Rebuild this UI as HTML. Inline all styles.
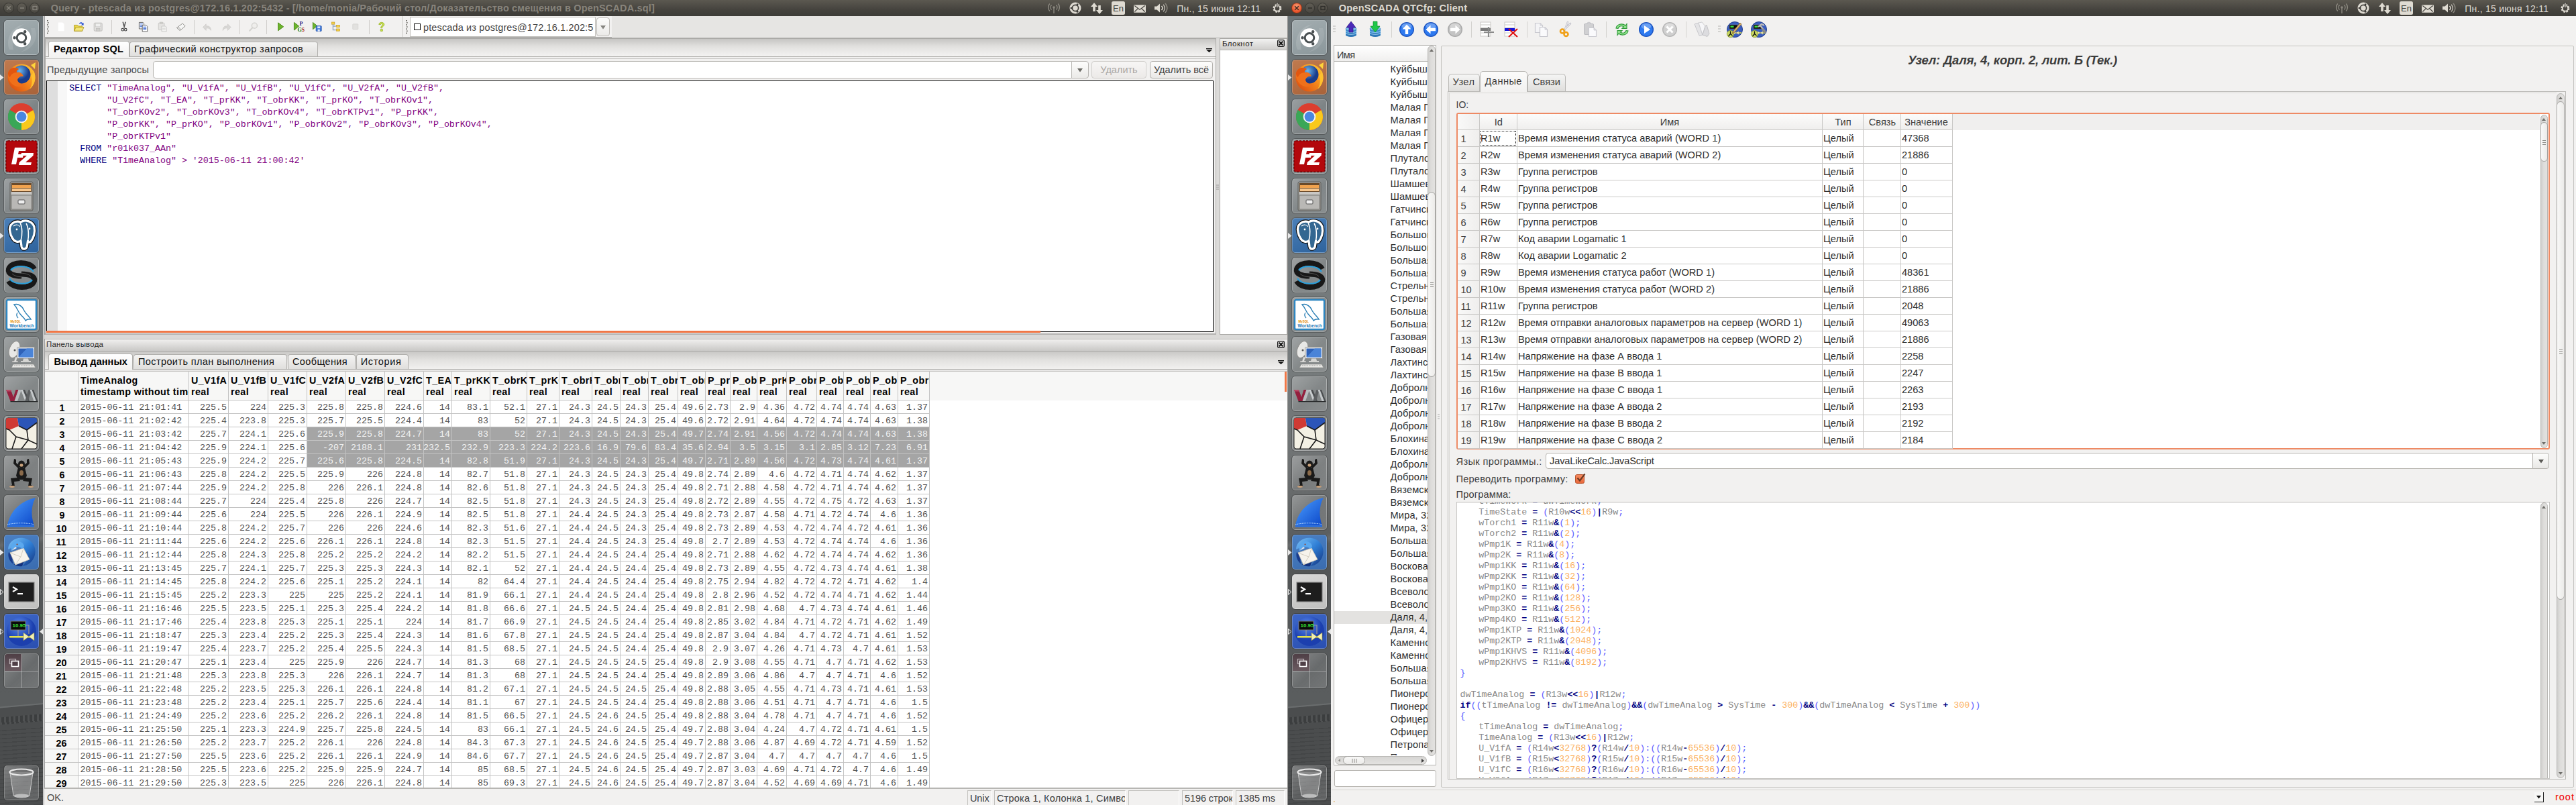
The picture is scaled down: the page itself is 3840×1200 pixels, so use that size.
<!DOCTYPE html><html><head><meta charset="utf-8"><title>desktop</title><style>
html,body{margin:0;padding:0;background:#3c3b37;}
body{width:3840px;height:1200px;position:relative;overflow:hidden;font-family:"Liberation Sans",sans-serif;}
div{position:absolute;box-sizing:border-box;}
.t{white-space:pre;}
svg{position:absolute;overflow:visible;}
.scr{left:0;top:0;width:1920px;height:1200px;overflow:hidden;}
</style></head><body><div class="scr">
<div style="left:0px;top:24px;width:64px;height:1176px;background:linear-gradient(#6b7376 0%,#73797b 23%,#767b7c 45%,#6f7273 57%,#5d6061 65%,#525556 70%,#55585a 79%,#5a5d5e 86%,#5a5d5e 100%);"></div>
<div style="left:0px;top:790px;width:64px;height:40px;background:linear-gradient(170deg,rgba(130,133,134,0) 30%,rgba(130,133,134,.35) 45%,rgba(130,133,134,0) 60%);"></div>
<div style="left:0px;top:1040px;width:64px;height:160px;overflow:hidden;">
<div style="left:-40px;top:19px;width:160px;height:190px;background:#4b4d4e;transform:rotate(-5deg);transform-origin:0 0;"></div>
<div style="left:-40px;top:17px;width:160px;height:2px;background:#6a6d6e;transform:rotate(-5deg);transform-origin:0 0;"></div>
<div style="left:-40px;top:33px;width:160px;height:11px;background:repeating-linear-gradient(90deg,#393b3c 0 4px,#505253 4px 7px);transform:rotate(-5deg);transform-origin:0 0;opacity:.85;"></div>
<div style="left:-40px;top:49px;width:160px;height:160px;background:repeating-linear-gradient(0deg,rgba(58,60,61,.45) 0 1.500px,rgba(80,83,84,.0) 1.500px 6px);transform:rotate(-4deg);transform-origin:0 0;"></div>
</div>
<div style="left:64px;top:24px;width:1px;height:1176px;background:#dadada;"></div>
<div style="left:65px;top:24px;width:2px;height:1176px;background:#a8a8a8;"></div>
<div style="left:6px;top:30px;width:52px;height:52px;border-radius:5px;background:linear-gradient(160deg,#a3adb0,#8b979b);border:1px solid rgba(255,255,255,.25);box-shadow:0 0 0 1px rgba(40,40,40,.35);"></div>
<svg style="left:6px;top:30px" width="52" height="52" viewBox="0 0 52 52"><path d="M8 44C2 30 10 10 30 6C18 12 10 26 14 44z" fill="rgba(255,255,255,.13)"/><path d="M46 12C52 26 44 44 24 48C36 42 44 30 40 12z" fill="rgba(255,255,255,.10)"/><g transform="translate(0,0.3)"><circle cx="26" cy="26" r="14" fill="#fff"/><circle cx="26" cy="26" r="6.8" fill="none" stroke="#4a5052" stroke-width="3"/><circle cx="15.6" cy="26" r="2.2" fill="#4a5052"/><circle cx="31.2" cy="17" r="2.2" fill="#4a5052"/><circle cx="31.2" cy="35" r="2.2" fill="#4a5052"/></g></svg>
<div style="left:6px;top:89px;width:52px;height:52px;border-radius:5px;background:linear-gradient(160deg,#c07a4e,#a8633a);border:1px solid rgba(255,255,255,.25);box-shadow:0 0 0 1px rgba(40,40,40,.35);"></div>
<svg style="left:6px;top:89px" width="52" height="52" viewBox="0 0 52 52"><defs><radialGradient id="ffg" cx="40%" cy="30%"><stop offset="0" stop-color="#6ab8f0"/><stop offset="1" stop-color="#1a3c8c"/></radialGradient><linearGradient id="ffo" x1="1" y1="0" x2="0" y2="1"><stop offset="0" stop-color="#ffd43a"/><stop offset=".45" stop-color="#f58a1c"/><stop offset="1" stop-color="#d8430e"/></linearGradient></defs><circle cx="26" cy="27" r="20.500" fill="url(#ffo)"/><path d="M40 8L47 4L46 14z" fill="#ffd43a"/><circle cx="26" cy="22" r="13.500" fill="url(#ffg)"/><path d="M6 20C8 12 16 10 22 14C19 15 18 17 19 19C24 18 28 21 29 25C25 24 21 26 20 30C21 35 27 38 33 36C28 42 16 42 10 34C7 30 5 25 6 20z" fill="#f0701a"/><path d="M6 20C8 12 16 10 22 14C19 15 18 17 19 19C14 19 10 22 9 26C7 25 6 23 6 20z" fill="#e2560f"/><path d="M44 16C49 26 46 38 38 44C42 38 43 30 40 24C42 22 44 19 44 16z" fill="#ffc02e"/></svg>
<svg style="left:0px;top:111px" width="6" height="9" viewBox="0 0 6 9"><path d="M0 0L5.500 4.500L0 9z" fill="#e8e8e8"/></svg>
<div style="left:6px;top:148px;width:52px;height:52px;border-radius:5px;background:linear-gradient(135deg,rgba(255,255,255,.30),rgba(255,255,255,.10) 55%,rgba(255,255,255,.16));border:1px solid rgba(255,255,255,.22);box-shadow:0 0 0 1px rgba(40,40,40,.35);"></div>
<svg style="left:6px;top:148px" width="52" height="52" viewBox="0 0 52 52"><circle cx="26" cy="26" r="20" fill="#dc3e2f"/><path d="M26 26L8.7 16A20 20 0 0 0 26 46z" fill="#3aa757"/><path d="M26 26L26 46A20 20 0 0 0 43.3 16z" fill="#f9c91c"/><path d="M26 26L8.7 16A20 20 0 0 1 43.3 16z" fill="#dc3e2f"/><path d="M26 26L16 43.3A20 20 0 0 1 8.7 16z" fill="#3aa757"/><circle cx="26" cy="26" r="9.3" fill="#f4f4f4"/><circle cx="26" cy="26" r="7.4" fill="#4a87e0"/></svg>
<div style="left:6px;top:207px;width:52px;height:52px;border-radius:5px;background:linear-gradient(135deg,rgba(255,255,255,.30),rgba(255,255,255,.10) 55%,rgba(255,255,255,.16));border:1px solid rgba(255,255,255,.22);box-shadow:0 0 0 1px rgba(40,40,40,.35);"></div>
<svg style="left:6px;top:207px" width="52" height="52" viewBox="0 0 52 52"><rect x="3" y="3" width="46" height="46" rx="3" fill="#b3080c" stroke="#7d0003" stroke-width="1.5" stroke-dasharray="3 2"/><path d="M11 38L16 13H33L32 18H22L21 23H29L28 28H20L18 38z" fill="#fff"/><path d="M26 21H44L43.5 25L32 35H41L40 39H22L22.7 35L34 25H25z" fill="#fff"/></svg>
<div style="left:6px;top:266px;width:52px;height:52px;border-radius:5px;background:linear-gradient(135deg,rgba(255,255,255,.30),rgba(255,255,255,.10) 55%,rgba(255,255,255,.16));border:1px solid rgba(255,255,255,.22);box-shadow:0 0 0 1px rgba(40,40,40,.35);"></div>
<svg style="left:6px;top:266px" width="52" height="52" viewBox="0 0 52 52"><rect x="9" y="5" width="34" height="43" rx="2" fill="#9b9a97" stroke="#5d5c59"/><rect x="11" y="7" width="30" height="16" fill="#6a4a2a"/><rect x="12" y="10" width="28" height="4" fill="#f0a24e"/><rect x="12" y="15" width="28" height="4" fill="#f7c78e"/><rect x="11" y="20" width="30" height="4" fill="#c9c8c5"/><rect x="11" y="25" width="30" height="21" fill="#b9b8b5" stroke="#7d7c79"/><rect x="21" y="32" width="10" height="6" rx="1" fill="#eee" stroke="#555"/></svg>
<div style="left:6px;top:325px;width:52px;height:52px;border-radius:5px;background:linear-gradient(160deg,#4a7fb8,#2e639d);border:1px solid rgba(255,255,255,.25);box-shadow:0 0 0 1px rgba(40,40,40,.35);"></div>
<svg style="left:6px;top:325px" width="52" height="52" viewBox="0 0 52 52"><path d="M9 21C6 9 16 3 25 6C31 2 42 4 45 13C47 21 44 30 40 35C38.500 37 36 36 35.500 34L34.500 41C34 47 27 48 26 42.500L25 34C21 37 15 35 12.500 30C10.500 27 9.500 24 9 21z" fill="none" stroke="#111" stroke-width="5.500" stroke-linejoin="round"/><path d="M9 21C6 9 16 3 25 6C31 2 42 4 45 13C47 21 44 30 40 35C38.500 37 36 36 35.500 34L34.500 41C34 47 27 48 26 42.500L25 34C21 37 15 35 12.500 30C10.500 27 9.500 24 9 21z" fill="#336791" stroke="#fff" stroke-width="3.200" stroke-linejoin="round"/><path d="M24 7C27.500 14 27.500 25 25 34M33 8C37 15 37 27 35.500 34" stroke="#fff" stroke-width="1.600" fill="none"/><path d="M14 12C18 9 22 10 24 13" stroke="#fff" stroke-width="1.200" fill="none"/><circle cx="19" cy="17" r="1.400" fill="#fff"/><circle cx="38" cy="16" r="1.400" fill="#fff"/></svg>
<svg style="left:0px;top:347px" width="6" height="9" viewBox="0 0 6 9"><path d="M0 0L5.500 4.500L0 9z" fill="#e8e8e8"/></svg>
<div style="left:6px;top:384px;width:52px;height:52px;border-radius:5px;background:linear-gradient(135deg,rgba(255,255,255,.30),rgba(255,255,255,.10) 55%,rgba(255,255,255,.16));border:1px solid rgba(255,255,255,.22);box-shadow:0 0 0 1px rgba(40,40,40,.35);"></div>
<svg style="left:6px;top:384px" width="52" height="52" viewBox="0 0 52 52"><path d="M45 17C39 5 11 5 7 17C5 25 16 27.500 26 27.500" fill="none" stroke="#181818" stroke-width="8"/><path d="M7 35C13 47 41 47 45 35C47 27 36 24.500 26 24.500" fill="none" stroke="#181818" stroke-width="8"/><path d="M44 21C38 11 14 11 10 19" fill="none" stroke="#2aa0dc" stroke-width="2.200"/><path d="M8 31C14 41 38 41 42 33" fill="none" stroke="#2aa0dc" stroke-width="2.200"/><path d="M12 24C16 28 22 28.500 27 29M40 28C36 24 30 23.500 25 23" fill="none" stroke="#555" stroke-width="1"/></svg>
<div style="left:6px;top:443px;width:52px;height:52px;border-radius:5px;background:linear-gradient(135deg,rgba(255,255,255,.30),rgba(255,255,255,.10) 55%,rgba(255,255,255,.16));border:1px solid rgba(255,255,255,.22);box-shadow:0 0 0 1px rgba(40,40,40,.35);"></div>
<svg style="left:6px;top:443px" width="52" height="52" viewBox="0 0 52 52"><rect x="4" y="4" width="44" height="44" rx="2" fill="#fff" stroke="#2e86c1" stroke-width="2.400"/><path d="M15 11C21 9 27 13 30 20C33 26 38 29 40 33C37 32.500 34 33 32 35C31 31 27 29 24 25C21 22 20 16 15 11z" fill="#fff" stroke="#2a7fb5" stroke-width="1.400"/><path d="M20 23C18 26 19 29 21 31" fill="none" stroke="#2a7fb5" stroke-width="1.300"/></svg>
<div class="t" style="top:476.5px;line-height:6px;font-size:4.5px;color:#e48e00;font-weight:bold;left:15.5px;">MySQL</div>
<div class="t" style="top:480.5px;line-height:9px;font-size:6.7px;color:#1f78b4;font-weight:bold;left:14.5px;">Workbench</div>
<div style="left:6px;top:502px;width:52px;height:52px;border-radius:5px;background:linear-gradient(135deg,rgba(255,255,255,.30),rgba(255,255,255,.10) 55%,rgba(255,255,255,.16));border:1px solid rgba(255,255,255,.22);box-shadow:0 0 0 1px rgba(40,40,40,.35);"></div>
<svg style="left:6px;top:502px" width="52" height="52" viewBox="0 0 52 52"><ellipse cx="15.500" cy="19" rx="7.500" ry="13" fill="#e8e8e6" stroke="#8f8f8c" transform="rotate(20 15.500 19)"/><circle cx="16" cy="20" r="1.500" fill="#555"/><path d="M17 30L15 36H12V38H21V36H18.500L20 30z" fill="#e0e0de" stroke="#8f8f8c" stroke-width=".6"/><rect x="19.500" y="15.500" width="26" height="17" rx="1" fill="#f4f4f2" stroke="#8b8b88"/><rect x="21.500" y="17.500" width="22" height="13" fill="#2e62b8"/><path d="M21.500 30.500L34 17.500H43.500V30.500z" fill="#4a84d8"/><path d="M29 32.500H36L37 36H28z" fill="#d5d5d2"/><rect x="25" y="36" width="15" height="1.500" fill="#e5e5e2"/><path d="M14 41H44L47 46H11z" fill="#e8e8e5" stroke="#8f8f8c" stroke-width=".6"/><path d="M15 43H43" stroke="#9a9a97" stroke-width="1" stroke-dasharray="1.500 1"/></svg>
<div style="left:6px;top:561px;width:52px;height:52px;border-radius:5px;background:linear-gradient(135deg,rgba(255,255,255,.30),rgba(255,255,255,.10) 55%,rgba(255,255,255,.16));border:1px solid rgba(255,255,255,.22);box-shadow:0 0 0 1px rgba(40,40,40,.35);"></div>
<svg style="left:6px;top:561px" width="52" height="52" viewBox="0 0 52 52"><path d="M3 20H10L14 31L17.500 20H21.500L15.500 37H9.500z" fill="#94203e"/><path d="M3 20H10L11 22.500H4z" fill="#b84a66"/><path d="M21.500 20H26L20 37H15.500z" fill="#b9bdbf"/><path d="M25 20H30L37 37H31.500z" fill="#c9cdcf"/><path d="M28 20H31L38 37H35z" fill="#4c4f51"/><path d="M31 37L36.500 20H40.500L36 37z" fill="#5c5f61"/><path d="M38.500 20H43.500L50 37H44.500z" fill="#c4c8ca"/><path d="M41.500 20H44L50.500 37H48z" fill="#4c4f51"/><path d="M9.500 37H50.500V38.200H9.500z" fill="#2a2c2d"/></svg>
<div style="left:6px;top:620px;width:52px;height:52px;border-radius:5px;background:linear-gradient(135deg,rgba(255,255,255,.30),rgba(255,255,255,.10) 55%,rgba(255,255,255,.16));border:1px solid rgba(255,255,255,.22);box-shadow:0 0 0 1px rgba(40,40,40,.35);"></div>
<svg style="left:6px;top:620px" width="52" height="52" viewBox="0 0 52 52"><rect x="3" y="3" width="46" height="46" rx="3" fill="#f3f0e4" stroke="#222" stroke-width="1"/><path d="M3 6Q3 3 6 3H20L22 15L8 21L3 19z" fill="#cf3a34"/><path d="M20 3H46Q49 3 49 6V10L34 21L22 15z" fill="#2b55b8"/><path d="M22 15L34 21L49 10M34 21L36 36L49 42M36 36L26 49M36 36L18 31L8 21M18 31L12 49M8 21L3 19" stroke="#1a1a1a" stroke-width="1.6" fill="none"/></svg>
<div style="left:6px;top:679px;width:52px;height:52px;border-radius:5px;background:linear-gradient(135deg,rgba(255,255,255,.30),rgba(255,255,255,.10) 55%,rgba(255,255,255,.16));border:1px solid rgba(255,255,255,.22);box-shadow:0 0 0 1px rgba(40,40,40,.35);"></div>
<svg style="left:6px;top:679px" width="52" height="52" viewBox="0 0 52 52"><g fill="#1a1a1a"><ellipse cx="26" cy="13" rx="5" ry="5.5"/><path d="M21 18H31L34 30L31 36H21L18 30z"/><path d="M21 19L14 12L15 5L18 6L18 11L24 16zM31 19L38 12L37 5L34 6L34 11L28 16z"/><path d="M21 33L10 34L12 44L8 46L16 47L15 39L24 38zM31 33L42 34L40 44L44 46L36 47L37 39L28 38z"/></g><ellipse cx="26" cy="14.500" rx="2.6" ry="2.2" fill="#c9a27c"/><ellipse cx="26" cy="26" rx="3" ry="4" fill="#8a6a4a"/><ellipse cx="12" cy="46.500" rx="4" ry="1.4" fill="#c9a27c"/><ellipse cx="40" cy="46.500" rx="4" ry="1.4" fill="#c9a27c"/></svg>
<div style="left:6px;top:738px;width:52px;height:52px;border-radius:5px;background:linear-gradient(135deg,rgba(255,255,255,.30),rgba(255,255,255,.10) 55%,rgba(255,255,255,.16));border:1px solid rgba(255,255,255,.22);box-shadow:0 0 0 1px rgba(40,40,40,.35);"></div>
<svg style="left:6px;top:738px" width="52" height="52" viewBox="0 0 52 52"><defs><linearGradient id="shg" x1="0" y1="0" x2="1" y2="1"><stop offset="0" stop-color="#4da0ff"/><stop offset="1" stop-color="#0b46c8"/></linearGradient></defs><path d="M5 45C8 28 20 10 47 4C40 16 40 32 45 45z" fill="url(#shg)"/><path d="M5 45H45V48H5z" fill="#2f6fd8"/><path d="M5 44C15 41 35 41 45 44" stroke="#bfe0ff" stroke-width="1" fill="none" stroke-dasharray="1.5 1"/></svg>
<div style="left:6px;top:797px;width:52px;height:52px;border-radius:5px;background:linear-gradient(160deg,#4a80c4,#3a6cb0);border:1px solid rgba(255,255,255,.25);box-shadow:0 0 0 1px rgba(40,40,40,.35);"></div>
<svg style="left:6px;top:797px" width="52" height="52" viewBox="0 0 52 52"><defs><linearGradient id="tbg" x1="0" y1="0" x2="1" y2="1"><stop offset="0" stop-color="#7cc0f4"/><stop offset=".5" stop-color="#2f7fd6"/><stop offset="1" stop-color="#14337e"/></linearGradient></defs><path d="M6 22C6 10 18 3 29 5C41 7 49 18 46 30C44 39 37 46 27 47C33 42 35 36 33 30C31 22 24 18 16 19C12 19.500 8 21 6 22z" fill="url(#tbg)"/><path d="M7 26C5 32 8 40 14 44C12 40 12 36 14 33z" fill="#1a3c8c"/><path d="M27 47C22 48 17 46 14 44C20 44 26 42 30 38z" fill="#14337e"/><path d="M9 27L29 20L38 37L17 45z" fill="#f6f3ec" stroke="#c4bfb2" stroke-width=".8"/><path d="M9 27L25 33L29 20M25 33L17 45" stroke="#cdc8bb" stroke-width=".9" fill="none"/><path d="M13 13C17 9 24 9 28 13C31 16 30 20 27 21C25 18 21 17 17 18L11 24C10 20 11 16 13 13z" fill="#5aa8ee"/><path d="M11 24L17 18L19 20z" fill="#dfe6ee"/><circle cx="19.500" cy="14.500" r="1" fill="#a03818"/></svg>
<svg style="left:0px;top:819px" width="6" height="9" viewBox="0 0 6 9"><path d="M0 0L5.500 4.500L0 9z" fill="#e8e8e8"/></svg>
<div style="left:6px;top:856px;width:52px;height:52px;border-radius:5px;background:linear-gradient(160deg,#d9d9d8,#bfbfbe);border:1px solid rgba(255,255,255,.25);box-shadow:0 0 0 1px rgba(40,40,40,.35);"></div>
<svg style="left:6px;top:856px" width="52" height="52" viewBox="0 0 52 52"><rect x="7" y="12" width="38" height="29" fill="#1d1d1d" stroke="#888" stroke-width="1.2"/><path d="M13 19L19 22.500L13 26" stroke="#fff" stroke-width="2.2" fill="none"/><rect x="20" y="28" width="8" height="2.2" fill="#fff"/></svg>
<svg style="left:0px;top:878px" width="6" height="9" viewBox="0 0 6 9"><path d="M0.500 0.500L5 4.500L0.500 8.500z" fill="none" stroke="#e8e8e8"/></svg>
<div style="left:6px;top:915px;width:52px;height:52px;border-radius:5px;background:linear-gradient(160deg,#3c66c8,#2a4fb0);border:1px solid rgba(255,255,255,.25);box-shadow:0 0 0 1px rgba(40,40,40,.35);"></div>
<svg style="left:6px;top:915px" width="52" height="52" viewBox="0 0 52 52"><defs><radialGradient id="osg" cx="40%" cy="30%"><stop offset="0" stop-color="#5a8cf0"/><stop offset="1" stop-color="#1c3fae"/></radialGradient></defs><circle cx="26" cy="26" r="22" fill="url(#osg)"/><rect x="10" y="11" width="22" height="13" fill="#0a0a0a" stroke="#777" stroke-width="1"/><path d="M32 17H37V30M21 24V34" stroke="#999" stroke-width="1.2" fill="none"/><rect x="8" y="33" width="36" height="2.6" fill="#e6e34a"/><path d="M29 28L29 40L37 34zM45 28L45 40L37 34z" fill="#f3efb0" stroke="#8a8740" stroke-width=".6"/></svg>
<div class="t" style="top:927.0px;line-height:11px;font-size:8px;color:#35e635;font-weight:bold;left:18.5px;">10.95</div>
<svg style="left:0px;top:937px" width="6" height="9" viewBox="0 0 6 9"><path d="M0.500 0.500L5 4.500L0.500 8.500z" fill="none" stroke="#e8e8e8"/></svg>
<svg style="left:59px;top:937px" width="6" height="9" viewBox="0 0 6 9"><path d="M5.500 0L0 4.500L5.500 9z" fill="#e8e8e8"/></svg>
<div style="left:6px;top:974px;width:52px;height:52px;border-radius:5px;background:linear-gradient(135deg,rgba(255,255,255,.30),rgba(255,255,255,.10) 55%,rgba(255,255,255,.16));border:1px solid rgba(255,255,255,.22);box-shadow:0 0 0 1px rgba(40,40,40,.35);"></div>
<div style="left:7px;top:975px;width:25px;height:25px;background:linear-gradient(#4f3f46,#6a5a60);border-radius:4px 0 0 0;"></div>
<div style="left:32px;top:975px;width:1px;height:50px;background:rgba(255,255,255,.35);"></div>
<div style="left:7px;top:1000px;width:50px;height:1px;background:rgba(255,255,255,.35);"></div>
<svg style="left:6px;top:974px" width="52" height="52" viewBox="0 0 52 52"><rect x="8.500" y="8.500" width="9" height="7" fill="none" stroke="#b9b0b4" stroke-width="1.2"/><rect x="11.500" y="11.500" width="10" height="8" fill="#4f3f46" stroke="#fff" stroke-width="1.6"/></svg>
<div style="left:6px;top:1141px;width:52px;height:52px;border-radius:5px;background:linear-gradient(135deg,rgba(255,255,255,.30),rgba(255,255,255,.10) 55%,rgba(255,255,255,.16));border:1px solid rgba(255,255,255,.22);box-shadow:0 0 0 1px rgba(40,40,40,.35);"></div>
<svg style="left:6px;top:1141px" width="52" height="52" viewBox="0 0 52 52"><path d="M9 11L14 45C18 49 34 49 38 45L43 11z" fill="rgba(200,200,200,.35)" stroke="rgba(235,235,235,.7)" stroke-width="1"/><ellipse cx="26" cy="10" rx="17.500" ry="4.500" fill="rgba(120,120,120,.5)" stroke="#e9e9e9" stroke-width="2.2"/><ellipse cx="26" cy="45" rx="11" ry="2.500" fill="rgba(235,235,235,.55)"/></svg>
<div style="left:67px;top:24px;width:1852px;height:1176px;background:#e6e5e3;"></div>
<div style="left:67px;top:24px;width:533px;height:31px;background:#f2f1f0;"></div>
<div style="left:601px;top:24px;width:311px;height:31px;background:#f2f1f0;"></div>
<div style="left:67px;top:55px;width:845px;height:1px;background:#a9a8a6;"></div>
<div style="left:67px;top:56px;width:845px;height:1px;background:#b4b3b1;"></div>
<div style="left:67px;top:57px;width:845px;height:1px;background:#c6c5c3;"></div>
<div style="left:912px;top:56px;width:1007px;height:1px;background:#bab9b7;"></div>
<div style="left:600px;top:24px;width:1px;height:31px;background:#c9c8c6;"></div>
<svg style="left:70px;top:29px" width="4" height="22" viewBox="0 0 4 22"><rect x="0" y="1.0" width="1.6" height="1.6" fill="#55534e"/><rect x="1" y="4.1" width="1.6" height="1.6" fill="#55534e"/><rect x="0" y="7.2" width="1.6" height="1.6" fill="#55534e"/><rect x="1" y="10.3" width="1.6" height="1.6" fill="#55534e"/><rect x="0" y="13.4" width="1.6" height="1.6" fill="#55534e"/><rect x="1" y="16.5" width="1.6" height="1.6" fill="#55534e"/><rect x="0" y="19.6" width="1.6" height="1.6" fill="#55534e"/></svg>
<svg style="left:605px;top:29px" width="4" height="22" viewBox="0 0 4 22"><rect x="0" y="1.0" width="1.6" height="1.6" fill="#55534e"/><rect x="1" y="4.1" width="1.6" height="1.6" fill="#55534e"/><rect x="0" y="7.2" width="1.6" height="1.6" fill="#55534e"/><rect x="1" y="10.3" width="1.6" height="1.6" fill="#55534e"/><rect x="0" y="13.4" width="1.6" height="1.6" fill="#55534e"/><rect x="1" y="16.5" width="1.6" height="1.6" fill="#55534e"/><rect x="0" y="19.6" width="1.6" height="1.6" fill="#55534e"/></svg>
<div style="left:166px;top:30px;width:1px;height:21px;background:#cfcdca;"></div>
<div style="left:289px;top:30px;width:1px;height:21px;background:#cfcdca;"></div>
<div style="left:357px;top:30px;width:1px;height:21px;background:#cfcdca;"></div>
<div style="left:397px;top:30px;width:1px;height:21px;background:#cfcdca;"></div>
<div style="left:550px;top:30px;width:1px;height:21px;background:#cfcdca;"></div>
<svg style="left:81.8px;top:31.2px" width="17.6" height="17.6" viewBox="0 0 22 22"><path d="M6 3H14L17 6V19H6z" fill="#fff"/></svg>
<svg style="left:109.0px;top:31.2px" width="17.6" height="17.6" viewBox="0 0 22 22"><path d="M2 8H8L10 10H17V19H2z" fill="#e8d44a" stroke="#a89318"/><path d="M2 19L5 12H20L17 19z" fill="#f3e57a" stroke="#a89318"/><path d="M11 5C13 2 17 2 18 5L19.500 3.500V8H15L16.600 6.400C15.500 4.500 13 4.500 12.500 6z" fill="#2b55d4"/></svg>
<svg style="left:136.9px;top:31.2px" width="17.6" height="17.6" viewBox="0 0 22 22"><rect x="4" y="4" width="15" height="15" rx="1.500" fill="#e1e0de" stroke="#b9b8b5"/><rect x="7" y="5" width="9" height="6" fill="#efefee" stroke="#c5c4c1" stroke-width=".7"/><rect x="8" y="14" width="7" height="5" fill="#d0cfcc" stroke="#b9b8b5" stroke-width=".7"/></svg>
<svg style="left:176.2px;top:31.2px" width="17.6" height="17.6" viewBox="0 0 22 22"><path d="M9 2L12 13M14 2L11 13" stroke="#555" stroke-width="2" fill="none"/><circle cx="8.500" cy="16.500" r="2.300" fill="#eee" stroke="#444" stroke-width="1.300"/><circle cx="14" cy="16.500" r="2.300" fill="#eee" stroke="#444" stroke-width="1.300"/></svg>
<svg style="left:204.8px;top:31.2px" width="17.6" height="17.6" viewBox="0 0 22 22"><path d="M3 3H10L12 5V15H3z" fill="#fff" stroke="#444"/><path d="M4.500 6H10M4.500 8.500H10M4.500 11H10" stroke="#2a5cd0" stroke-width="1.200"/><path d="M9 8H16L18.500 10.500V20H9z" fill="#fff" stroke="#444"/><path d="M10.500 11.500H16.500M10.500 14H16.500M10.500 16.500H16.500" stroke="#2a5cd0" stroke-width="1.300"/></svg>
<svg style="left:233.2px;top:31.2px" width="17.6" height="17.6" viewBox="0 0 22 22"><rect x="4" y="4" width="11" height="13" rx="1" fill="#e4e3e1" stroke="#c3c2bf"/><rect x="7" y="2.500" width="5" height="3" fill="#d2d1ce" stroke="#bcbbb8" stroke-width=".7"/><path d="M10 10H17L19 12V20H10z" fill="#f3f3f2" stroke="#c3c2bf"/><path d="M11.500 14H17M11.500 16.500H17" stroke="#d0cfcc"/></svg>
<svg style="left:260.7px;top:31.2px" width="17.6" height="17.6" viewBox="0 0 22 22"><path d="M3 13L14 5L19 10L9 18z" fill="#f6f6f5" stroke="#8f8e8b" stroke-width="1.200"/><path d="M3 13L6 11L11 16.500L9 18z" fill="#e2e1df" stroke="#8f8e8b" stroke-width=".8"/></svg>
<svg style="left:300.2px;top:31.2px" width="17.6" height="17.6" viewBox="0 0 22 22"><path d="M3 12L9 6V10C15 9 18 12 18 18C16 14 13 13 9 14V18z" fill="#d9d8d6" stroke="#c9c8c5" stroke-width=".8"/></svg>
<svg style="left:328.9px;top:31.2px" width="17.6" height="17.6" viewBox="0 0 22 22"><path d="M19 12L13 6V10C7 9 4 12 4 18C6 14 9 13 13 14V18z" fill="#d9d8d6" stroke="#c9c8c5" stroke-width=".8"/></svg>
<svg style="left:368.8px;top:31.2px" width="17.6" height="17.6" viewBox="0 0 22 22"><circle cx="13" cy="9" r="5" fill="#efeeec" stroke="#cfcecb" stroke-width="1.600"/><path d="M9.500 12.500L4 18.500" stroke="#d5d4d1" stroke-width="2.600" stroke-linecap="round"/></svg>
<svg style="left:408.7px;top:31.2px" width="17.6" height="17.6" viewBox="0 0 22 22"><path d="M7 3.500L17 11L7 18.500z" fill="#6cb52d" stroke="#4c8a17" stroke-width="1.200" stroke-linejoin="round"/></svg>
<svg style="left:436.2px;top:31.2px" width="17.6" height="17.6" viewBox="0 0 22 22"><path d="M3 3L12 10L3 17.500z" fill="#6cb52d" stroke="#4c8a17" stroke-width="1.200" stroke-linejoin="round"/></svg>
<div class="t" style="top:30.0px;line-height:11px;font-size:8px;color:#1a1a8a;font-family:'Liberation Serif',serif;font-weight:bold;left:446.5px;">P</div>
<div class="t" style="top:38.5px;line-height:11px;font-size:8px;color:#117a11;font-family:'Liberation Serif',serif;font-weight:bold;left:443.5px;">G</div>
<div class="t" style="top:38.5px;line-height:11px;font-size:8px;color:#a01414;font-family:'Liberation Serif',serif;font-weight:bold;left:449.5px;">S</div>
<svg style="left:464.2px;top:31.2px" width="17.6" height="17.6" viewBox="0 0 22 22"><path d="M3 3L11 9.500L3 16z" fill="#6cb52d" stroke="#4c8a17" stroke-width="1.200" stroke-linejoin="round"/><rect x="9" y="9.500" width="10" height="10" rx="1" fill="#3f78d8" stroke="#2a55a8"/><rect x="11.500" y="10.500" width="5" height="3.500" fill="#dfe9fb"/><rect x="12" y="16" width="4" height="3.500" fill="#dfe9fb"/></svg>
<svg style="left:492.2px;top:31.2px" width="17.6" height="17.6" viewBox="0 0 22 22"><rect x="3" y="2.500" width="5.500" height="4" fill="#f3cf4a" stroke="#c49a18" stroke-width=".8"/><rect x="12" y="8" width="6" height="4" fill="#f3cf4a" stroke="#c49a18" stroke-width=".8"/><rect x="12" y="15" width="6" height="4" fill="#f3cf4a" stroke="#c49a18" stroke-width=".8"/><path d="M5.500 6.500V10C5.500 10 6 10 11 10M5.500 10V17H11" stroke="#8fa3bd" stroke-width="1.600" fill="none"/></svg>
<svg style="left:520.8px;top:31.2px" width="17.6" height="17.6" viewBox="0 0 22 22"><rect x="6" y="6" width="10" height="10" rx="1" fill="#e2e1df" stroke="#d3d2cf"/></svg>
<svg style="left:560.2px;top:31.2px" width="17.6" height="17.6" viewBox="0 0 22 22"><path d="M6 7C6 1.500 16 1.500 16 7C16 10 12 10.500 12 13.500H9.500C9.500 9.500 12.500 9.500 12.500 7C12.500 5 9.500 5 9.500 7z" fill="#c4dc4e" stroke="#9ab52a" stroke-width="1"/><rect x="9" y="15.500" width="4" height="4" rx=".8" fill="#c4dc4e" stroke="#9ab52a"/></svg>
<div style="left:611px;top:25px;width:277px;height:30px;background:#fff;border:1px solid #c2c0bc;"></div>
<div style="left:889px;top:26px;width:20px;height:28px;background:linear-gradient(#fcfcfb,#ebeae8);border:1px solid #bdbbb7;border-radius:4px;"></div>
<svg style="left:895px;top:38px" width="8" height="6" viewBox="0 0 8 6"><path d="M0 0H8L4 5.5z" fill="#85847f"/></svg>
<div style="left:617px;top:35px;width:10px;height:10px;border:1.4px solid #111;background:#fff;"></div>
<div class="t" style="top:31.0px;line-height:20px;font-size:14.5px;color:#464646;letter-spacing:0.134px;left:631px;">ptescada из postgres@172.16.1.202:5</div>
<div style="left:67px;top:57px;width:1746px;height:442px;background:#f2f1f0;border:1px solid #a9a8a5;border-bottom:2px solid #b4b3b1;"></div>
<div style="left:68px;top:58px;width:1744px;height:26px;background:linear-gradient(#c6c5c3,#e2e1df 45%,#f2f1f0 95%);"></div>
<div style="left:68px;top:84px;width:1744px;height:1px;background:#aeadaa;"></div>
<div style="left:68px;top:87px;width:1744px;height:1px;background:#c4c3c1;"></div>
<div style="left:72px;top:61px;width:121px;height:24px;background:linear-gradient(#ffffff,#f2f1f0);border:1px solid #b0afac;border-bottom:none;border-radius:4px 4px 0 0;"></div>
<div style="left:193px;top:62px;width:281px;height:22px;background:linear-gradient(#f4f4f3,#e0dfdd);border:1px solid #b0afac;border-bottom:none;border-radius:4px 4px 0 0;"></div>
<div class="t" style="top:63.0px;line-height:20px;font-size:14.5px;color:#000;letter-spacing:0.324px;font-weight:bold;left:80px;">Редактор SQL</div>
<div class="t" style="top:63.0px;line-height:20px;font-size:14.5px;color:#111;letter-spacing:0.405px;left:200px;">Графический конструктор запросов</div>
<svg style="left:1798px;top:72px" width="9" height="6" viewBox="0 0 9 6"><path d="M0 0H9V1.3H0zM0 2.2H9L4.5 6z" fill="#111"/></svg>
<div class="t" style="top:94.0px;line-height:20px;font-size:14.5px;color:#4a4a4a;letter-spacing:0.153px;left:70px;">Предыдущие запросы</div>
<div style="left:228px;top:91px;width:1370px;height:26px;background:#fff;border:1px solid #b9b7b3;border-radius:4px 0 0 4px;"></div>
<div style="left:1597px;top:91px;width:26px;height:26px;background:linear-gradient(#fdfdfc,#ebeae8);border:1px solid #b9b7b3;border-radius:0 4px 4px 0;"></div>
<svg style="left:1606px;top:102px" width="8" height="6" viewBox="0 0 8 6"><path d="M0 0H8L4 5.5z" fill="#6a6964"/></svg>
<div style="left:1627px;top:91px;width:82px;height:26px;background:linear-gradient(#f7f6f5,#eceae8);border:1px solid #d0cecb;border-radius:4px;"></div>
<div class="t" style="top:94.0px;line-height:20px;font-size:14.5px;color:#a9a7a3;left:1168px;width:1000px;text-align:center;">Удалить</div>
<div style="left:1714px;top:91px;width:94px;height:26px;background:linear-gradient(#fdfdfc,#ebe9e7);border:1px solid #b2b0ac;border-radius:4px;"></div>
<div class="t" style="top:94.0px;line-height:20px;font-size:14.5px;color:#3c3c3c;left:1261px;width:1000px;text-align:center;">Удалить всё</div>
<div style="left:69px;top:120px;width:1740px;height:375px;background:#fff;border:1px solid #000;"></div>
<div style="left:70px;top:121px;width:16px;height:373px;background:#dedede;"></div>
<div style="left:86px;top:121px;width:14px;height:373px;background:#f7f7f7;"></div>
<div class="t" style="top:121.5px;line-height:19px;font-size:13.3px;color:#000;font-family:'Liberation Mono',monospace;left:103.3px;"><span style="color:#00007f">SELECT</span><span style="color:#7f007f"> "TimeAnalog", "U_V1fA", "U_V1fB", "U_V1fC", "U_V2fA", "U_V2fB",</span></div>
<div class="t" style="top:139.5px;line-height:19px;font-size:13.3px;color:#000;font-family:'Liberation Mono',monospace;left:159.2px;"><span style="color:#7f007f">"U_V2fC", "T_EA", "T_prKK", "T_obrKK", "T_prKO", "T_obrKOv1",</span></div>
<div class="t" style="top:157.5px;line-height:19px;font-size:13.3px;color:#000;font-family:'Liberation Mono',monospace;left:159.2px;"><span style="color:#7f007f">"T_obrKOv2", "T_obrKOv3", "T_obrKOv4", "T_obrKTPv1", "P_prKK",</span></div>
<div class="t" style="top:175.5px;line-height:19px;font-size:13.3px;color:#000;font-family:'Liberation Mono',monospace;left:159.2px;"><span style="color:#7f007f">"P_obrKK", "P_prKO", "P_obrKOv1", "P_obrKOv2", "P_obrKOv3", "P_obrKOv4",</span></div>
<div class="t" style="top:193.5px;line-height:19px;font-size:13.3px;color:#000;font-family:'Liberation Mono',monospace;left:159.2px;"><span style="color:#7f007f">"P_obrKTPv1"</span></div>
<div class="t" style="top:211.5px;line-height:19px;font-size:13.3px;color:#000;font-family:'Liberation Mono',monospace;left:119.3px;"><span style="color:#00007f">FROM</span><span style="color:#7f007f"> "r01k037_AAn"</span></div>
<div class="t" style="top:229.5px;line-height:19px;font-size:13.3px;color:#000;font-family:'Liberation Mono',monospace;left:119.3px;"><span style="color:#00007f">WHERE</span><span style="color:#7f007f"> "TimeAnalog" &gt; '2015-06-11 21:00:42'</span></div>
<div style="left:69px;top:493px;width:1482px;height:3px;background:#f07746;"></div>
<svg style="left:989px;top:499px" width="10" height="4" viewBox="0 0 10 4"><path d="M1 0V4M4 0V4M7 0V4" stroke="#aaa" stroke-width="1"/></svg>
<div style="left:1813px;top:57px;width:5px;height:442px;background:#dcdbd9;"></div>
<div style="left:1818px;top:57px;width:101px;height:442px;background:#fff;border:1px solid #a9a8a5;"></div>
<div style="left:1819px;top:58px;width:99px;height:17px;background:linear-gradient(#f2f2f1,#cfcecc);border-bottom:1px solid #bcbbb8;"></div>
<div class="t" style="top:57.0px;line-height:16px;font-size:11.5px;color:#222;letter-spacing:0.419px;left:1822px;">Блокнот</div>
<svg style="left:1904px;top:59px" width="11" height="11" viewBox="0 0 11 11"><rect x=".7" y=".7" width="9.600" height="9.600" rx="1.500" fill="none" stroke="#111" stroke-width="1.300"/><path d="M2.800 2.800L8.200 8.200M8.200 2.800L2.800 8.200" stroke="#111" stroke-width="2"/></svg>
<svg style="left:1813px;top:275px" width="4" height="12" viewBox="0 0 4 12"><path d="M0 1H4M0 4H4M0 7H4" stroke="#999" stroke-width="1"/></svg>
<div style="left:66px;top:499px;width:1854px;height:6px;background:#dad9d7;"></div>
<div style="left:67px;top:505px;width:1852px;height:19px;background:linear-gradient(#f0efee,#c9c8c6);border-top:1px solid #bcbbb8;border-bottom:1px solid #aaa9a6;"></div>
<div class="t" style="top:504.5px;line-height:16px;font-size:11.5px;color:#2a2a2a;letter-spacing:0.201px;left:69px;">Панель вывода</div>
<svg style="left:1904px;top:508px" width="11" height="11" viewBox="0 0 11 11"><rect x=".7" y=".7" width="9.600" height="9.600" rx="1.500" fill="none" stroke="#111" stroke-width="1.300"/><path d="M2.800 2.800L8.200 8.200M8.200 2.800L2.800 8.200" stroke="#111" stroke-width="2"/></svg>
<div style="left:67px;top:524px;width:1852px;height:28px;background:linear-gradient(#c9c8c6,#e2e1df 45%,#f2f1f0 95%);"></div>
<div style="left:67px;top:550px;width:1852px;height:1px;background:#aeadaa;"></div>
<div style="left:67px;top:553px;width:1852px;height:1px;background:#c4c3c1;"></div>
<div style="left:72px;top:527px;width:126px;height:24px;background:linear-gradient(#ffffff,#f2f1f0);border:1px solid #b0afac;border-bottom:none;border-radius:4px 4px 0 0;"></div>
<div style="left:199px;top:528px;width:229px;height:22px;background:linear-gradient(#f4f4f3,#e0dfdd);border:1px solid #b0afac;border-bottom:none;border-radius:4px 4px 0 0;"></div>
<div style="left:429px;top:528px;width:101px;height:22px;background:linear-gradient(#f4f4f3,#e0dfdd);border:1px solid #b0afac;border-bottom:none;border-radius:4px 4px 0 0;"></div>
<div style="left:531px;top:528px;width:78px;height:22px;background:linear-gradient(#f4f4f3,#e0dfdd);border:1px solid #b0afac;border-bottom:none;border-radius:4px 4px 0 0;"></div>
<div class="t" style="top:529.0px;line-height:20px;font-size:14.5px;color:#000;letter-spacing:0.064px;font-weight:bold;left:80.5px;">Вывод данных</div>
<div class="t" style="top:529.0px;line-height:20px;font-size:14.5px;color:#111;letter-spacing:0.392px;left:206px;">Построить план выполнения</div>
<div class="t" style="top:529.0px;line-height:20px;font-size:14.5px;color:#111;letter-spacing:0.368px;left:436px;">Сообщения</div>
<div class="t" style="top:529.0px;line-height:20px;font-size:14.5px;color:#111;letter-spacing:0.624px;left:537.8px;">История</div>
<svg style="left:1905px;top:537px" width="9" height="6" viewBox="0 0 9 6"><path d="M0 0H9V1.3H0zM0 2.2H9L4.5 6z" fill="#111"/></svg>
<div style="left:67px;top:554px;width:1852px;height:620px;background:#fff;overflow:hidden;">
<div style="left:0px;top:0px;width:1852px;height:43px;background:#f7f7f6;"></div>
<div style="left:0px;top:0px;width:50px;height:620px;background:#f7f7f6;"></div>
<div style="left:391px;top:83px;width:928px;height:60px;background:#a5a5a5;"></div>
<div style="left:49px;top:0px;width:1px;height:620px;background:#c3c3c3;"></div>
<div style="left:214px;top:0px;width:1px;height:620px;background:#c3c3c3;"></div>
<div style="left:273px;top:0px;width:1px;height:620px;background:#c3c3c3;"></div>
<div style="left:332px;top:0px;width:1px;height:620px;background:#c3c3c3;"></div>
<div style="left:390px;top:0px;width:1px;height:620px;background:#c3c3c3;"></div>
<div style="left:448px;top:0px;width:1px;height:620px;background:#c3c3c3;"></div>
<div style="left:506px;top:0px;width:1px;height:620px;background:#c3c3c3;"></div>
<div style="left:564px;top:0px;width:1px;height:620px;background:#c3c3c3;"></div>
<div style="left:606px;top:0px;width:1px;height:620px;background:#c3c3c3;"></div>
<div style="left:663px;top:0px;width:1px;height:620px;background:#c3c3c3;"></div>
<div style="left:718px;top:0px;width:1px;height:620px;background:#c3c3c3;"></div>
<div style="left:766px;top:0px;width:1px;height:620px;background:#c3c3c3;"></div>
<div style="left:815px;top:0px;width:1px;height:620px;background:#c3c3c3;"></div>
<div style="left:857px;top:0px;width:1px;height:620px;background:#c3c3c3;"></div>
<div style="left:899px;top:0px;width:1px;height:620px;background:#c3c3c3;"></div>
<div style="left:943px;top:0px;width:1px;height:620px;background:#c3c3c3;"></div>
<div style="left:984px;top:0px;width:1px;height:620px;background:#c3c3c3;"></div>
<div style="left:1021px;top:0px;width:1px;height:620px;background:#c3c3c3;"></div>
<div style="left:1061px;top:0px;width:1px;height:620px;background:#c3c3c3;"></div>
<div style="left:1105px;top:0px;width:1px;height:620px;background:#c3c3c3;"></div>
<div style="left:1150px;top:0px;width:1px;height:620px;background:#c3c3c3;"></div>
<div style="left:1190px;top:0px;width:1px;height:620px;background:#c3c3c3;"></div>
<div style="left:1230px;top:0px;width:1px;height:620px;background:#c3c3c3;"></div>
<div style="left:1271px;top:0px;width:1px;height:620px;background:#c3c3c3;"></div>
<div style="left:1318px;top:0px;width:1px;height:620px;background:#c3c3c3;"></div>
<div style="left:0px;top:42px;width:1319px;height:1px;background:#c3c3c3;"></div>
<div style="left:0px;top:62px;width:1319px;height:1px;background:#c3c3c3;"></div>
<div style="left:0px;top:82px;width:1319px;height:1px;background:#c3c3c3;"></div>
<div style="left:0px;top:102px;width:1319px;height:1px;background:#c3c3c3;"></div>
<div style="left:0px;top:122px;width:1319px;height:1px;background:#c3c3c3;"></div>
<div style="left:0px;top:142px;width:1319px;height:1px;background:#c3c3c3;"></div>
<div style="left:0px;top:162px;width:1319px;height:1px;background:#c3c3c3;"></div>
<div style="left:0px;top:182px;width:1319px;height:1px;background:#c3c3c3;"></div>
<div style="left:0px;top:202px;width:1319px;height:1px;background:#c3c3c3;"></div>
<div style="left:0px;top:222px;width:1319px;height:1px;background:#c3c3c3;"></div>
<div style="left:0px;top:242px;width:1319px;height:1px;background:#c3c3c3;"></div>
<div style="left:0px;top:262px;width:1319px;height:1px;background:#c3c3c3;"></div>
<div style="left:0px;top:282px;width:1319px;height:1px;background:#c3c3c3;"></div>
<div style="left:0px;top:302px;width:1319px;height:1px;background:#c3c3c3;"></div>
<div style="left:0px;top:322px;width:1319px;height:1px;background:#c3c3c3;"></div>
<div style="left:0px;top:342px;width:1319px;height:1px;background:#c3c3c3;"></div>
<div style="left:0px;top:362px;width:1319px;height:1px;background:#c3c3c3;"></div>
<div style="left:0px;top:382px;width:1319px;height:1px;background:#c3c3c3;"></div>
<div style="left:0px;top:402px;width:1319px;height:1px;background:#c3c3c3;"></div>
<div style="left:0px;top:422px;width:1319px;height:1px;background:#c3c3c3;"></div>
<div style="left:0px;top:442px;width:1319px;height:1px;background:#c3c3c3;"></div>
<div style="left:0px;top:462px;width:1319px;height:1px;background:#c3c3c3;"></div>
<div style="left:0px;top:482px;width:1319px;height:1px;background:#c3c3c3;"></div>
<div style="left:0px;top:502px;width:1319px;height:1px;background:#c3c3c3;"></div>
<div style="left:0px;top:522px;width:1319px;height:1px;background:#c3c3c3;"></div>
<div style="left:0px;top:542px;width:1319px;height:1px;background:#c3c3c3;"></div>
<div style="left:0px;top:562px;width:1319px;height:1px;background:#c3c3c3;"></div>
<div style="left:0px;top:582px;width:1319px;height:1px;background:#c3c3c3;"></div>
<div style="left:0px;top:602px;width:1319px;height:1px;background:#c3c3c3;"></div>
<div style="left:0px;top:622px;width:1319px;height:1px;background:#c3c3c3;"></div>
<div style="left:1319px;top:0px;width:540px;height:43px;background:#f7f7f6;"></div>
<div style="left:1848px;top:-1px;width:3px;height:31px;background:#f07746;"></div>
</div>
<div style="left:117px;top:556px;width:164px;height:40px;overflow:hidden;"><div class="t" style="left:3px;top:3px;font-size:14.3px;line-height:17px;font-weight:bold;color:#000;letter-spacing:0.42px">TimeAnalog<br>timestamp without time zone</div></div>
<div style="left:282px;top:556px;width:58px;height:40px;overflow:hidden;"><div class="t" style="left:3px;top:3px;font-size:14.3px;line-height:17px;font-weight:bold;color:#000;letter-spacing:0.42px">U_V1fA<br>real</div></div>
<div style="left:341px;top:556px;width:58px;height:40px;overflow:hidden;"><div class="t" style="left:3px;top:3px;font-size:14.3px;line-height:17px;font-weight:bold;color:#000;letter-spacing:0.42px">U_V1fB<br>real</div></div>
<div style="left:400px;top:556px;width:57px;height:40px;overflow:hidden;"><div class="t" style="left:3px;top:3px;font-size:14.3px;line-height:17px;font-weight:bold;color:#000;letter-spacing:0.42px">U_V1fC<br>real</div></div>
<div style="left:458px;top:556px;width:57px;height:40px;overflow:hidden;"><div class="t" style="left:3px;top:3px;font-size:14.3px;line-height:17px;font-weight:bold;color:#000;letter-spacing:0.42px">U_V2fA<br>real</div></div>
<div style="left:516px;top:556px;width:57px;height:40px;overflow:hidden;"><div class="t" style="left:3px;top:3px;font-size:14.3px;line-height:17px;font-weight:bold;color:#000;letter-spacing:0.42px">U_V2fB<br>real</div></div>
<div style="left:574px;top:556px;width:57px;height:40px;overflow:hidden;"><div class="t" style="left:3px;top:3px;font-size:14.3px;line-height:17px;font-weight:bold;color:#000;letter-spacing:0.42px">U_V2fC<br>real</div></div>
<div style="left:632px;top:556px;width:41px;height:40px;overflow:hidden;"><div class="t" style="left:3px;top:3px;font-size:14.3px;line-height:17px;font-weight:bold;color:#000;letter-spacing:0.42px">T_EA<br>real</div></div>
<div style="left:674px;top:556px;width:56px;height:40px;overflow:hidden;"><div class="t" style="left:3px;top:3px;font-size:14.3px;line-height:17px;font-weight:bold;color:#000;letter-spacing:0.42px">T_prKK<br>real</div></div>
<div style="left:731px;top:556px;width:54px;height:40px;overflow:hidden;"><div class="t" style="left:3px;top:3px;font-size:14.3px;line-height:17px;font-weight:bold;color:#000;letter-spacing:0.42px">T_obrKK<br>real</div></div>
<div style="left:786px;top:556px;width:47px;height:40px;overflow:hidden;"><div class="t" style="left:3px;top:3px;font-size:14.3px;line-height:17px;font-weight:bold;color:#000;letter-spacing:0.42px">T_prKO<br>real</div></div>
<div style="left:834px;top:556px;width:48px;height:40px;overflow:hidden;"><div class="t" style="left:3px;top:3px;font-size:14.3px;line-height:17px;font-weight:bold;color:#000;letter-spacing:0.42px">T_obrKOv1<br>real</div></div>
<div style="left:883px;top:556px;width:41px;height:40px;overflow:hidden;"><div class="t" style="left:3px;top:3px;font-size:14.3px;line-height:17px;font-weight:bold;color:#000;letter-spacing:0.42px">T_obrKOv2<br>real</div></div>
<div style="left:925px;top:556px;width:41px;height:40px;overflow:hidden;"><div class="t" style="left:3px;top:3px;font-size:14.3px;line-height:17px;font-weight:bold;color:#000;letter-spacing:0.42px">T_obrKOv3<br>real</div></div>
<div style="left:967px;top:556px;width:43px;height:40px;overflow:hidden;"><div class="t" style="left:3px;top:3px;font-size:14.3px;line-height:17px;font-weight:bold;color:#000;letter-spacing:0.42px">T_obrKOv4<br>real</div></div>
<div style="left:1011px;top:556px;width:40px;height:40px;overflow:hidden;"><div class="t" style="left:3px;top:3px;font-size:14.3px;line-height:17px;font-weight:bold;color:#000;letter-spacing:0.42px">T_obrKTPv1<br>real</div></div>
<div style="left:1052px;top:556px;width:36px;height:40px;overflow:hidden;"><div class="t" style="left:3px;top:3px;font-size:14.3px;line-height:17px;font-weight:bold;color:#000;letter-spacing:0.42px">P_prKK<br>real</div></div>
<div style="left:1089px;top:556px;width:39px;height:40px;overflow:hidden;"><div class="t" style="left:3px;top:3px;font-size:14.3px;line-height:17px;font-weight:bold;color:#000;letter-spacing:0.42px">P_obrKK<br>real</div></div>
<div style="left:1129px;top:556px;width:43px;height:40px;overflow:hidden;"><div class="t" style="left:3px;top:3px;font-size:14.3px;line-height:17px;font-weight:bold;color:#000;letter-spacing:0.42px">P_prKO<br>real</div></div>
<div style="left:1173px;top:556px;width:44px;height:40px;overflow:hidden;"><div class="t" style="left:3px;top:3px;font-size:14.3px;line-height:17px;font-weight:bold;color:#000;letter-spacing:0.42px">P_obrKOv1<br>real</div></div>
<div style="left:1218px;top:556px;width:39px;height:40px;overflow:hidden;"><div class="t" style="left:3px;top:3px;font-size:14.3px;line-height:17px;font-weight:bold;color:#000;letter-spacing:0.42px">P_obrKOv2<br>real</div></div>
<div style="left:1258px;top:556px;width:39px;height:40px;overflow:hidden;"><div class="t" style="left:3px;top:3px;font-size:14.3px;line-height:17px;font-weight:bold;color:#000;letter-spacing:0.42px">P_obrKOv3<br>real</div></div>
<div style="left:1298px;top:556px;width:40px;height:40px;overflow:hidden;"><div class="t" style="left:3px;top:3px;font-size:14.3px;line-height:17px;font-weight:bold;color:#000;letter-spacing:0.42px">P_obrKOv4<br>real</div></div>
<div style="left:1339px;top:556px;width:46px;height:40px;overflow:hidden;"><div class="t" style="left:3px;top:3px;font-size:14.3px;line-height:17px;font-weight:bold;color:#000;letter-spacing:0.42px">P_obrKTPv1<br>real</div></div>
<div class="t" style="top:598.0px;line-height:20px;font-size:14.3px;color:#000;font-weight:bold;left:88.5px;">1</div>
<div class="t" style="top:598.0px;line-height:19px;font-size:13.3px;color:#505050;font-family:'Liberation Mono',monospace;left:119.5px;">2015-06-11 21:01:41</div>
<div class="t" style="top:598.0px;line-height:19px;font-size:13.3px;color:#505050;font-family:'Liberation Mono',monospace;left:-262px;width:600px;text-align:right;">225.5</div>
<div class="t" style="top:598.0px;line-height:19px;font-size:13.3px;color:#505050;font-family:'Liberation Mono',monospace;left:-203px;width:600px;text-align:right;">224</div>
<div class="t" style="top:598.0px;line-height:19px;font-size:13.3px;color:#505050;font-family:'Liberation Mono',monospace;left:-145px;width:600px;text-align:right;">225.3</div>
<div class="t" style="top:598.0px;line-height:19px;font-size:13.3px;color:#505050;font-family:'Liberation Mono',monospace;left:-87px;width:600px;text-align:right;">225.8</div>
<div class="t" style="top:598.0px;line-height:19px;font-size:13.3px;color:#505050;font-family:'Liberation Mono',monospace;left:-29px;width:600px;text-align:right;">225.8</div>
<div class="t" style="top:598.0px;line-height:19px;font-size:13.3px;color:#505050;font-family:'Liberation Mono',monospace;left:29px;width:600px;text-align:right;">224.6</div>
<div class="t" style="top:598.0px;line-height:19px;font-size:13.3px;color:#505050;font-family:'Liberation Mono',monospace;left:71px;width:600px;text-align:right;">14</div>
<div class="t" style="top:598.0px;line-height:19px;font-size:13.3px;color:#505050;font-family:'Liberation Mono',monospace;left:128px;width:600px;text-align:right;">83.1</div>
<div class="t" style="top:598.0px;line-height:19px;font-size:13.3px;color:#505050;font-family:'Liberation Mono',monospace;left:183px;width:600px;text-align:right;">52.1</div>
<div class="t" style="top:598.0px;line-height:19px;font-size:13.3px;color:#505050;font-family:'Liberation Mono',monospace;left:231px;width:600px;text-align:right;">27.1</div>
<div class="t" style="top:598.0px;line-height:19px;font-size:13.3px;color:#505050;font-family:'Liberation Mono',monospace;left:280px;width:600px;text-align:right;">24.3</div>
<div class="t" style="top:598.0px;line-height:19px;font-size:13.3px;color:#505050;font-family:'Liberation Mono',monospace;left:322px;width:600px;text-align:right;">24.5</div>
<div class="t" style="top:598.0px;line-height:19px;font-size:13.3px;color:#505050;font-family:'Liberation Mono',monospace;left:364px;width:600px;text-align:right;">24.3</div>
<div class="t" style="top:598.0px;line-height:19px;font-size:13.3px;color:#505050;font-family:'Liberation Mono',monospace;left:408px;width:600px;text-align:right;">25.4</div>
<div class="t" style="top:598.0px;line-height:19px;font-size:13.3px;color:#505050;font-family:'Liberation Mono',monospace;left:449px;width:600px;text-align:right;">49.6</div>
<div class="t" style="top:598.0px;line-height:19px;font-size:13.3px;color:#505050;font-family:'Liberation Mono',monospace;left:486px;width:600px;text-align:right;">2.73</div>
<div class="t" style="top:598.0px;line-height:19px;font-size:13.3px;color:#505050;font-family:'Liberation Mono',monospace;left:526px;width:600px;text-align:right;">2.9</div>
<div class="t" style="top:598.0px;line-height:19px;font-size:13.3px;color:#505050;font-family:'Liberation Mono',monospace;left:570px;width:600px;text-align:right;">4.36</div>
<div class="t" style="top:598.0px;line-height:19px;font-size:13.3px;color:#505050;font-family:'Liberation Mono',monospace;left:615px;width:600px;text-align:right;">4.72</div>
<div class="t" style="top:598.0px;line-height:19px;font-size:13.3px;color:#505050;font-family:'Liberation Mono',monospace;left:655px;width:600px;text-align:right;">4.74</div>
<div class="t" style="top:598.0px;line-height:19px;font-size:13.3px;color:#505050;font-family:'Liberation Mono',monospace;left:695px;width:600px;text-align:right;">4.74</div>
<div class="t" style="top:598.0px;line-height:19px;font-size:13.3px;color:#505050;font-family:'Liberation Mono',monospace;left:736px;width:600px;text-align:right;">4.63</div>
<div class="t" style="top:598.0px;line-height:19px;font-size:13.3px;color:#505050;font-family:'Liberation Mono',monospace;left:783px;width:600px;text-align:right;">1.37</div>
<div class="t" style="top:618.0px;line-height:20px;font-size:14.3px;color:#000;font-weight:bold;left:88.5px;">2</div>
<div class="t" style="top:618.0px;line-height:19px;font-size:13.3px;color:#505050;font-family:'Liberation Mono',monospace;left:119.5px;">2015-06-11 21:02:42</div>
<div class="t" style="top:618.0px;line-height:19px;font-size:13.3px;color:#505050;font-family:'Liberation Mono',monospace;left:-262px;width:600px;text-align:right;">225.4</div>
<div class="t" style="top:618.0px;line-height:19px;font-size:13.3px;color:#505050;font-family:'Liberation Mono',monospace;left:-203px;width:600px;text-align:right;">223.8</div>
<div class="t" style="top:618.0px;line-height:19px;font-size:13.3px;color:#505050;font-family:'Liberation Mono',monospace;left:-145px;width:600px;text-align:right;">225.3</div>
<div class="t" style="top:618.0px;line-height:19px;font-size:13.3px;color:#505050;font-family:'Liberation Mono',monospace;left:-87px;width:600px;text-align:right;">225.7</div>
<div class="t" style="top:618.0px;line-height:19px;font-size:13.3px;color:#505050;font-family:'Liberation Mono',monospace;left:-29px;width:600px;text-align:right;">225.5</div>
<div class="t" style="top:618.0px;line-height:19px;font-size:13.3px;color:#505050;font-family:'Liberation Mono',monospace;left:29px;width:600px;text-align:right;">224.4</div>
<div class="t" style="top:618.0px;line-height:19px;font-size:13.3px;color:#505050;font-family:'Liberation Mono',monospace;left:71px;width:600px;text-align:right;">14</div>
<div class="t" style="top:618.0px;line-height:19px;font-size:13.3px;color:#505050;font-family:'Liberation Mono',monospace;left:128px;width:600px;text-align:right;">83</div>
<div class="t" style="top:618.0px;line-height:19px;font-size:13.3px;color:#505050;font-family:'Liberation Mono',monospace;left:183px;width:600px;text-align:right;">52</div>
<div class="t" style="top:618.0px;line-height:19px;font-size:13.3px;color:#505050;font-family:'Liberation Mono',monospace;left:231px;width:600px;text-align:right;">27.1</div>
<div class="t" style="top:618.0px;line-height:19px;font-size:13.3px;color:#505050;font-family:'Liberation Mono',monospace;left:280px;width:600px;text-align:right;">24.3</div>
<div class="t" style="top:618.0px;line-height:19px;font-size:13.3px;color:#505050;font-family:'Liberation Mono',monospace;left:322px;width:600px;text-align:right;">24.5</div>
<div class="t" style="top:618.0px;line-height:19px;font-size:13.3px;color:#505050;font-family:'Liberation Mono',monospace;left:364px;width:600px;text-align:right;">24.3</div>
<div class="t" style="top:618.0px;line-height:19px;font-size:13.3px;color:#505050;font-family:'Liberation Mono',monospace;left:408px;width:600px;text-align:right;">25.4</div>
<div class="t" style="top:618.0px;line-height:19px;font-size:13.3px;color:#505050;font-family:'Liberation Mono',monospace;left:449px;width:600px;text-align:right;">49.6</div>
<div class="t" style="top:618.0px;line-height:19px;font-size:13.3px;color:#505050;font-family:'Liberation Mono',monospace;left:486px;width:600px;text-align:right;">2.72</div>
<div class="t" style="top:618.0px;line-height:19px;font-size:13.3px;color:#505050;font-family:'Liberation Mono',monospace;left:526px;width:600px;text-align:right;">2.91</div>
<div class="t" style="top:618.0px;line-height:19px;font-size:13.3px;color:#505050;font-family:'Liberation Mono',monospace;left:570px;width:600px;text-align:right;">4.64</div>
<div class="t" style="top:618.0px;line-height:19px;font-size:13.3px;color:#505050;font-family:'Liberation Mono',monospace;left:615px;width:600px;text-align:right;">4.72</div>
<div class="t" style="top:618.0px;line-height:19px;font-size:13.3px;color:#505050;font-family:'Liberation Mono',monospace;left:655px;width:600px;text-align:right;">4.74</div>
<div class="t" style="top:618.0px;line-height:19px;font-size:13.3px;color:#505050;font-family:'Liberation Mono',monospace;left:695px;width:600px;text-align:right;">4.74</div>
<div class="t" style="top:618.0px;line-height:19px;font-size:13.3px;color:#505050;font-family:'Liberation Mono',monospace;left:736px;width:600px;text-align:right;">4.63</div>
<div class="t" style="top:618.0px;line-height:19px;font-size:13.3px;color:#505050;font-family:'Liberation Mono',monospace;left:783px;width:600px;text-align:right;">1.38</div>
<div class="t" style="top:638.0px;line-height:20px;font-size:14.3px;color:#000;font-weight:bold;left:88.5px;">3</div>
<div class="t" style="top:638.0px;line-height:19px;font-size:13.3px;color:#505050;font-family:'Liberation Mono',monospace;left:119.5px;">2015-06-11 21:03:42</div>
<div class="t" style="top:638.0px;line-height:19px;font-size:13.3px;color:#505050;font-family:'Liberation Mono',monospace;left:-262px;width:600px;text-align:right;">225.7</div>
<div class="t" style="top:638.0px;line-height:19px;font-size:13.3px;color:#505050;font-family:'Liberation Mono',monospace;left:-203px;width:600px;text-align:right;">224.1</div>
<div class="t" style="top:638.0px;line-height:19px;font-size:13.3px;color:#505050;font-family:'Liberation Mono',monospace;left:-145px;width:600px;text-align:right;">225.6</div>
<div class="t" style="top:638.0px;line-height:19px;font-size:13.3px;color:#f4f4f4;font-family:'Liberation Mono',monospace;left:-87px;width:600px;text-align:right;">225.9</div>
<div class="t" style="top:638.0px;line-height:19px;font-size:13.3px;color:#f4f4f4;font-family:'Liberation Mono',monospace;left:-29px;width:600px;text-align:right;">225.8</div>
<div class="t" style="top:638.0px;line-height:19px;font-size:13.3px;color:#f4f4f4;font-family:'Liberation Mono',monospace;left:29px;width:600px;text-align:right;">224.7</div>
<div class="t" style="top:638.0px;line-height:19px;font-size:13.3px;color:#f4f4f4;font-family:'Liberation Mono',monospace;left:71px;width:600px;text-align:right;">14</div>
<div class="t" style="top:638.0px;line-height:19px;font-size:13.3px;color:#f4f4f4;font-family:'Liberation Mono',monospace;left:128px;width:600px;text-align:right;">83</div>
<div class="t" style="top:638.0px;line-height:19px;font-size:13.3px;color:#f4f4f4;font-family:'Liberation Mono',monospace;left:183px;width:600px;text-align:right;">52</div>
<div class="t" style="top:638.0px;line-height:19px;font-size:13.3px;color:#f4f4f4;font-family:'Liberation Mono',monospace;left:231px;width:600px;text-align:right;">27.1</div>
<div class="t" style="top:638.0px;line-height:19px;font-size:13.3px;color:#f4f4f4;font-family:'Liberation Mono',monospace;left:280px;width:600px;text-align:right;">24.3</div>
<div class="t" style="top:638.0px;line-height:19px;font-size:13.3px;color:#f4f4f4;font-family:'Liberation Mono',monospace;left:322px;width:600px;text-align:right;">24.5</div>
<div class="t" style="top:638.0px;line-height:19px;font-size:13.3px;color:#f4f4f4;font-family:'Liberation Mono',monospace;left:364px;width:600px;text-align:right;">24.3</div>
<div class="t" style="top:638.0px;line-height:19px;font-size:13.3px;color:#f4f4f4;font-family:'Liberation Mono',monospace;left:408px;width:600px;text-align:right;">25.4</div>
<div class="t" style="top:638.0px;line-height:19px;font-size:13.3px;color:#f4f4f4;font-family:'Liberation Mono',monospace;left:449px;width:600px;text-align:right;">49.7</div>
<div class="t" style="top:638.0px;line-height:19px;font-size:13.3px;color:#f4f4f4;font-family:'Liberation Mono',monospace;left:486px;width:600px;text-align:right;">2.74</div>
<div class="t" style="top:638.0px;line-height:19px;font-size:13.3px;color:#f4f4f4;font-family:'Liberation Mono',monospace;left:526px;width:600px;text-align:right;">2.91</div>
<div class="t" style="top:638.0px;line-height:19px;font-size:13.3px;color:#f4f4f4;font-family:'Liberation Mono',monospace;left:570px;width:600px;text-align:right;">4.56</div>
<div class="t" style="top:638.0px;line-height:19px;font-size:13.3px;color:#f4f4f4;font-family:'Liberation Mono',monospace;left:615px;width:600px;text-align:right;">4.72</div>
<div class="t" style="top:638.0px;line-height:19px;font-size:13.3px;color:#f4f4f4;font-family:'Liberation Mono',monospace;left:655px;width:600px;text-align:right;">4.74</div>
<div class="t" style="top:638.0px;line-height:19px;font-size:13.3px;color:#f4f4f4;font-family:'Liberation Mono',monospace;left:695px;width:600px;text-align:right;">4.74</div>
<div class="t" style="top:638.0px;line-height:19px;font-size:13.3px;color:#f4f4f4;font-family:'Liberation Mono',monospace;left:736px;width:600px;text-align:right;">4.63</div>
<div class="t" style="top:638.0px;line-height:19px;font-size:13.3px;color:#f4f4f4;font-family:'Liberation Mono',monospace;left:783px;width:600px;text-align:right;">1.38</div>
<div class="t" style="top:658.0px;line-height:20px;font-size:14.3px;color:#000;font-weight:bold;left:88.5px;">4</div>
<div class="t" style="top:658.0px;line-height:19px;font-size:13.3px;color:#505050;font-family:'Liberation Mono',monospace;left:119.5px;">2015-06-11 21:04:42</div>
<div class="t" style="top:658.0px;line-height:19px;font-size:13.3px;color:#505050;font-family:'Liberation Mono',monospace;left:-262px;width:600px;text-align:right;">225.9</div>
<div class="t" style="top:658.0px;line-height:19px;font-size:13.3px;color:#505050;font-family:'Liberation Mono',monospace;left:-203px;width:600px;text-align:right;">224.1</div>
<div class="t" style="top:658.0px;line-height:19px;font-size:13.3px;color:#505050;font-family:'Liberation Mono',monospace;left:-145px;width:600px;text-align:right;">225.6</div>
<div class="t" style="top:658.0px;line-height:19px;font-size:13.3px;color:#f4f4f4;font-family:'Liberation Mono',monospace;left:-87px;width:600px;text-align:right;">-207</div>
<div class="t" style="top:658.0px;line-height:19px;font-size:13.3px;color:#f4f4f4;font-family:'Liberation Mono',monospace;left:-29px;width:600px;text-align:right;">2188.1</div>
<div class="t" style="top:658.0px;line-height:19px;font-size:13.3px;color:#f4f4f4;font-family:'Liberation Mono',monospace;left:29px;width:600px;text-align:right;">231</div>
<div class="t" style="top:658.0px;line-height:19px;font-size:13.3px;color:#f4f4f4;font-family:'Liberation Mono',monospace;left:71px;width:600px;text-align:right;">232.5</div>
<div class="t" style="top:658.0px;line-height:19px;font-size:13.3px;color:#f4f4f4;font-family:'Liberation Mono',monospace;left:128px;width:600px;text-align:right;">232.9</div>
<div class="t" style="top:658.0px;line-height:19px;font-size:13.3px;color:#f4f4f4;font-family:'Liberation Mono',monospace;left:183px;width:600px;text-align:right;">223.3</div>
<div class="t" style="top:658.0px;line-height:19px;font-size:13.3px;color:#f4f4f4;font-family:'Liberation Mono',monospace;left:231px;width:600px;text-align:right;">224.2</div>
<div class="t" style="top:658.0px;line-height:19px;font-size:13.3px;color:#f4f4f4;font-family:'Liberation Mono',monospace;left:280px;width:600px;text-align:right;">223.6</div>
<div class="t" style="top:658.0px;line-height:19px;font-size:13.3px;color:#f4f4f4;font-family:'Liberation Mono',monospace;left:322px;width:600px;text-align:right;">16.9</div>
<div class="t" style="top:658.0px;line-height:19px;font-size:13.3px;color:#f4f4f4;font-family:'Liberation Mono',monospace;left:364px;width:600px;text-align:right;">79.6</div>
<div class="t" style="top:658.0px;line-height:19px;font-size:13.3px;color:#f4f4f4;font-family:'Liberation Mono',monospace;left:408px;width:600px;text-align:right;">83.4</div>
<div class="t" style="top:658.0px;line-height:19px;font-size:13.3px;color:#f4f4f4;font-family:'Liberation Mono',monospace;left:449px;width:600px;text-align:right;">35.6</div>
<div class="t" style="top:658.0px;line-height:19px;font-size:13.3px;color:#f4f4f4;font-family:'Liberation Mono',monospace;left:486px;width:600px;text-align:right;">2.94</div>
<div class="t" style="top:658.0px;line-height:19px;font-size:13.3px;color:#f4f4f4;font-family:'Liberation Mono',monospace;left:526px;width:600px;text-align:right;">3.5</div>
<div class="t" style="top:658.0px;line-height:19px;font-size:13.3px;color:#f4f4f4;font-family:'Liberation Mono',monospace;left:570px;width:600px;text-align:right;">3.15</div>
<div class="t" style="top:658.0px;line-height:19px;font-size:13.3px;color:#f4f4f4;font-family:'Liberation Mono',monospace;left:615px;width:600px;text-align:right;">3.1</div>
<div class="t" style="top:658.0px;line-height:19px;font-size:13.3px;color:#f4f4f4;font-family:'Liberation Mono',monospace;left:655px;width:600px;text-align:right;">2.85</div>
<div class="t" style="top:658.0px;line-height:19px;font-size:13.3px;color:#f4f4f4;font-family:'Liberation Mono',monospace;left:695px;width:600px;text-align:right;">3.12</div>
<div class="t" style="top:658.0px;line-height:19px;font-size:13.3px;color:#f4f4f4;font-family:'Liberation Mono',monospace;left:736px;width:600px;text-align:right;">7.23</div>
<div class="t" style="top:658.0px;line-height:19px;font-size:13.3px;color:#f4f4f4;font-family:'Liberation Mono',monospace;left:783px;width:600px;text-align:right;">6.91</div>
<div class="t" style="top:678.0px;line-height:20px;font-size:14.3px;color:#000;font-weight:bold;left:88.5px;">5</div>
<div class="t" style="top:678.0px;line-height:19px;font-size:13.3px;color:#505050;font-family:'Liberation Mono',monospace;left:119.5px;">2015-06-11 21:05:43</div>
<div class="t" style="top:678.0px;line-height:19px;font-size:13.3px;color:#505050;font-family:'Liberation Mono',monospace;left:-262px;width:600px;text-align:right;">225.9</div>
<div class="t" style="top:678.0px;line-height:19px;font-size:13.3px;color:#505050;font-family:'Liberation Mono',monospace;left:-203px;width:600px;text-align:right;">224.2</div>
<div class="t" style="top:678.0px;line-height:19px;font-size:13.3px;color:#505050;font-family:'Liberation Mono',monospace;left:-145px;width:600px;text-align:right;">225.7</div>
<div class="t" style="top:678.0px;line-height:19px;font-size:13.3px;color:#f4f4f4;font-family:'Liberation Mono',monospace;left:-87px;width:600px;text-align:right;">225.6</div>
<div class="t" style="top:678.0px;line-height:19px;font-size:13.3px;color:#f4f4f4;font-family:'Liberation Mono',monospace;left:-29px;width:600px;text-align:right;">225.8</div>
<div class="t" style="top:678.0px;line-height:19px;font-size:13.3px;color:#f4f4f4;font-family:'Liberation Mono',monospace;left:29px;width:600px;text-align:right;">224.5</div>
<div class="t" style="top:678.0px;line-height:19px;font-size:13.3px;color:#f4f4f4;font-family:'Liberation Mono',monospace;left:71px;width:600px;text-align:right;">14</div>
<div class="t" style="top:678.0px;line-height:19px;font-size:13.3px;color:#f4f4f4;font-family:'Liberation Mono',monospace;left:128px;width:600px;text-align:right;">82.8</div>
<div class="t" style="top:678.0px;line-height:19px;font-size:13.3px;color:#f4f4f4;font-family:'Liberation Mono',monospace;left:183px;width:600px;text-align:right;">51.9</div>
<div class="t" style="top:678.0px;line-height:19px;font-size:13.3px;color:#f4f4f4;font-family:'Liberation Mono',monospace;left:231px;width:600px;text-align:right;">27.1</div>
<div class="t" style="top:678.0px;line-height:19px;font-size:13.3px;color:#f4f4f4;font-family:'Liberation Mono',monospace;left:280px;width:600px;text-align:right;">24.3</div>
<div class="t" style="top:678.0px;line-height:19px;font-size:13.3px;color:#f4f4f4;font-family:'Liberation Mono',monospace;left:322px;width:600px;text-align:right;">24.5</div>
<div class="t" style="top:678.0px;line-height:19px;font-size:13.3px;color:#f4f4f4;font-family:'Liberation Mono',monospace;left:364px;width:600px;text-align:right;">24.3</div>
<div class="t" style="top:678.0px;line-height:19px;font-size:13.3px;color:#f4f4f4;font-family:'Liberation Mono',monospace;left:408px;width:600px;text-align:right;">25.4</div>
<div class="t" style="top:678.0px;line-height:19px;font-size:13.3px;color:#f4f4f4;font-family:'Liberation Mono',monospace;left:449px;width:600px;text-align:right;">49.7</div>
<div class="t" style="top:678.0px;line-height:19px;font-size:13.3px;color:#f4f4f4;font-family:'Liberation Mono',monospace;left:486px;width:600px;text-align:right;">2.71</div>
<div class="t" style="top:678.0px;line-height:19px;font-size:13.3px;color:#f4f4f4;font-family:'Liberation Mono',monospace;left:526px;width:600px;text-align:right;">2.89</div>
<div class="t" style="top:678.0px;line-height:19px;font-size:13.3px;color:#f4f4f4;font-family:'Liberation Mono',monospace;left:570px;width:600px;text-align:right;">4.56</div>
<div class="t" style="top:678.0px;line-height:19px;font-size:13.3px;color:#f4f4f4;font-family:'Liberation Mono',monospace;left:615px;width:600px;text-align:right;">4.72</div>
<div class="t" style="top:678.0px;line-height:19px;font-size:13.3px;color:#f4f4f4;font-family:'Liberation Mono',monospace;left:655px;width:600px;text-align:right;">4.73</div>
<div class="t" style="top:678.0px;line-height:19px;font-size:13.3px;color:#f4f4f4;font-family:'Liberation Mono',monospace;left:695px;width:600px;text-align:right;">4.74</div>
<div class="t" style="top:678.0px;line-height:19px;font-size:13.3px;color:#f4f4f4;font-family:'Liberation Mono',monospace;left:736px;width:600px;text-align:right;">4.61</div>
<div class="t" style="top:678.0px;line-height:19px;font-size:13.3px;color:#f4f4f4;font-family:'Liberation Mono',monospace;left:783px;width:600px;text-align:right;">1.37</div>
<div class="t" style="top:698.0px;line-height:20px;font-size:14.3px;color:#000;font-weight:bold;left:88.5px;">6</div>
<div class="t" style="top:698.0px;line-height:19px;font-size:13.3px;color:#505050;font-family:'Liberation Mono',monospace;left:119.5px;">2015-06-11 21:06:43</div>
<div class="t" style="top:698.0px;line-height:19px;font-size:13.3px;color:#505050;font-family:'Liberation Mono',monospace;left:-262px;width:600px;text-align:right;">225.8</div>
<div class="t" style="top:698.0px;line-height:19px;font-size:13.3px;color:#505050;font-family:'Liberation Mono',monospace;left:-203px;width:600px;text-align:right;">224.2</div>
<div class="t" style="top:698.0px;line-height:19px;font-size:13.3px;color:#505050;font-family:'Liberation Mono',monospace;left:-145px;width:600px;text-align:right;">225.5</div>
<div class="t" style="top:698.0px;line-height:19px;font-size:13.3px;color:#505050;font-family:'Liberation Mono',monospace;left:-87px;width:600px;text-align:right;">225.9</div>
<div class="t" style="top:698.0px;line-height:19px;font-size:13.3px;color:#505050;font-family:'Liberation Mono',monospace;left:-29px;width:600px;text-align:right;">226</div>
<div class="t" style="top:698.0px;line-height:19px;font-size:13.3px;color:#505050;font-family:'Liberation Mono',monospace;left:29px;width:600px;text-align:right;">224.8</div>
<div class="t" style="top:698.0px;line-height:19px;font-size:13.3px;color:#505050;font-family:'Liberation Mono',monospace;left:71px;width:600px;text-align:right;">14</div>
<div class="t" style="top:698.0px;line-height:19px;font-size:13.3px;color:#505050;font-family:'Liberation Mono',monospace;left:128px;width:600px;text-align:right;">82.7</div>
<div class="t" style="top:698.0px;line-height:19px;font-size:13.3px;color:#505050;font-family:'Liberation Mono',monospace;left:183px;width:600px;text-align:right;">51.8</div>
<div class="t" style="top:698.0px;line-height:19px;font-size:13.3px;color:#505050;font-family:'Liberation Mono',monospace;left:231px;width:600px;text-align:right;">27.1</div>
<div class="t" style="top:698.0px;line-height:19px;font-size:13.3px;color:#505050;font-family:'Liberation Mono',monospace;left:280px;width:600px;text-align:right;">24.3</div>
<div class="t" style="top:698.0px;line-height:19px;font-size:13.3px;color:#505050;font-family:'Liberation Mono',monospace;left:322px;width:600px;text-align:right;">24.5</div>
<div class="t" style="top:698.0px;line-height:19px;font-size:13.3px;color:#505050;font-family:'Liberation Mono',monospace;left:364px;width:600px;text-align:right;">24.3</div>
<div class="t" style="top:698.0px;line-height:19px;font-size:13.3px;color:#505050;font-family:'Liberation Mono',monospace;left:408px;width:600px;text-align:right;">25.4</div>
<div class="t" style="top:698.0px;line-height:19px;font-size:13.3px;color:#505050;font-family:'Liberation Mono',monospace;left:449px;width:600px;text-align:right;">49.8</div>
<div class="t" style="top:698.0px;line-height:19px;font-size:13.3px;color:#505050;font-family:'Liberation Mono',monospace;left:486px;width:600px;text-align:right;">2.74</div>
<div class="t" style="top:698.0px;line-height:19px;font-size:13.3px;color:#505050;font-family:'Liberation Mono',monospace;left:526px;width:600px;text-align:right;">2.89</div>
<div class="t" style="top:698.0px;line-height:19px;font-size:13.3px;color:#505050;font-family:'Liberation Mono',monospace;left:570px;width:600px;text-align:right;">4.6</div>
<div class="t" style="top:698.0px;line-height:19px;font-size:13.3px;color:#505050;font-family:'Liberation Mono',monospace;left:615px;width:600px;text-align:right;">4.72</div>
<div class="t" style="top:698.0px;line-height:19px;font-size:13.3px;color:#505050;font-family:'Liberation Mono',monospace;left:655px;width:600px;text-align:right;">4.71</div>
<div class="t" style="top:698.0px;line-height:19px;font-size:13.3px;color:#505050;font-family:'Liberation Mono',monospace;left:695px;width:600px;text-align:right;">4.74</div>
<div class="t" style="top:698.0px;line-height:19px;font-size:13.3px;color:#505050;font-family:'Liberation Mono',monospace;left:736px;width:600px;text-align:right;">4.62</div>
<div class="t" style="top:698.0px;line-height:19px;font-size:13.3px;color:#505050;font-family:'Liberation Mono',monospace;left:783px;width:600px;text-align:right;">1.37</div>
<div class="t" style="top:718.0px;line-height:20px;font-size:14.3px;color:#000;font-weight:bold;left:88.5px;">7</div>
<div class="t" style="top:718.0px;line-height:19px;font-size:13.3px;color:#505050;font-family:'Liberation Mono',monospace;left:119.5px;">2015-06-11 21:07:44</div>
<div class="t" style="top:718.0px;line-height:19px;font-size:13.3px;color:#505050;font-family:'Liberation Mono',monospace;left:-262px;width:600px;text-align:right;">225.9</div>
<div class="t" style="top:718.0px;line-height:19px;font-size:13.3px;color:#505050;font-family:'Liberation Mono',monospace;left:-203px;width:600px;text-align:right;">224.2</div>
<div class="t" style="top:718.0px;line-height:19px;font-size:13.3px;color:#505050;font-family:'Liberation Mono',monospace;left:-145px;width:600px;text-align:right;">225.8</div>
<div class="t" style="top:718.0px;line-height:19px;font-size:13.3px;color:#505050;font-family:'Liberation Mono',monospace;left:-87px;width:600px;text-align:right;">226</div>
<div class="t" style="top:718.0px;line-height:19px;font-size:13.3px;color:#505050;font-family:'Liberation Mono',monospace;left:-29px;width:600px;text-align:right;">226.1</div>
<div class="t" style="top:718.0px;line-height:19px;font-size:13.3px;color:#505050;font-family:'Liberation Mono',monospace;left:29px;width:600px;text-align:right;">224.8</div>
<div class="t" style="top:718.0px;line-height:19px;font-size:13.3px;color:#505050;font-family:'Liberation Mono',monospace;left:71px;width:600px;text-align:right;">14</div>
<div class="t" style="top:718.0px;line-height:19px;font-size:13.3px;color:#505050;font-family:'Liberation Mono',monospace;left:128px;width:600px;text-align:right;">82.6</div>
<div class="t" style="top:718.0px;line-height:19px;font-size:13.3px;color:#505050;font-family:'Liberation Mono',monospace;left:183px;width:600px;text-align:right;">51.8</div>
<div class="t" style="top:718.0px;line-height:19px;font-size:13.3px;color:#505050;font-family:'Liberation Mono',monospace;left:231px;width:600px;text-align:right;">27.1</div>
<div class="t" style="top:718.0px;line-height:19px;font-size:13.3px;color:#505050;font-family:'Liberation Mono',monospace;left:280px;width:600px;text-align:right;">24.3</div>
<div class="t" style="top:718.0px;line-height:19px;font-size:13.3px;color:#505050;font-family:'Liberation Mono',monospace;left:322px;width:600px;text-align:right;">24.5</div>
<div class="t" style="top:718.0px;line-height:19px;font-size:13.3px;color:#505050;font-family:'Liberation Mono',monospace;left:364px;width:600px;text-align:right;">24.3</div>
<div class="t" style="top:718.0px;line-height:19px;font-size:13.3px;color:#505050;font-family:'Liberation Mono',monospace;left:408px;width:600px;text-align:right;">25.4</div>
<div class="t" style="top:718.0px;line-height:19px;font-size:13.3px;color:#505050;font-family:'Liberation Mono',monospace;left:449px;width:600px;text-align:right;">49.8</div>
<div class="t" style="top:718.0px;line-height:19px;font-size:13.3px;color:#505050;font-family:'Liberation Mono',monospace;left:486px;width:600px;text-align:right;">2.71</div>
<div class="t" style="top:718.0px;line-height:19px;font-size:13.3px;color:#505050;font-family:'Liberation Mono',monospace;left:526px;width:600px;text-align:right;">2.88</div>
<div class="t" style="top:718.0px;line-height:19px;font-size:13.3px;color:#505050;font-family:'Liberation Mono',monospace;left:570px;width:600px;text-align:right;">4.58</div>
<div class="t" style="top:718.0px;line-height:19px;font-size:13.3px;color:#505050;font-family:'Liberation Mono',monospace;left:615px;width:600px;text-align:right;">4.72</div>
<div class="t" style="top:718.0px;line-height:19px;font-size:13.3px;color:#505050;font-family:'Liberation Mono',monospace;left:655px;width:600px;text-align:right;">4.71</div>
<div class="t" style="top:718.0px;line-height:19px;font-size:13.3px;color:#505050;font-family:'Liberation Mono',monospace;left:695px;width:600px;text-align:right;">4.74</div>
<div class="t" style="top:718.0px;line-height:19px;font-size:13.3px;color:#505050;font-family:'Liberation Mono',monospace;left:736px;width:600px;text-align:right;">4.62</div>
<div class="t" style="top:718.0px;line-height:19px;font-size:13.3px;color:#505050;font-family:'Liberation Mono',monospace;left:783px;width:600px;text-align:right;">1.37</div>
<div class="t" style="top:738.0px;line-height:20px;font-size:14.3px;color:#000;font-weight:bold;left:88.5px;">8</div>
<div class="t" style="top:738.0px;line-height:19px;font-size:13.3px;color:#505050;font-family:'Liberation Mono',monospace;left:119.5px;">2015-06-11 21:08:44</div>
<div class="t" style="top:738.0px;line-height:19px;font-size:13.3px;color:#505050;font-family:'Liberation Mono',monospace;left:-262px;width:600px;text-align:right;">225.7</div>
<div class="t" style="top:738.0px;line-height:19px;font-size:13.3px;color:#505050;font-family:'Liberation Mono',monospace;left:-203px;width:600px;text-align:right;">224</div>
<div class="t" style="top:738.0px;line-height:19px;font-size:13.3px;color:#505050;font-family:'Liberation Mono',monospace;left:-145px;width:600px;text-align:right;">225.4</div>
<div class="t" style="top:738.0px;line-height:19px;font-size:13.3px;color:#505050;font-family:'Liberation Mono',monospace;left:-87px;width:600px;text-align:right;">225.8</div>
<div class="t" style="top:738.0px;line-height:19px;font-size:13.3px;color:#505050;font-family:'Liberation Mono',monospace;left:-29px;width:600px;text-align:right;">226</div>
<div class="t" style="top:738.0px;line-height:19px;font-size:13.3px;color:#505050;font-family:'Liberation Mono',monospace;left:29px;width:600px;text-align:right;">224.7</div>
<div class="t" style="top:738.0px;line-height:19px;font-size:13.3px;color:#505050;font-family:'Liberation Mono',monospace;left:71px;width:600px;text-align:right;">14</div>
<div class="t" style="top:738.0px;line-height:19px;font-size:13.3px;color:#505050;font-family:'Liberation Mono',monospace;left:128px;width:600px;text-align:right;">82.5</div>
<div class="t" style="top:738.0px;line-height:19px;font-size:13.3px;color:#505050;font-family:'Liberation Mono',monospace;left:183px;width:600px;text-align:right;">51.8</div>
<div class="t" style="top:738.0px;line-height:19px;font-size:13.3px;color:#505050;font-family:'Liberation Mono',monospace;left:231px;width:600px;text-align:right;">27.1</div>
<div class="t" style="top:738.0px;line-height:19px;font-size:13.3px;color:#505050;font-family:'Liberation Mono',monospace;left:280px;width:600px;text-align:right;">24.3</div>
<div class="t" style="top:738.0px;line-height:19px;font-size:13.3px;color:#505050;font-family:'Liberation Mono',monospace;left:322px;width:600px;text-align:right;">24.5</div>
<div class="t" style="top:738.0px;line-height:19px;font-size:13.3px;color:#505050;font-family:'Liberation Mono',monospace;left:364px;width:600px;text-align:right;">24.3</div>
<div class="t" style="top:738.0px;line-height:19px;font-size:13.3px;color:#505050;font-family:'Liberation Mono',monospace;left:408px;width:600px;text-align:right;">25.4</div>
<div class="t" style="top:738.0px;line-height:19px;font-size:13.3px;color:#505050;font-family:'Liberation Mono',monospace;left:449px;width:600px;text-align:right;">49.8</div>
<div class="t" style="top:738.0px;line-height:19px;font-size:13.3px;color:#505050;font-family:'Liberation Mono',monospace;left:486px;width:600px;text-align:right;">2.72</div>
<div class="t" style="top:738.0px;line-height:19px;font-size:13.3px;color:#505050;font-family:'Liberation Mono',monospace;left:526px;width:600px;text-align:right;">2.89</div>
<div class="t" style="top:738.0px;line-height:19px;font-size:13.3px;color:#505050;font-family:'Liberation Mono',monospace;left:570px;width:600px;text-align:right;">4.55</div>
<div class="t" style="top:738.0px;line-height:19px;font-size:13.3px;color:#505050;font-family:'Liberation Mono',monospace;left:615px;width:600px;text-align:right;">4.72</div>
<div class="t" style="top:738.0px;line-height:19px;font-size:13.3px;color:#505050;font-family:'Liberation Mono',monospace;left:655px;width:600px;text-align:right;">4.75</div>
<div class="t" style="top:738.0px;line-height:19px;font-size:13.3px;color:#505050;font-family:'Liberation Mono',monospace;left:695px;width:600px;text-align:right;">4.72</div>
<div class="t" style="top:738.0px;line-height:19px;font-size:13.3px;color:#505050;font-family:'Liberation Mono',monospace;left:736px;width:600px;text-align:right;">4.63</div>
<div class="t" style="top:738.0px;line-height:19px;font-size:13.3px;color:#505050;font-family:'Liberation Mono',monospace;left:783px;width:600px;text-align:right;">1.37</div>
<div class="t" style="top:758.0px;line-height:20px;font-size:14.3px;color:#000;font-weight:bold;left:88.5px;">9</div>
<div class="t" style="top:758.0px;line-height:19px;font-size:13.3px;color:#505050;font-family:'Liberation Mono',monospace;left:119.5px;">2015-06-11 21:09:44</div>
<div class="t" style="top:758.0px;line-height:19px;font-size:13.3px;color:#505050;font-family:'Liberation Mono',monospace;left:-262px;width:600px;text-align:right;">225.6</div>
<div class="t" style="top:758.0px;line-height:19px;font-size:13.3px;color:#505050;font-family:'Liberation Mono',monospace;left:-203px;width:600px;text-align:right;">224</div>
<div class="t" style="top:758.0px;line-height:19px;font-size:13.3px;color:#505050;font-family:'Liberation Mono',monospace;left:-145px;width:600px;text-align:right;">225.5</div>
<div class="t" style="top:758.0px;line-height:19px;font-size:13.3px;color:#505050;font-family:'Liberation Mono',monospace;left:-87px;width:600px;text-align:right;">226</div>
<div class="t" style="top:758.0px;line-height:19px;font-size:13.3px;color:#505050;font-family:'Liberation Mono',monospace;left:-29px;width:600px;text-align:right;">226.1</div>
<div class="t" style="top:758.0px;line-height:19px;font-size:13.3px;color:#505050;font-family:'Liberation Mono',monospace;left:29px;width:600px;text-align:right;">224.9</div>
<div class="t" style="top:758.0px;line-height:19px;font-size:13.3px;color:#505050;font-family:'Liberation Mono',monospace;left:71px;width:600px;text-align:right;">14</div>
<div class="t" style="top:758.0px;line-height:19px;font-size:13.3px;color:#505050;font-family:'Liberation Mono',monospace;left:128px;width:600px;text-align:right;">82.5</div>
<div class="t" style="top:758.0px;line-height:19px;font-size:13.3px;color:#505050;font-family:'Liberation Mono',monospace;left:183px;width:600px;text-align:right;">51.8</div>
<div class="t" style="top:758.0px;line-height:19px;font-size:13.3px;color:#505050;font-family:'Liberation Mono',monospace;left:231px;width:600px;text-align:right;">27.1</div>
<div class="t" style="top:758.0px;line-height:19px;font-size:13.3px;color:#505050;font-family:'Liberation Mono',monospace;left:280px;width:600px;text-align:right;">24.4</div>
<div class="t" style="top:758.0px;line-height:19px;font-size:13.3px;color:#505050;font-family:'Liberation Mono',monospace;left:322px;width:600px;text-align:right;">24.5</div>
<div class="t" style="top:758.0px;line-height:19px;font-size:13.3px;color:#505050;font-family:'Liberation Mono',monospace;left:364px;width:600px;text-align:right;">24.3</div>
<div class="t" style="top:758.0px;line-height:19px;font-size:13.3px;color:#505050;font-family:'Liberation Mono',monospace;left:408px;width:600px;text-align:right;">25.4</div>
<div class="t" style="top:758.0px;line-height:19px;font-size:13.3px;color:#505050;font-family:'Liberation Mono',monospace;left:449px;width:600px;text-align:right;">49.8</div>
<div class="t" style="top:758.0px;line-height:19px;font-size:13.3px;color:#505050;font-family:'Liberation Mono',monospace;left:486px;width:600px;text-align:right;">2.73</div>
<div class="t" style="top:758.0px;line-height:19px;font-size:13.3px;color:#505050;font-family:'Liberation Mono',monospace;left:526px;width:600px;text-align:right;">2.87</div>
<div class="t" style="top:758.0px;line-height:19px;font-size:13.3px;color:#505050;font-family:'Liberation Mono',monospace;left:570px;width:600px;text-align:right;">4.58</div>
<div class="t" style="top:758.0px;line-height:19px;font-size:13.3px;color:#505050;font-family:'Liberation Mono',monospace;left:615px;width:600px;text-align:right;">4.71</div>
<div class="t" style="top:758.0px;line-height:19px;font-size:13.3px;color:#505050;font-family:'Liberation Mono',monospace;left:655px;width:600px;text-align:right;">4.72</div>
<div class="t" style="top:758.0px;line-height:19px;font-size:13.3px;color:#505050;font-family:'Liberation Mono',monospace;left:695px;width:600px;text-align:right;">4.74</div>
<div class="t" style="top:758.0px;line-height:19px;font-size:13.3px;color:#505050;font-family:'Liberation Mono',monospace;left:736px;width:600px;text-align:right;">4.6</div>
<div class="t" style="top:758.0px;line-height:19px;font-size:13.3px;color:#505050;font-family:'Liberation Mono',monospace;left:783px;width:600px;text-align:right;">1.36</div>
<div class="t" style="top:778.0px;line-height:20px;font-size:14.3px;color:#000;font-weight:bold;left:83.5px;">10</div>
<div class="t" style="top:778.0px;line-height:19px;font-size:13.3px;color:#505050;font-family:'Liberation Mono',monospace;left:119.5px;">2015-06-11 21:10:44</div>
<div class="t" style="top:778.0px;line-height:19px;font-size:13.3px;color:#505050;font-family:'Liberation Mono',monospace;left:-262px;width:600px;text-align:right;">225.8</div>
<div class="t" style="top:778.0px;line-height:19px;font-size:13.3px;color:#505050;font-family:'Liberation Mono',monospace;left:-203px;width:600px;text-align:right;">224.2</div>
<div class="t" style="top:778.0px;line-height:19px;font-size:13.3px;color:#505050;font-family:'Liberation Mono',monospace;left:-145px;width:600px;text-align:right;">225.7</div>
<div class="t" style="top:778.0px;line-height:19px;font-size:13.3px;color:#505050;font-family:'Liberation Mono',monospace;left:-87px;width:600px;text-align:right;">226</div>
<div class="t" style="top:778.0px;line-height:19px;font-size:13.3px;color:#505050;font-family:'Liberation Mono',monospace;left:-29px;width:600px;text-align:right;">226</div>
<div class="t" style="top:778.0px;line-height:19px;font-size:13.3px;color:#505050;font-family:'Liberation Mono',monospace;left:29px;width:600px;text-align:right;">224.6</div>
<div class="t" style="top:778.0px;line-height:19px;font-size:13.3px;color:#505050;font-family:'Liberation Mono',monospace;left:71px;width:600px;text-align:right;">14</div>
<div class="t" style="top:778.0px;line-height:19px;font-size:13.3px;color:#505050;font-family:'Liberation Mono',monospace;left:128px;width:600px;text-align:right;">82.3</div>
<div class="t" style="top:778.0px;line-height:19px;font-size:13.3px;color:#505050;font-family:'Liberation Mono',monospace;left:183px;width:600px;text-align:right;">51.6</div>
<div class="t" style="top:778.0px;line-height:19px;font-size:13.3px;color:#505050;font-family:'Liberation Mono',monospace;left:231px;width:600px;text-align:right;">27.1</div>
<div class="t" style="top:778.0px;line-height:19px;font-size:13.3px;color:#505050;font-family:'Liberation Mono',monospace;left:280px;width:600px;text-align:right;">24.4</div>
<div class="t" style="top:778.0px;line-height:19px;font-size:13.3px;color:#505050;font-family:'Liberation Mono',monospace;left:322px;width:600px;text-align:right;">24.5</div>
<div class="t" style="top:778.0px;line-height:19px;font-size:13.3px;color:#505050;font-family:'Liberation Mono',monospace;left:364px;width:600px;text-align:right;">24.3</div>
<div class="t" style="top:778.0px;line-height:19px;font-size:13.3px;color:#505050;font-family:'Liberation Mono',monospace;left:408px;width:600px;text-align:right;">25.4</div>
<div class="t" style="top:778.0px;line-height:19px;font-size:13.3px;color:#505050;font-family:'Liberation Mono',monospace;left:449px;width:600px;text-align:right;">49.8</div>
<div class="t" style="top:778.0px;line-height:19px;font-size:13.3px;color:#505050;font-family:'Liberation Mono',monospace;left:486px;width:600px;text-align:right;">2.73</div>
<div class="t" style="top:778.0px;line-height:19px;font-size:13.3px;color:#505050;font-family:'Liberation Mono',monospace;left:526px;width:600px;text-align:right;">2.89</div>
<div class="t" style="top:778.0px;line-height:19px;font-size:13.3px;color:#505050;font-family:'Liberation Mono',monospace;left:570px;width:600px;text-align:right;">4.53</div>
<div class="t" style="top:778.0px;line-height:19px;font-size:13.3px;color:#505050;font-family:'Liberation Mono',monospace;left:615px;width:600px;text-align:right;">4.72</div>
<div class="t" style="top:778.0px;line-height:19px;font-size:13.3px;color:#505050;font-family:'Liberation Mono',monospace;left:655px;width:600px;text-align:right;">4.74</div>
<div class="t" style="top:778.0px;line-height:19px;font-size:13.3px;color:#505050;font-family:'Liberation Mono',monospace;left:695px;width:600px;text-align:right;">4.72</div>
<div class="t" style="top:778.0px;line-height:19px;font-size:13.3px;color:#505050;font-family:'Liberation Mono',monospace;left:736px;width:600px;text-align:right;">4.61</div>
<div class="t" style="top:778.0px;line-height:19px;font-size:13.3px;color:#505050;font-family:'Liberation Mono',monospace;left:783px;width:600px;text-align:right;">1.36</div>
<div class="t" style="top:798.0px;line-height:20px;font-size:14.3px;color:#000;font-weight:bold;left:83.5px;">11</div>
<div class="t" style="top:798.0px;line-height:19px;font-size:13.3px;color:#505050;font-family:'Liberation Mono',monospace;left:119.5px;">2015-06-11 21:11:44</div>
<div class="t" style="top:798.0px;line-height:19px;font-size:13.3px;color:#505050;font-family:'Liberation Mono',monospace;left:-262px;width:600px;text-align:right;">225.6</div>
<div class="t" style="top:798.0px;line-height:19px;font-size:13.3px;color:#505050;font-family:'Liberation Mono',monospace;left:-203px;width:600px;text-align:right;">224.2</div>
<div class="t" style="top:798.0px;line-height:19px;font-size:13.3px;color:#505050;font-family:'Liberation Mono',monospace;left:-145px;width:600px;text-align:right;">225.6</div>
<div class="t" style="top:798.0px;line-height:19px;font-size:13.3px;color:#505050;font-family:'Liberation Mono',monospace;left:-87px;width:600px;text-align:right;">226.1</div>
<div class="t" style="top:798.0px;line-height:19px;font-size:13.3px;color:#505050;font-family:'Liberation Mono',monospace;left:-29px;width:600px;text-align:right;">226.1</div>
<div class="t" style="top:798.0px;line-height:19px;font-size:13.3px;color:#505050;font-family:'Liberation Mono',monospace;left:29px;width:600px;text-align:right;">224.8</div>
<div class="t" style="top:798.0px;line-height:19px;font-size:13.3px;color:#505050;font-family:'Liberation Mono',monospace;left:71px;width:600px;text-align:right;">14</div>
<div class="t" style="top:798.0px;line-height:19px;font-size:13.3px;color:#505050;font-family:'Liberation Mono',monospace;left:128px;width:600px;text-align:right;">82.3</div>
<div class="t" style="top:798.0px;line-height:19px;font-size:13.3px;color:#505050;font-family:'Liberation Mono',monospace;left:183px;width:600px;text-align:right;">51.5</div>
<div class="t" style="top:798.0px;line-height:19px;font-size:13.3px;color:#505050;font-family:'Liberation Mono',monospace;left:231px;width:600px;text-align:right;">27.1</div>
<div class="t" style="top:798.0px;line-height:19px;font-size:13.3px;color:#505050;font-family:'Liberation Mono',monospace;left:280px;width:600px;text-align:right;">24.4</div>
<div class="t" style="top:798.0px;line-height:19px;font-size:13.3px;color:#505050;font-family:'Liberation Mono',monospace;left:322px;width:600px;text-align:right;">24.5</div>
<div class="t" style="top:798.0px;line-height:19px;font-size:13.3px;color:#505050;font-family:'Liberation Mono',monospace;left:364px;width:600px;text-align:right;">24.3</div>
<div class="t" style="top:798.0px;line-height:19px;font-size:13.3px;color:#505050;font-family:'Liberation Mono',monospace;left:408px;width:600px;text-align:right;">25.4</div>
<div class="t" style="top:798.0px;line-height:19px;font-size:13.3px;color:#505050;font-family:'Liberation Mono',monospace;left:449px;width:600px;text-align:right;">49.8</div>
<div class="t" style="top:798.0px;line-height:19px;font-size:13.3px;color:#505050;font-family:'Liberation Mono',monospace;left:486px;width:600px;text-align:right;">2.7</div>
<div class="t" style="top:798.0px;line-height:19px;font-size:13.3px;color:#505050;font-family:'Liberation Mono',monospace;left:526px;width:600px;text-align:right;">2.89</div>
<div class="t" style="top:798.0px;line-height:19px;font-size:13.3px;color:#505050;font-family:'Liberation Mono',monospace;left:570px;width:600px;text-align:right;">4.53</div>
<div class="t" style="top:798.0px;line-height:19px;font-size:13.3px;color:#505050;font-family:'Liberation Mono',monospace;left:615px;width:600px;text-align:right;">4.72</div>
<div class="t" style="top:798.0px;line-height:19px;font-size:13.3px;color:#505050;font-family:'Liberation Mono',monospace;left:655px;width:600px;text-align:right;">4.74</div>
<div class="t" style="top:798.0px;line-height:19px;font-size:13.3px;color:#505050;font-family:'Liberation Mono',monospace;left:695px;width:600px;text-align:right;">4.74</div>
<div class="t" style="top:798.0px;line-height:19px;font-size:13.3px;color:#505050;font-family:'Liberation Mono',monospace;left:736px;width:600px;text-align:right;">4.6</div>
<div class="t" style="top:798.0px;line-height:19px;font-size:13.3px;color:#505050;font-family:'Liberation Mono',monospace;left:783px;width:600px;text-align:right;">1.36</div>
<div class="t" style="top:818.0px;line-height:20px;font-size:14.3px;color:#000;font-weight:bold;left:83.5px;">12</div>
<div class="t" style="top:818.0px;line-height:19px;font-size:13.3px;color:#505050;font-family:'Liberation Mono',monospace;left:119.5px;">2015-06-11 21:12:44</div>
<div class="t" style="top:818.0px;line-height:19px;font-size:13.3px;color:#505050;font-family:'Liberation Mono',monospace;left:-262px;width:600px;text-align:right;">225.8</div>
<div class="t" style="top:818.0px;line-height:19px;font-size:13.3px;color:#505050;font-family:'Liberation Mono',monospace;left:-203px;width:600px;text-align:right;">224.3</div>
<div class="t" style="top:818.0px;line-height:19px;font-size:13.3px;color:#505050;font-family:'Liberation Mono',monospace;left:-145px;width:600px;text-align:right;">225.8</div>
<div class="t" style="top:818.0px;line-height:19px;font-size:13.3px;color:#505050;font-family:'Liberation Mono',monospace;left:-87px;width:600px;text-align:right;">225.2</div>
<div class="t" style="top:818.0px;line-height:19px;font-size:13.3px;color:#505050;font-family:'Liberation Mono',monospace;left:-29px;width:600px;text-align:right;">225.2</div>
<div class="t" style="top:818.0px;line-height:19px;font-size:13.3px;color:#505050;font-family:'Liberation Mono',monospace;left:29px;width:600px;text-align:right;">224.2</div>
<div class="t" style="top:818.0px;line-height:19px;font-size:13.3px;color:#505050;font-family:'Liberation Mono',monospace;left:71px;width:600px;text-align:right;">14</div>
<div class="t" style="top:818.0px;line-height:19px;font-size:13.3px;color:#505050;font-family:'Liberation Mono',monospace;left:128px;width:600px;text-align:right;">82.2</div>
<div class="t" style="top:818.0px;line-height:19px;font-size:13.3px;color:#505050;font-family:'Liberation Mono',monospace;left:183px;width:600px;text-align:right;">51.5</div>
<div class="t" style="top:818.0px;line-height:19px;font-size:13.3px;color:#505050;font-family:'Liberation Mono',monospace;left:231px;width:600px;text-align:right;">27.1</div>
<div class="t" style="top:818.0px;line-height:19px;font-size:13.3px;color:#505050;font-family:'Liberation Mono',monospace;left:280px;width:600px;text-align:right;">24.4</div>
<div class="t" style="top:818.0px;line-height:19px;font-size:13.3px;color:#505050;font-family:'Liberation Mono',monospace;left:322px;width:600px;text-align:right;">24.5</div>
<div class="t" style="top:818.0px;line-height:19px;font-size:13.3px;color:#505050;font-family:'Liberation Mono',monospace;left:364px;width:600px;text-align:right;">24.4</div>
<div class="t" style="top:818.0px;line-height:19px;font-size:13.3px;color:#505050;font-family:'Liberation Mono',monospace;left:408px;width:600px;text-align:right;">25.4</div>
<div class="t" style="top:818.0px;line-height:19px;font-size:13.3px;color:#505050;font-family:'Liberation Mono',monospace;left:449px;width:600px;text-align:right;">49.8</div>
<div class="t" style="top:818.0px;line-height:19px;font-size:13.3px;color:#505050;font-family:'Liberation Mono',monospace;left:486px;width:600px;text-align:right;">2.71</div>
<div class="t" style="top:818.0px;line-height:19px;font-size:13.3px;color:#505050;font-family:'Liberation Mono',monospace;left:526px;width:600px;text-align:right;">2.88</div>
<div class="t" style="top:818.0px;line-height:19px;font-size:13.3px;color:#505050;font-family:'Liberation Mono',monospace;left:570px;width:600px;text-align:right;">4.62</div>
<div class="t" style="top:818.0px;line-height:19px;font-size:13.3px;color:#505050;font-family:'Liberation Mono',monospace;left:615px;width:600px;text-align:right;">4.72</div>
<div class="t" style="top:818.0px;line-height:19px;font-size:13.3px;color:#505050;font-family:'Liberation Mono',monospace;left:655px;width:600px;text-align:right;">4.74</div>
<div class="t" style="top:818.0px;line-height:19px;font-size:13.3px;color:#505050;font-family:'Liberation Mono',monospace;left:695px;width:600px;text-align:right;">4.74</div>
<div class="t" style="top:818.0px;line-height:19px;font-size:13.3px;color:#505050;font-family:'Liberation Mono',monospace;left:736px;width:600px;text-align:right;">4.62</div>
<div class="t" style="top:818.0px;line-height:19px;font-size:13.3px;color:#505050;font-family:'Liberation Mono',monospace;left:783px;width:600px;text-align:right;">1.36</div>
<div class="t" style="top:838.0px;line-height:20px;font-size:14.3px;color:#000;font-weight:bold;left:83.5px;">13</div>
<div class="t" style="top:838.0px;line-height:19px;font-size:13.3px;color:#505050;font-family:'Liberation Mono',monospace;left:119.5px;">2015-06-11 21:13:45</div>
<div class="t" style="top:838.0px;line-height:19px;font-size:13.3px;color:#505050;font-family:'Liberation Mono',monospace;left:-262px;width:600px;text-align:right;">225.7</div>
<div class="t" style="top:838.0px;line-height:19px;font-size:13.3px;color:#505050;font-family:'Liberation Mono',monospace;left:-203px;width:600px;text-align:right;">224.1</div>
<div class="t" style="top:838.0px;line-height:19px;font-size:13.3px;color:#505050;font-family:'Liberation Mono',monospace;left:-145px;width:600px;text-align:right;">225.7</div>
<div class="t" style="top:838.0px;line-height:19px;font-size:13.3px;color:#505050;font-family:'Liberation Mono',monospace;left:-87px;width:600px;text-align:right;">225.3</div>
<div class="t" style="top:838.0px;line-height:19px;font-size:13.3px;color:#505050;font-family:'Liberation Mono',monospace;left:-29px;width:600px;text-align:right;">225.3</div>
<div class="t" style="top:838.0px;line-height:19px;font-size:13.3px;color:#505050;font-family:'Liberation Mono',monospace;left:29px;width:600px;text-align:right;">224.3</div>
<div class="t" style="top:838.0px;line-height:19px;font-size:13.3px;color:#505050;font-family:'Liberation Mono',monospace;left:71px;width:600px;text-align:right;">14</div>
<div class="t" style="top:838.0px;line-height:19px;font-size:13.3px;color:#505050;font-family:'Liberation Mono',monospace;left:128px;width:600px;text-align:right;">82.1</div>
<div class="t" style="top:838.0px;line-height:19px;font-size:13.3px;color:#505050;font-family:'Liberation Mono',monospace;left:183px;width:600px;text-align:right;">52</div>
<div class="t" style="top:838.0px;line-height:19px;font-size:13.3px;color:#505050;font-family:'Liberation Mono',monospace;left:231px;width:600px;text-align:right;">27.1</div>
<div class="t" style="top:838.0px;line-height:19px;font-size:13.3px;color:#505050;font-family:'Liberation Mono',monospace;left:280px;width:600px;text-align:right;">24.4</div>
<div class="t" style="top:838.0px;line-height:19px;font-size:13.3px;color:#505050;font-family:'Liberation Mono',monospace;left:322px;width:600px;text-align:right;">24.5</div>
<div class="t" style="top:838.0px;line-height:19px;font-size:13.3px;color:#505050;font-family:'Liberation Mono',monospace;left:364px;width:600px;text-align:right;">24.4</div>
<div class="t" style="top:838.0px;line-height:19px;font-size:13.3px;color:#505050;font-family:'Liberation Mono',monospace;left:408px;width:600px;text-align:right;">25.4</div>
<div class="t" style="top:838.0px;line-height:19px;font-size:13.3px;color:#505050;font-family:'Liberation Mono',monospace;left:449px;width:600px;text-align:right;">49.8</div>
<div class="t" style="top:838.0px;line-height:19px;font-size:13.3px;color:#505050;font-family:'Liberation Mono',monospace;left:486px;width:600px;text-align:right;">2.73</div>
<div class="t" style="top:838.0px;line-height:19px;font-size:13.3px;color:#505050;font-family:'Liberation Mono',monospace;left:526px;width:600px;text-align:right;">2.89</div>
<div class="t" style="top:838.0px;line-height:19px;font-size:13.3px;color:#505050;font-family:'Liberation Mono',monospace;left:570px;width:600px;text-align:right;">4.55</div>
<div class="t" style="top:838.0px;line-height:19px;font-size:13.3px;color:#505050;font-family:'Liberation Mono',monospace;left:615px;width:600px;text-align:right;">4.72</div>
<div class="t" style="top:838.0px;line-height:19px;font-size:13.3px;color:#505050;font-family:'Liberation Mono',monospace;left:655px;width:600px;text-align:right;">4.73</div>
<div class="t" style="top:838.0px;line-height:19px;font-size:13.3px;color:#505050;font-family:'Liberation Mono',monospace;left:695px;width:600px;text-align:right;">4.74</div>
<div class="t" style="top:838.0px;line-height:19px;font-size:13.3px;color:#505050;font-family:'Liberation Mono',monospace;left:736px;width:600px;text-align:right;">4.61</div>
<div class="t" style="top:838.0px;line-height:19px;font-size:13.3px;color:#505050;font-family:'Liberation Mono',monospace;left:783px;width:600px;text-align:right;">1.38</div>
<div class="t" style="top:858.0px;line-height:20px;font-size:14.3px;color:#000;font-weight:bold;left:83.5px;">14</div>
<div class="t" style="top:858.0px;line-height:19px;font-size:13.3px;color:#505050;font-family:'Liberation Mono',monospace;left:119.5px;">2015-06-11 21:14:45</div>
<div class="t" style="top:858.0px;line-height:19px;font-size:13.3px;color:#505050;font-family:'Liberation Mono',monospace;left:-262px;width:600px;text-align:right;">225.8</div>
<div class="t" style="top:858.0px;line-height:19px;font-size:13.3px;color:#505050;font-family:'Liberation Mono',monospace;left:-203px;width:600px;text-align:right;">224.2</div>
<div class="t" style="top:858.0px;line-height:19px;font-size:13.3px;color:#505050;font-family:'Liberation Mono',monospace;left:-145px;width:600px;text-align:right;">225.6</div>
<div class="t" style="top:858.0px;line-height:19px;font-size:13.3px;color:#505050;font-family:'Liberation Mono',monospace;left:-87px;width:600px;text-align:right;">225.1</div>
<div class="t" style="top:858.0px;line-height:19px;font-size:13.3px;color:#505050;font-family:'Liberation Mono',monospace;left:-29px;width:600px;text-align:right;">225.2</div>
<div class="t" style="top:858.0px;line-height:19px;font-size:13.3px;color:#505050;font-family:'Liberation Mono',monospace;left:29px;width:600px;text-align:right;">224.1</div>
<div class="t" style="top:858.0px;line-height:19px;font-size:13.3px;color:#505050;font-family:'Liberation Mono',monospace;left:71px;width:600px;text-align:right;">14</div>
<div class="t" style="top:858.0px;line-height:19px;font-size:13.3px;color:#505050;font-family:'Liberation Mono',monospace;left:128px;width:600px;text-align:right;">82</div>
<div class="t" style="top:858.0px;line-height:19px;font-size:13.3px;color:#505050;font-family:'Liberation Mono',monospace;left:183px;width:600px;text-align:right;">64.4</div>
<div class="t" style="top:858.0px;line-height:19px;font-size:13.3px;color:#505050;font-family:'Liberation Mono',monospace;left:231px;width:600px;text-align:right;">27.1</div>
<div class="t" style="top:858.0px;line-height:19px;font-size:13.3px;color:#505050;font-family:'Liberation Mono',monospace;left:280px;width:600px;text-align:right;">24.4</div>
<div class="t" style="top:858.0px;line-height:19px;font-size:13.3px;color:#505050;font-family:'Liberation Mono',monospace;left:322px;width:600px;text-align:right;">24.5</div>
<div class="t" style="top:858.0px;line-height:19px;font-size:13.3px;color:#505050;font-family:'Liberation Mono',monospace;left:364px;width:600px;text-align:right;">24.4</div>
<div class="t" style="top:858.0px;line-height:19px;font-size:13.3px;color:#505050;font-family:'Liberation Mono',monospace;left:408px;width:600px;text-align:right;">25.4</div>
<div class="t" style="top:858.0px;line-height:19px;font-size:13.3px;color:#505050;font-family:'Liberation Mono',monospace;left:449px;width:600px;text-align:right;">49.8</div>
<div class="t" style="top:858.0px;line-height:19px;font-size:13.3px;color:#505050;font-family:'Liberation Mono',monospace;left:486px;width:600px;text-align:right;">2.75</div>
<div class="t" style="top:858.0px;line-height:19px;font-size:13.3px;color:#505050;font-family:'Liberation Mono',monospace;left:526px;width:600px;text-align:right;">2.94</div>
<div class="t" style="top:858.0px;line-height:19px;font-size:13.3px;color:#505050;font-family:'Liberation Mono',monospace;left:570px;width:600px;text-align:right;">4.82</div>
<div class="t" style="top:858.0px;line-height:19px;font-size:13.3px;color:#505050;font-family:'Liberation Mono',monospace;left:615px;width:600px;text-align:right;">4.72</div>
<div class="t" style="top:858.0px;line-height:19px;font-size:13.3px;color:#505050;font-family:'Liberation Mono',monospace;left:655px;width:600px;text-align:right;">4.72</div>
<div class="t" style="top:858.0px;line-height:19px;font-size:13.3px;color:#505050;font-family:'Liberation Mono',monospace;left:695px;width:600px;text-align:right;">4.71</div>
<div class="t" style="top:858.0px;line-height:19px;font-size:13.3px;color:#505050;font-family:'Liberation Mono',monospace;left:736px;width:600px;text-align:right;">4.62</div>
<div class="t" style="top:858.0px;line-height:19px;font-size:13.3px;color:#505050;font-family:'Liberation Mono',monospace;left:783px;width:600px;text-align:right;">1.4</div>
<div class="t" style="top:878.0px;line-height:20px;font-size:14.3px;color:#000;font-weight:bold;left:83.5px;">15</div>
<div class="t" style="top:878.0px;line-height:19px;font-size:13.3px;color:#505050;font-family:'Liberation Mono',monospace;left:119.5px;">2015-06-11 21:15:45</div>
<div class="t" style="top:878.0px;line-height:19px;font-size:13.3px;color:#505050;font-family:'Liberation Mono',monospace;left:-262px;width:600px;text-align:right;">225.2</div>
<div class="t" style="top:878.0px;line-height:19px;font-size:13.3px;color:#505050;font-family:'Liberation Mono',monospace;left:-203px;width:600px;text-align:right;">223.3</div>
<div class="t" style="top:878.0px;line-height:19px;font-size:13.3px;color:#505050;font-family:'Liberation Mono',monospace;left:-145px;width:600px;text-align:right;">225</div>
<div class="t" style="top:878.0px;line-height:19px;font-size:13.3px;color:#505050;font-family:'Liberation Mono',monospace;left:-87px;width:600px;text-align:right;">225</div>
<div class="t" style="top:878.0px;line-height:19px;font-size:13.3px;color:#505050;font-family:'Liberation Mono',monospace;left:-29px;width:600px;text-align:right;">225.2</div>
<div class="t" style="top:878.0px;line-height:19px;font-size:13.3px;color:#505050;font-family:'Liberation Mono',monospace;left:29px;width:600px;text-align:right;">224.1</div>
<div class="t" style="top:878.0px;line-height:19px;font-size:13.3px;color:#505050;font-family:'Liberation Mono',monospace;left:71px;width:600px;text-align:right;">14</div>
<div class="t" style="top:878.0px;line-height:19px;font-size:13.3px;color:#505050;font-family:'Liberation Mono',monospace;left:128px;width:600px;text-align:right;">81.9</div>
<div class="t" style="top:878.0px;line-height:19px;font-size:13.3px;color:#505050;font-family:'Liberation Mono',monospace;left:183px;width:600px;text-align:right;">66.1</div>
<div class="t" style="top:878.0px;line-height:19px;font-size:13.3px;color:#505050;font-family:'Liberation Mono',monospace;left:231px;width:600px;text-align:right;">27.1</div>
<div class="t" style="top:878.0px;line-height:19px;font-size:13.3px;color:#505050;font-family:'Liberation Mono',monospace;left:280px;width:600px;text-align:right;">24.4</div>
<div class="t" style="top:878.0px;line-height:19px;font-size:13.3px;color:#505050;font-family:'Liberation Mono',monospace;left:322px;width:600px;text-align:right;">24.5</div>
<div class="t" style="top:878.0px;line-height:19px;font-size:13.3px;color:#505050;font-family:'Liberation Mono',monospace;left:364px;width:600px;text-align:right;">24.4</div>
<div class="t" style="top:878.0px;line-height:19px;font-size:13.3px;color:#505050;font-family:'Liberation Mono',monospace;left:408px;width:600px;text-align:right;">25.4</div>
<div class="t" style="top:878.0px;line-height:19px;font-size:13.3px;color:#505050;font-family:'Liberation Mono',monospace;left:449px;width:600px;text-align:right;">49.8</div>
<div class="t" style="top:878.0px;line-height:19px;font-size:13.3px;color:#505050;font-family:'Liberation Mono',monospace;left:486px;width:600px;text-align:right;">2.8</div>
<div class="t" style="top:878.0px;line-height:19px;font-size:13.3px;color:#505050;font-family:'Liberation Mono',monospace;left:526px;width:600px;text-align:right;">2.96</div>
<div class="t" style="top:878.0px;line-height:19px;font-size:13.3px;color:#505050;font-family:'Liberation Mono',monospace;left:570px;width:600px;text-align:right;">4.52</div>
<div class="t" style="top:878.0px;line-height:19px;font-size:13.3px;color:#505050;font-family:'Liberation Mono',monospace;left:615px;width:600px;text-align:right;">4.72</div>
<div class="t" style="top:878.0px;line-height:19px;font-size:13.3px;color:#505050;font-family:'Liberation Mono',monospace;left:655px;width:600px;text-align:right;">4.74</div>
<div class="t" style="top:878.0px;line-height:19px;font-size:13.3px;color:#505050;font-family:'Liberation Mono',monospace;left:695px;width:600px;text-align:right;">4.71</div>
<div class="t" style="top:878.0px;line-height:19px;font-size:13.3px;color:#505050;font-family:'Liberation Mono',monospace;left:736px;width:600px;text-align:right;">4.62</div>
<div class="t" style="top:878.0px;line-height:19px;font-size:13.3px;color:#505050;font-family:'Liberation Mono',monospace;left:783px;width:600px;text-align:right;">1.44</div>
<div class="t" style="top:898.0px;line-height:20px;font-size:14.3px;color:#000;font-weight:bold;left:83.5px;">16</div>
<div class="t" style="top:898.0px;line-height:19px;font-size:13.3px;color:#505050;font-family:'Liberation Mono',monospace;left:119.5px;">2015-06-11 21:16:46</div>
<div class="t" style="top:898.0px;line-height:19px;font-size:13.3px;color:#505050;font-family:'Liberation Mono',monospace;left:-262px;width:600px;text-align:right;">225.5</div>
<div class="t" style="top:898.0px;line-height:19px;font-size:13.3px;color:#505050;font-family:'Liberation Mono',monospace;left:-203px;width:600px;text-align:right;">223.5</div>
<div class="t" style="top:898.0px;line-height:19px;font-size:13.3px;color:#505050;font-family:'Liberation Mono',monospace;left:-145px;width:600px;text-align:right;">225.1</div>
<div class="t" style="top:898.0px;line-height:19px;font-size:13.3px;color:#505050;font-family:'Liberation Mono',monospace;left:-87px;width:600px;text-align:right;">225.3</div>
<div class="t" style="top:898.0px;line-height:19px;font-size:13.3px;color:#505050;font-family:'Liberation Mono',monospace;left:-29px;width:600px;text-align:right;">225.4</div>
<div class="t" style="top:898.0px;line-height:19px;font-size:13.3px;color:#505050;font-family:'Liberation Mono',monospace;left:29px;width:600px;text-align:right;">224.2</div>
<div class="t" style="top:898.0px;line-height:19px;font-size:13.3px;color:#505050;font-family:'Liberation Mono',monospace;left:71px;width:600px;text-align:right;">14</div>
<div class="t" style="top:898.0px;line-height:19px;font-size:13.3px;color:#505050;font-family:'Liberation Mono',monospace;left:128px;width:600px;text-align:right;">81.8</div>
<div class="t" style="top:898.0px;line-height:19px;font-size:13.3px;color:#505050;font-family:'Liberation Mono',monospace;left:183px;width:600px;text-align:right;">66.6</div>
<div class="t" style="top:898.0px;line-height:19px;font-size:13.3px;color:#505050;font-family:'Liberation Mono',monospace;left:231px;width:600px;text-align:right;">27.1</div>
<div class="t" style="top:898.0px;line-height:19px;font-size:13.3px;color:#505050;font-family:'Liberation Mono',monospace;left:280px;width:600px;text-align:right;">24.5</div>
<div class="t" style="top:898.0px;line-height:19px;font-size:13.3px;color:#505050;font-family:'Liberation Mono',monospace;left:322px;width:600px;text-align:right;">24.5</div>
<div class="t" style="top:898.0px;line-height:19px;font-size:13.3px;color:#505050;font-family:'Liberation Mono',monospace;left:364px;width:600px;text-align:right;">24.4</div>
<div class="t" style="top:898.0px;line-height:19px;font-size:13.3px;color:#505050;font-family:'Liberation Mono',monospace;left:408px;width:600px;text-align:right;">25.4</div>
<div class="t" style="top:898.0px;line-height:19px;font-size:13.3px;color:#505050;font-family:'Liberation Mono',monospace;left:449px;width:600px;text-align:right;">49.8</div>
<div class="t" style="top:898.0px;line-height:19px;font-size:13.3px;color:#505050;font-family:'Liberation Mono',monospace;left:486px;width:600px;text-align:right;">2.81</div>
<div class="t" style="top:898.0px;line-height:19px;font-size:13.3px;color:#505050;font-family:'Liberation Mono',monospace;left:526px;width:600px;text-align:right;">2.98</div>
<div class="t" style="top:898.0px;line-height:19px;font-size:13.3px;color:#505050;font-family:'Liberation Mono',monospace;left:570px;width:600px;text-align:right;">4.68</div>
<div class="t" style="top:898.0px;line-height:19px;font-size:13.3px;color:#505050;font-family:'Liberation Mono',monospace;left:615px;width:600px;text-align:right;">4.7</div>
<div class="t" style="top:898.0px;line-height:19px;font-size:13.3px;color:#505050;font-family:'Liberation Mono',monospace;left:655px;width:600px;text-align:right;">4.73</div>
<div class="t" style="top:898.0px;line-height:19px;font-size:13.3px;color:#505050;font-family:'Liberation Mono',monospace;left:695px;width:600px;text-align:right;">4.74</div>
<div class="t" style="top:898.0px;line-height:19px;font-size:13.3px;color:#505050;font-family:'Liberation Mono',monospace;left:736px;width:600px;text-align:right;">4.61</div>
<div class="t" style="top:898.0px;line-height:19px;font-size:13.3px;color:#505050;font-family:'Liberation Mono',monospace;left:783px;width:600px;text-align:right;">1.46</div>
<div class="t" style="top:918.0px;line-height:20px;font-size:14.3px;color:#000;font-weight:bold;left:83.5px;">17</div>
<div class="t" style="top:918.0px;line-height:19px;font-size:13.3px;color:#505050;font-family:'Liberation Mono',monospace;left:119.5px;">2015-06-11 21:17:46</div>
<div class="t" style="top:918.0px;line-height:19px;font-size:13.3px;color:#505050;font-family:'Liberation Mono',monospace;left:-262px;width:600px;text-align:right;">225.4</div>
<div class="t" style="top:918.0px;line-height:19px;font-size:13.3px;color:#505050;font-family:'Liberation Mono',monospace;left:-203px;width:600px;text-align:right;">223.8</div>
<div class="t" style="top:918.0px;line-height:19px;font-size:13.3px;color:#505050;font-family:'Liberation Mono',monospace;left:-145px;width:600px;text-align:right;">225.3</div>
<div class="t" style="top:918.0px;line-height:19px;font-size:13.3px;color:#505050;font-family:'Liberation Mono',monospace;left:-87px;width:600px;text-align:right;">225.1</div>
<div class="t" style="top:918.0px;line-height:19px;font-size:13.3px;color:#505050;font-family:'Liberation Mono',monospace;left:-29px;width:600px;text-align:right;">225.1</div>
<div class="t" style="top:918.0px;line-height:19px;font-size:13.3px;color:#505050;font-family:'Liberation Mono',monospace;left:29px;width:600px;text-align:right;">224</div>
<div class="t" style="top:918.0px;line-height:19px;font-size:13.3px;color:#505050;font-family:'Liberation Mono',monospace;left:71px;width:600px;text-align:right;">14</div>
<div class="t" style="top:918.0px;line-height:19px;font-size:13.3px;color:#505050;font-family:'Liberation Mono',monospace;left:128px;width:600px;text-align:right;">81.7</div>
<div class="t" style="top:918.0px;line-height:19px;font-size:13.3px;color:#505050;font-family:'Liberation Mono',monospace;left:183px;width:600px;text-align:right;">66.9</div>
<div class="t" style="top:918.0px;line-height:19px;font-size:13.3px;color:#505050;font-family:'Liberation Mono',monospace;left:231px;width:600px;text-align:right;">27.1</div>
<div class="t" style="top:918.0px;line-height:19px;font-size:13.3px;color:#505050;font-family:'Liberation Mono',monospace;left:280px;width:600px;text-align:right;">24.5</div>
<div class="t" style="top:918.0px;line-height:19px;font-size:13.3px;color:#505050;font-family:'Liberation Mono',monospace;left:322px;width:600px;text-align:right;">24.5</div>
<div class="t" style="top:918.0px;line-height:19px;font-size:13.3px;color:#505050;font-family:'Liberation Mono',monospace;left:364px;width:600px;text-align:right;">24.4</div>
<div class="t" style="top:918.0px;line-height:19px;font-size:13.3px;color:#505050;font-family:'Liberation Mono',monospace;left:408px;width:600px;text-align:right;">25.4</div>
<div class="t" style="top:918.0px;line-height:19px;font-size:13.3px;color:#505050;font-family:'Liberation Mono',monospace;left:449px;width:600px;text-align:right;">49.8</div>
<div class="t" style="top:918.0px;line-height:19px;font-size:13.3px;color:#505050;font-family:'Liberation Mono',monospace;left:486px;width:600px;text-align:right;">2.85</div>
<div class="t" style="top:918.0px;line-height:19px;font-size:13.3px;color:#505050;font-family:'Liberation Mono',monospace;left:526px;width:600px;text-align:right;">3.02</div>
<div class="t" style="top:918.0px;line-height:19px;font-size:13.3px;color:#505050;font-family:'Liberation Mono',monospace;left:570px;width:600px;text-align:right;">4.84</div>
<div class="t" style="top:918.0px;line-height:19px;font-size:13.3px;color:#505050;font-family:'Liberation Mono',monospace;left:615px;width:600px;text-align:right;">4.71</div>
<div class="t" style="top:918.0px;line-height:19px;font-size:13.3px;color:#505050;font-family:'Liberation Mono',monospace;left:655px;width:600px;text-align:right;">4.72</div>
<div class="t" style="top:918.0px;line-height:19px;font-size:13.3px;color:#505050;font-family:'Liberation Mono',monospace;left:695px;width:600px;text-align:right;">4.71</div>
<div class="t" style="top:918.0px;line-height:19px;font-size:13.3px;color:#505050;font-family:'Liberation Mono',monospace;left:736px;width:600px;text-align:right;">4.62</div>
<div class="t" style="top:918.0px;line-height:19px;font-size:13.3px;color:#505050;font-family:'Liberation Mono',monospace;left:783px;width:600px;text-align:right;">1.49</div>
<div class="t" style="top:938.0px;line-height:20px;font-size:14.3px;color:#000;font-weight:bold;left:83.5px;">18</div>
<div class="t" style="top:938.0px;line-height:19px;font-size:13.3px;color:#505050;font-family:'Liberation Mono',monospace;left:119.5px;">2015-06-11 21:18:47</div>
<div class="t" style="top:938.0px;line-height:19px;font-size:13.3px;color:#505050;font-family:'Liberation Mono',monospace;left:-262px;width:600px;text-align:right;">225.3</div>
<div class="t" style="top:938.0px;line-height:19px;font-size:13.3px;color:#505050;font-family:'Liberation Mono',monospace;left:-203px;width:600px;text-align:right;">223.4</div>
<div class="t" style="top:938.0px;line-height:19px;font-size:13.3px;color:#505050;font-family:'Liberation Mono',monospace;left:-145px;width:600px;text-align:right;">225.2</div>
<div class="t" style="top:938.0px;line-height:19px;font-size:13.3px;color:#505050;font-family:'Liberation Mono',monospace;left:-87px;width:600px;text-align:right;">225.3</div>
<div class="t" style="top:938.0px;line-height:19px;font-size:13.3px;color:#505050;font-family:'Liberation Mono',monospace;left:-29px;width:600px;text-align:right;">225.4</div>
<div class="t" style="top:938.0px;line-height:19px;font-size:13.3px;color:#505050;font-family:'Liberation Mono',monospace;left:29px;width:600px;text-align:right;">224.3</div>
<div class="t" style="top:938.0px;line-height:19px;font-size:13.3px;color:#505050;font-family:'Liberation Mono',monospace;left:71px;width:600px;text-align:right;">14</div>
<div class="t" style="top:938.0px;line-height:19px;font-size:13.3px;color:#505050;font-family:'Liberation Mono',monospace;left:128px;width:600px;text-align:right;">81.6</div>
<div class="t" style="top:938.0px;line-height:19px;font-size:13.3px;color:#505050;font-family:'Liberation Mono',monospace;left:183px;width:600px;text-align:right;">67.8</div>
<div class="t" style="top:938.0px;line-height:19px;font-size:13.3px;color:#505050;font-family:'Liberation Mono',monospace;left:231px;width:600px;text-align:right;">27.1</div>
<div class="t" style="top:938.0px;line-height:19px;font-size:13.3px;color:#505050;font-family:'Liberation Mono',monospace;left:280px;width:600px;text-align:right;">24.5</div>
<div class="t" style="top:938.0px;line-height:19px;font-size:13.3px;color:#505050;font-family:'Liberation Mono',monospace;left:322px;width:600px;text-align:right;">24.5</div>
<div class="t" style="top:938.0px;line-height:19px;font-size:13.3px;color:#505050;font-family:'Liberation Mono',monospace;left:364px;width:600px;text-align:right;">24.4</div>
<div class="t" style="top:938.0px;line-height:19px;font-size:13.3px;color:#505050;font-family:'Liberation Mono',monospace;left:408px;width:600px;text-align:right;">25.4</div>
<div class="t" style="top:938.0px;line-height:19px;font-size:13.3px;color:#505050;font-family:'Liberation Mono',monospace;left:449px;width:600px;text-align:right;">49.8</div>
<div class="t" style="top:938.0px;line-height:19px;font-size:13.3px;color:#505050;font-family:'Liberation Mono',monospace;left:486px;width:600px;text-align:right;">2.87</div>
<div class="t" style="top:938.0px;line-height:19px;font-size:13.3px;color:#505050;font-family:'Liberation Mono',monospace;left:526px;width:600px;text-align:right;">3.04</div>
<div class="t" style="top:938.0px;line-height:19px;font-size:13.3px;color:#505050;font-family:'Liberation Mono',monospace;left:570px;width:600px;text-align:right;">4.84</div>
<div class="t" style="top:938.0px;line-height:19px;font-size:13.3px;color:#505050;font-family:'Liberation Mono',monospace;left:615px;width:600px;text-align:right;">4.7</div>
<div class="t" style="top:938.0px;line-height:19px;font-size:13.3px;color:#505050;font-family:'Liberation Mono',monospace;left:655px;width:600px;text-align:right;">4.72</div>
<div class="t" style="top:938.0px;line-height:19px;font-size:13.3px;color:#505050;font-family:'Liberation Mono',monospace;left:695px;width:600px;text-align:right;">4.71</div>
<div class="t" style="top:938.0px;line-height:19px;font-size:13.3px;color:#505050;font-family:'Liberation Mono',monospace;left:736px;width:600px;text-align:right;">4.61</div>
<div class="t" style="top:938.0px;line-height:19px;font-size:13.3px;color:#505050;font-family:'Liberation Mono',monospace;left:783px;width:600px;text-align:right;">1.52</div>
<div class="t" style="top:958.0px;line-height:20px;font-size:14.3px;color:#000;font-weight:bold;left:83.5px;">19</div>
<div class="t" style="top:958.0px;line-height:19px;font-size:13.3px;color:#505050;font-family:'Liberation Mono',monospace;left:119.5px;">2015-06-11 21:19:47</div>
<div class="t" style="top:958.0px;line-height:19px;font-size:13.3px;color:#505050;font-family:'Liberation Mono',monospace;left:-262px;width:600px;text-align:right;">225.4</div>
<div class="t" style="top:958.0px;line-height:19px;font-size:13.3px;color:#505050;font-family:'Liberation Mono',monospace;left:-203px;width:600px;text-align:right;">223.7</div>
<div class="t" style="top:958.0px;line-height:19px;font-size:13.3px;color:#505050;font-family:'Liberation Mono',monospace;left:-145px;width:600px;text-align:right;">225.2</div>
<div class="t" style="top:958.0px;line-height:19px;font-size:13.3px;color:#505050;font-family:'Liberation Mono',monospace;left:-87px;width:600px;text-align:right;">225.4</div>
<div class="t" style="top:958.0px;line-height:19px;font-size:13.3px;color:#505050;font-family:'Liberation Mono',monospace;left:-29px;width:600px;text-align:right;">225.5</div>
<div class="t" style="top:958.0px;line-height:19px;font-size:13.3px;color:#505050;font-family:'Liberation Mono',monospace;left:29px;width:600px;text-align:right;">224.3</div>
<div class="t" style="top:958.0px;line-height:19px;font-size:13.3px;color:#505050;font-family:'Liberation Mono',monospace;left:71px;width:600px;text-align:right;">14</div>
<div class="t" style="top:958.0px;line-height:19px;font-size:13.3px;color:#505050;font-family:'Liberation Mono',monospace;left:128px;width:600px;text-align:right;">81.5</div>
<div class="t" style="top:958.0px;line-height:19px;font-size:13.3px;color:#505050;font-family:'Liberation Mono',monospace;left:183px;width:600px;text-align:right;">68.5</div>
<div class="t" style="top:958.0px;line-height:19px;font-size:13.3px;color:#505050;font-family:'Liberation Mono',monospace;left:231px;width:600px;text-align:right;">27.1</div>
<div class="t" style="top:958.0px;line-height:19px;font-size:13.3px;color:#505050;font-family:'Liberation Mono',monospace;left:280px;width:600px;text-align:right;">24.5</div>
<div class="t" style="top:958.0px;line-height:19px;font-size:13.3px;color:#505050;font-family:'Liberation Mono',monospace;left:322px;width:600px;text-align:right;">24.5</div>
<div class="t" style="top:958.0px;line-height:19px;font-size:13.3px;color:#505050;font-family:'Liberation Mono',monospace;left:364px;width:600px;text-align:right;">24.4</div>
<div class="t" style="top:958.0px;line-height:19px;font-size:13.3px;color:#505050;font-family:'Liberation Mono',monospace;left:408px;width:600px;text-align:right;">25.4</div>
<div class="t" style="top:958.0px;line-height:19px;font-size:13.3px;color:#505050;font-family:'Liberation Mono',monospace;left:449px;width:600px;text-align:right;">49.8</div>
<div class="t" style="top:958.0px;line-height:19px;font-size:13.3px;color:#505050;font-family:'Liberation Mono',monospace;left:486px;width:600px;text-align:right;">2.9</div>
<div class="t" style="top:958.0px;line-height:19px;font-size:13.3px;color:#505050;font-family:'Liberation Mono',monospace;left:526px;width:600px;text-align:right;">3.07</div>
<div class="t" style="top:958.0px;line-height:19px;font-size:13.3px;color:#505050;font-family:'Liberation Mono',monospace;left:570px;width:600px;text-align:right;">4.26</div>
<div class="t" style="top:958.0px;line-height:19px;font-size:13.3px;color:#505050;font-family:'Liberation Mono',monospace;left:615px;width:600px;text-align:right;">4.71</div>
<div class="t" style="top:958.0px;line-height:19px;font-size:13.3px;color:#505050;font-family:'Liberation Mono',monospace;left:655px;width:600px;text-align:right;">4.73</div>
<div class="t" style="top:958.0px;line-height:19px;font-size:13.3px;color:#505050;font-family:'Liberation Mono',monospace;left:695px;width:600px;text-align:right;">4.7</div>
<div class="t" style="top:958.0px;line-height:19px;font-size:13.3px;color:#505050;font-family:'Liberation Mono',monospace;left:736px;width:600px;text-align:right;">4.61</div>
<div class="t" style="top:958.0px;line-height:19px;font-size:13.3px;color:#505050;font-family:'Liberation Mono',monospace;left:783px;width:600px;text-align:right;">1.53</div>
<div class="t" style="top:978.0px;line-height:20px;font-size:14.3px;color:#000;font-weight:bold;left:83.5px;">20</div>
<div class="t" style="top:978.0px;line-height:19px;font-size:13.3px;color:#505050;font-family:'Liberation Mono',monospace;left:119.5px;">2015-06-11 21:20:47</div>
<div class="t" style="top:978.0px;line-height:19px;font-size:13.3px;color:#505050;font-family:'Liberation Mono',monospace;left:-262px;width:600px;text-align:right;">225.1</div>
<div class="t" style="top:978.0px;line-height:19px;font-size:13.3px;color:#505050;font-family:'Liberation Mono',monospace;left:-203px;width:600px;text-align:right;">223.4</div>
<div class="t" style="top:978.0px;line-height:19px;font-size:13.3px;color:#505050;font-family:'Liberation Mono',monospace;left:-145px;width:600px;text-align:right;">225</div>
<div class="t" style="top:978.0px;line-height:19px;font-size:13.3px;color:#505050;font-family:'Liberation Mono',monospace;left:-87px;width:600px;text-align:right;">225.9</div>
<div class="t" style="top:978.0px;line-height:19px;font-size:13.3px;color:#505050;font-family:'Liberation Mono',monospace;left:-29px;width:600px;text-align:right;">226</div>
<div class="t" style="top:978.0px;line-height:19px;font-size:13.3px;color:#505050;font-family:'Liberation Mono',monospace;left:29px;width:600px;text-align:right;">224.7</div>
<div class="t" style="top:978.0px;line-height:19px;font-size:13.3px;color:#505050;font-family:'Liberation Mono',monospace;left:71px;width:600px;text-align:right;">14</div>
<div class="t" style="top:978.0px;line-height:19px;font-size:13.3px;color:#505050;font-family:'Liberation Mono',monospace;left:128px;width:600px;text-align:right;">81.3</div>
<div class="t" style="top:978.0px;line-height:19px;font-size:13.3px;color:#505050;font-family:'Liberation Mono',monospace;left:183px;width:600px;text-align:right;">68</div>
<div class="t" style="top:978.0px;line-height:19px;font-size:13.3px;color:#505050;font-family:'Liberation Mono',monospace;left:231px;width:600px;text-align:right;">27.1</div>
<div class="t" style="top:978.0px;line-height:19px;font-size:13.3px;color:#505050;font-family:'Liberation Mono',monospace;left:280px;width:600px;text-align:right;">24.5</div>
<div class="t" style="top:978.0px;line-height:19px;font-size:13.3px;color:#505050;font-family:'Liberation Mono',monospace;left:322px;width:600px;text-align:right;">24.5</div>
<div class="t" style="top:978.0px;line-height:19px;font-size:13.3px;color:#505050;font-family:'Liberation Mono',monospace;left:364px;width:600px;text-align:right;">24.5</div>
<div class="t" style="top:978.0px;line-height:19px;font-size:13.3px;color:#505050;font-family:'Liberation Mono',monospace;left:408px;width:600px;text-align:right;">25.4</div>
<div class="t" style="top:978.0px;line-height:19px;font-size:13.3px;color:#505050;font-family:'Liberation Mono',monospace;left:449px;width:600px;text-align:right;">49.8</div>
<div class="t" style="top:978.0px;line-height:19px;font-size:13.3px;color:#505050;font-family:'Liberation Mono',monospace;left:486px;width:600px;text-align:right;">2.9</div>
<div class="t" style="top:978.0px;line-height:19px;font-size:13.3px;color:#505050;font-family:'Liberation Mono',monospace;left:526px;width:600px;text-align:right;">3.08</div>
<div class="t" style="top:978.0px;line-height:19px;font-size:13.3px;color:#505050;font-family:'Liberation Mono',monospace;left:570px;width:600px;text-align:right;">4.55</div>
<div class="t" style="top:978.0px;line-height:19px;font-size:13.3px;color:#505050;font-family:'Liberation Mono',monospace;left:615px;width:600px;text-align:right;">4.71</div>
<div class="t" style="top:978.0px;line-height:19px;font-size:13.3px;color:#505050;font-family:'Liberation Mono',monospace;left:655px;width:600px;text-align:right;">4.7</div>
<div class="t" style="top:978.0px;line-height:19px;font-size:13.3px;color:#505050;font-family:'Liberation Mono',monospace;left:695px;width:600px;text-align:right;">4.71</div>
<div class="t" style="top:978.0px;line-height:19px;font-size:13.3px;color:#505050;font-family:'Liberation Mono',monospace;left:736px;width:600px;text-align:right;">4.62</div>
<div class="t" style="top:978.0px;line-height:19px;font-size:13.3px;color:#505050;font-family:'Liberation Mono',monospace;left:783px;width:600px;text-align:right;">1.53</div>
<div class="t" style="top:998.0px;line-height:20px;font-size:14.3px;color:#000;font-weight:bold;left:83.5px;">21</div>
<div class="t" style="top:998.0px;line-height:19px;font-size:13.3px;color:#505050;font-family:'Liberation Mono',monospace;left:119.5px;">2015-06-11 21:21:48</div>
<div class="t" style="top:998.0px;line-height:19px;font-size:13.3px;color:#505050;font-family:'Liberation Mono',monospace;left:-262px;width:600px;text-align:right;">225.3</div>
<div class="t" style="top:998.0px;line-height:19px;font-size:13.3px;color:#505050;font-family:'Liberation Mono',monospace;left:-203px;width:600px;text-align:right;">223.8</div>
<div class="t" style="top:998.0px;line-height:19px;font-size:13.3px;color:#505050;font-family:'Liberation Mono',monospace;left:-145px;width:600px;text-align:right;">225.3</div>
<div class="t" style="top:998.0px;line-height:19px;font-size:13.3px;color:#505050;font-family:'Liberation Mono',monospace;left:-87px;width:600px;text-align:right;">226</div>
<div class="t" style="top:998.0px;line-height:19px;font-size:13.3px;color:#505050;font-family:'Liberation Mono',monospace;left:-29px;width:600px;text-align:right;">226.1</div>
<div class="t" style="top:998.0px;line-height:19px;font-size:13.3px;color:#505050;font-family:'Liberation Mono',monospace;left:29px;width:600px;text-align:right;">224.7</div>
<div class="t" style="top:998.0px;line-height:19px;font-size:13.3px;color:#505050;font-family:'Liberation Mono',monospace;left:71px;width:600px;text-align:right;">14</div>
<div class="t" style="top:998.0px;line-height:19px;font-size:13.3px;color:#505050;font-family:'Liberation Mono',monospace;left:128px;width:600px;text-align:right;">81.3</div>
<div class="t" style="top:998.0px;line-height:19px;font-size:13.3px;color:#505050;font-family:'Liberation Mono',monospace;left:183px;width:600px;text-align:right;">68</div>
<div class="t" style="top:998.0px;line-height:19px;font-size:13.3px;color:#505050;font-family:'Liberation Mono',monospace;left:231px;width:600px;text-align:right;">27.1</div>
<div class="t" style="top:998.0px;line-height:19px;font-size:13.3px;color:#505050;font-family:'Liberation Mono',monospace;left:280px;width:600px;text-align:right;">24.5</div>
<div class="t" style="top:998.0px;line-height:19px;font-size:13.3px;color:#505050;font-family:'Liberation Mono',monospace;left:322px;width:600px;text-align:right;">24.5</div>
<div class="t" style="top:998.0px;line-height:19px;font-size:13.3px;color:#505050;font-family:'Liberation Mono',monospace;left:364px;width:600px;text-align:right;">24.4</div>
<div class="t" style="top:998.0px;line-height:19px;font-size:13.3px;color:#505050;font-family:'Liberation Mono',monospace;left:408px;width:600px;text-align:right;">25.4</div>
<div class="t" style="top:998.0px;line-height:19px;font-size:13.3px;color:#505050;font-family:'Liberation Mono',monospace;left:449px;width:600px;text-align:right;">49.8</div>
<div class="t" style="top:998.0px;line-height:19px;font-size:13.3px;color:#505050;font-family:'Liberation Mono',monospace;left:486px;width:600px;text-align:right;">2.89</div>
<div class="t" style="top:998.0px;line-height:19px;font-size:13.3px;color:#505050;font-family:'Liberation Mono',monospace;left:526px;width:600px;text-align:right;">3.06</div>
<div class="t" style="top:998.0px;line-height:19px;font-size:13.3px;color:#505050;font-family:'Liberation Mono',monospace;left:570px;width:600px;text-align:right;">4.86</div>
<div class="t" style="top:998.0px;line-height:19px;font-size:13.3px;color:#505050;font-family:'Liberation Mono',monospace;left:615px;width:600px;text-align:right;">4.7</div>
<div class="t" style="top:998.0px;line-height:19px;font-size:13.3px;color:#505050;font-family:'Liberation Mono',monospace;left:655px;width:600px;text-align:right;">4.7</div>
<div class="t" style="top:998.0px;line-height:19px;font-size:13.3px;color:#505050;font-family:'Liberation Mono',monospace;left:695px;width:600px;text-align:right;">4.71</div>
<div class="t" style="top:998.0px;line-height:19px;font-size:13.3px;color:#505050;font-family:'Liberation Mono',monospace;left:736px;width:600px;text-align:right;">4.6</div>
<div class="t" style="top:998.0px;line-height:19px;font-size:13.3px;color:#505050;font-family:'Liberation Mono',monospace;left:783px;width:600px;text-align:right;">1.52</div>
<div class="t" style="top:1018.0px;line-height:20px;font-size:14.3px;color:#000;font-weight:bold;left:83.5px;">22</div>
<div class="t" style="top:1018.0px;line-height:19px;font-size:13.3px;color:#505050;font-family:'Liberation Mono',monospace;left:119.5px;">2015-06-11 21:22:48</div>
<div class="t" style="top:1018.0px;line-height:19px;font-size:13.3px;color:#505050;font-family:'Liberation Mono',monospace;left:-262px;width:600px;text-align:right;">225.2</div>
<div class="t" style="top:1018.0px;line-height:19px;font-size:13.3px;color:#505050;font-family:'Liberation Mono',monospace;left:-203px;width:600px;text-align:right;">223.5</div>
<div class="t" style="top:1018.0px;line-height:19px;font-size:13.3px;color:#505050;font-family:'Liberation Mono',monospace;left:-145px;width:600px;text-align:right;">225.3</div>
<div class="t" style="top:1018.0px;line-height:19px;font-size:13.3px;color:#505050;font-family:'Liberation Mono',monospace;left:-87px;width:600px;text-align:right;">226.1</div>
<div class="t" style="top:1018.0px;line-height:19px;font-size:13.3px;color:#505050;font-family:'Liberation Mono',monospace;left:-29px;width:600px;text-align:right;">226.1</div>
<div class="t" style="top:1018.0px;line-height:19px;font-size:13.3px;color:#505050;font-family:'Liberation Mono',monospace;left:29px;width:600px;text-align:right;">224.8</div>
<div class="t" style="top:1018.0px;line-height:19px;font-size:13.3px;color:#505050;font-family:'Liberation Mono',monospace;left:71px;width:600px;text-align:right;">14</div>
<div class="t" style="top:1018.0px;line-height:19px;font-size:13.3px;color:#505050;font-family:'Liberation Mono',monospace;left:128px;width:600px;text-align:right;">81.2</div>
<div class="t" style="top:1018.0px;line-height:19px;font-size:13.3px;color:#505050;font-family:'Liberation Mono',monospace;left:183px;width:600px;text-align:right;">67.1</div>
<div class="t" style="top:1018.0px;line-height:19px;font-size:13.3px;color:#505050;font-family:'Liberation Mono',monospace;left:231px;width:600px;text-align:right;">27.1</div>
<div class="t" style="top:1018.0px;line-height:19px;font-size:13.3px;color:#505050;font-family:'Liberation Mono',monospace;left:280px;width:600px;text-align:right;">24.5</div>
<div class="t" style="top:1018.0px;line-height:19px;font-size:13.3px;color:#505050;font-family:'Liberation Mono',monospace;left:322px;width:600px;text-align:right;">24.5</div>
<div class="t" style="top:1018.0px;line-height:19px;font-size:13.3px;color:#505050;font-family:'Liberation Mono',monospace;left:364px;width:600px;text-align:right;">24.5</div>
<div class="t" style="top:1018.0px;line-height:19px;font-size:13.3px;color:#505050;font-family:'Liberation Mono',monospace;left:408px;width:600px;text-align:right;">25.4</div>
<div class="t" style="top:1018.0px;line-height:19px;font-size:13.3px;color:#505050;font-family:'Liberation Mono',monospace;left:449px;width:600px;text-align:right;">49.8</div>
<div class="t" style="top:1018.0px;line-height:19px;font-size:13.3px;color:#505050;font-family:'Liberation Mono',monospace;left:486px;width:600px;text-align:right;">2.88</div>
<div class="t" style="top:1018.0px;line-height:19px;font-size:13.3px;color:#505050;font-family:'Liberation Mono',monospace;left:526px;width:600px;text-align:right;">3.05</div>
<div class="t" style="top:1018.0px;line-height:19px;font-size:13.3px;color:#505050;font-family:'Liberation Mono',monospace;left:570px;width:600px;text-align:right;">4.55</div>
<div class="t" style="top:1018.0px;line-height:19px;font-size:13.3px;color:#505050;font-family:'Liberation Mono',monospace;left:615px;width:600px;text-align:right;">4.71</div>
<div class="t" style="top:1018.0px;line-height:19px;font-size:13.3px;color:#505050;font-family:'Liberation Mono',monospace;left:655px;width:600px;text-align:right;">4.73</div>
<div class="t" style="top:1018.0px;line-height:19px;font-size:13.3px;color:#505050;font-family:'Liberation Mono',monospace;left:695px;width:600px;text-align:right;">4.71</div>
<div class="t" style="top:1018.0px;line-height:19px;font-size:13.3px;color:#505050;font-family:'Liberation Mono',monospace;left:736px;width:600px;text-align:right;">4.61</div>
<div class="t" style="top:1018.0px;line-height:19px;font-size:13.3px;color:#505050;font-family:'Liberation Mono',monospace;left:783px;width:600px;text-align:right;">1.53</div>
<div class="t" style="top:1038.0px;line-height:20px;font-size:14.3px;color:#000;font-weight:bold;left:83.5px;">23</div>
<div class="t" style="top:1038.0px;line-height:19px;font-size:13.3px;color:#505050;font-family:'Liberation Mono',monospace;left:119.5px;">2015-06-11 21:23:48</div>
<div class="t" style="top:1038.0px;line-height:19px;font-size:13.3px;color:#505050;font-family:'Liberation Mono',monospace;left:-262px;width:600px;text-align:right;">225.2</div>
<div class="t" style="top:1038.0px;line-height:19px;font-size:13.3px;color:#505050;font-family:'Liberation Mono',monospace;left:-203px;width:600px;text-align:right;">223.4</div>
<div class="t" style="top:1038.0px;line-height:19px;font-size:13.3px;color:#505050;font-family:'Liberation Mono',monospace;left:-145px;width:600px;text-align:right;">225.1</div>
<div class="t" style="top:1038.0px;line-height:19px;font-size:13.3px;color:#505050;font-family:'Liberation Mono',monospace;left:-87px;width:600px;text-align:right;">225.7</div>
<div class="t" style="top:1038.0px;line-height:19px;font-size:13.3px;color:#505050;font-family:'Liberation Mono',monospace;left:-29px;width:600px;text-align:right;">225.6</div>
<div class="t" style="top:1038.0px;line-height:19px;font-size:13.3px;color:#505050;font-family:'Liberation Mono',monospace;left:29px;width:600px;text-align:right;">224.4</div>
<div class="t" style="top:1038.0px;line-height:19px;font-size:13.3px;color:#505050;font-family:'Liberation Mono',monospace;left:71px;width:600px;text-align:right;">14</div>
<div class="t" style="top:1038.0px;line-height:19px;font-size:13.3px;color:#505050;font-family:'Liberation Mono',monospace;left:128px;width:600px;text-align:right;">81.1</div>
<div class="t" style="top:1038.0px;line-height:19px;font-size:13.3px;color:#505050;font-family:'Liberation Mono',monospace;left:183px;width:600px;text-align:right;">67</div>
<div class="t" style="top:1038.0px;line-height:19px;font-size:13.3px;color:#505050;font-family:'Liberation Mono',monospace;left:231px;width:600px;text-align:right;">27.1</div>
<div class="t" style="top:1038.0px;line-height:19px;font-size:13.3px;color:#505050;font-family:'Liberation Mono',monospace;left:280px;width:600px;text-align:right;">24.5</div>
<div class="t" style="top:1038.0px;line-height:19px;font-size:13.3px;color:#505050;font-family:'Liberation Mono',monospace;left:322px;width:600px;text-align:right;">24.5</div>
<div class="t" style="top:1038.0px;line-height:19px;font-size:13.3px;color:#505050;font-family:'Liberation Mono',monospace;left:364px;width:600px;text-align:right;">24.4</div>
<div class="t" style="top:1038.0px;line-height:19px;font-size:13.3px;color:#505050;font-family:'Liberation Mono',monospace;left:408px;width:600px;text-align:right;">25.4</div>
<div class="t" style="top:1038.0px;line-height:19px;font-size:13.3px;color:#505050;font-family:'Liberation Mono',monospace;left:449px;width:600px;text-align:right;">49.8</div>
<div class="t" style="top:1038.0px;line-height:19px;font-size:13.3px;color:#505050;font-family:'Liberation Mono',monospace;left:486px;width:600px;text-align:right;">2.88</div>
<div class="t" style="top:1038.0px;line-height:19px;font-size:13.3px;color:#505050;font-family:'Liberation Mono',monospace;left:526px;width:600px;text-align:right;">3.06</div>
<div class="t" style="top:1038.0px;line-height:19px;font-size:13.3px;color:#505050;font-family:'Liberation Mono',monospace;left:570px;width:600px;text-align:right;">4.51</div>
<div class="t" style="top:1038.0px;line-height:19px;font-size:13.3px;color:#505050;font-family:'Liberation Mono',monospace;left:615px;width:600px;text-align:right;">4.71</div>
<div class="t" style="top:1038.0px;line-height:19px;font-size:13.3px;color:#505050;font-family:'Liberation Mono',monospace;left:655px;width:600px;text-align:right;">4.7</div>
<div class="t" style="top:1038.0px;line-height:19px;font-size:13.3px;color:#505050;font-family:'Liberation Mono',monospace;left:695px;width:600px;text-align:right;">4.71</div>
<div class="t" style="top:1038.0px;line-height:19px;font-size:13.3px;color:#505050;font-family:'Liberation Mono',monospace;left:736px;width:600px;text-align:right;">4.6</div>
<div class="t" style="top:1038.0px;line-height:19px;font-size:13.3px;color:#505050;font-family:'Liberation Mono',monospace;left:783px;width:600px;text-align:right;">1.5</div>
<div class="t" style="top:1058.0px;line-height:20px;font-size:14.3px;color:#000;font-weight:bold;left:83.5px;">24</div>
<div class="t" style="top:1058.0px;line-height:19px;font-size:13.3px;color:#505050;font-family:'Liberation Mono',monospace;left:119.5px;">2015-06-11 21:24:49</div>
<div class="t" style="top:1058.0px;line-height:19px;font-size:13.3px;color:#505050;font-family:'Liberation Mono',monospace;left:-262px;width:600px;text-align:right;">225.2</div>
<div class="t" style="top:1058.0px;line-height:19px;font-size:13.3px;color:#505050;font-family:'Liberation Mono',monospace;left:-203px;width:600px;text-align:right;">223.6</div>
<div class="t" style="top:1058.0px;line-height:19px;font-size:13.3px;color:#505050;font-family:'Liberation Mono',monospace;left:-145px;width:600px;text-align:right;">225.2</div>
<div class="t" style="top:1058.0px;line-height:19px;font-size:13.3px;color:#505050;font-family:'Liberation Mono',monospace;left:-87px;width:600px;text-align:right;">226.2</div>
<div class="t" style="top:1058.0px;line-height:19px;font-size:13.3px;color:#505050;font-family:'Liberation Mono',monospace;left:-29px;width:600px;text-align:right;">226.1</div>
<div class="t" style="top:1058.0px;line-height:19px;font-size:13.3px;color:#505050;font-family:'Liberation Mono',monospace;left:29px;width:600px;text-align:right;">224.8</div>
<div class="t" style="top:1058.0px;line-height:19px;font-size:13.3px;color:#505050;font-family:'Liberation Mono',monospace;left:71px;width:600px;text-align:right;">14</div>
<div class="t" style="top:1058.0px;line-height:19px;font-size:13.3px;color:#505050;font-family:'Liberation Mono',monospace;left:128px;width:600px;text-align:right;">81.5</div>
<div class="t" style="top:1058.0px;line-height:19px;font-size:13.3px;color:#505050;font-family:'Liberation Mono',monospace;left:183px;width:600px;text-align:right;">66.5</div>
<div class="t" style="top:1058.0px;line-height:19px;font-size:13.3px;color:#505050;font-family:'Liberation Mono',monospace;left:231px;width:600px;text-align:right;">27.1</div>
<div class="t" style="top:1058.0px;line-height:19px;font-size:13.3px;color:#505050;font-family:'Liberation Mono',monospace;left:280px;width:600px;text-align:right;">24.5</div>
<div class="t" style="top:1058.0px;line-height:19px;font-size:13.3px;color:#505050;font-family:'Liberation Mono',monospace;left:322px;width:600px;text-align:right;">24.6</div>
<div class="t" style="top:1058.0px;line-height:19px;font-size:13.3px;color:#505050;font-family:'Liberation Mono',monospace;left:364px;width:600px;text-align:right;">24.5</div>
<div class="t" style="top:1058.0px;line-height:19px;font-size:13.3px;color:#505050;font-family:'Liberation Mono',monospace;left:408px;width:600px;text-align:right;">25.4</div>
<div class="t" style="top:1058.0px;line-height:19px;font-size:13.3px;color:#505050;font-family:'Liberation Mono',monospace;left:449px;width:600px;text-align:right;">49.8</div>
<div class="t" style="top:1058.0px;line-height:19px;font-size:13.3px;color:#505050;font-family:'Liberation Mono',monospace;left:486px;width:600px;text-align:right;">2.88</div>
<div class="t" style="top:1058.0px;line-height:19px;font-size:13.3px;color:#505050;font-family:'Liberation Mono',monospace;left:526px;width:600px;text-align:right;">3.04</div>
<div class="t" style="top:1058.0px;line-height:19px;font-size:13.3px;color:#505050;font-family:'Liberation Mono',monospace;left:570px;width:600px;text-align:right;">4.78</div>
<div class="t" style="top:1058.0px;line-height:19px;font-size:13.3px;color:#505050;font-family:'Liberation Mono',monospace;left:615px;width:600px;text-align:right;">4.71</div>
<div class="t" style="top:1058.0px;line-height:19px;font-size:13.3px;color:#505050;font-family:'Liberation Mono',monospace;left:655px;width:600px;text-align:right;">4.7</div>
<div class="t" style="top:1058.0px;line-height:19px;font-size:13.3px;color:#505050;font-family:'Liberation Mono',monospace;left:695px;width:600px;text-align:right;">4.71</div>
<div class="t" style="top:1058.0px;line-height:19px;font-size:13.3px;color:#505050;font-family:'Liberation Mono',monospace;left:736px;width:600px;text-align:right;">4.6</div>
<div class="t" style="top:1058.0px;line-height:19px;font-size:13.3px;color:#505050;font-family:'Liberation Mono',monospace;left:783px;width:600px;text-align:right;">1.52</div>
<div class="t" style="top:1078.0px;line-height:20px;font-size:14.3px;color:#000;font-weight:bold;left:83.5px;">25</div>
<div class="t" style="top:1078.0px;line-height:19px;font-size:13.3px;color:#505050;font-family:'Liberation Mono',monospace;left:119.5px;">2015-06-11 21:25:50</div>
<div class="t" style="top:1078.0px;line-height:19px;font-size:13.3px;color:#505050;font-family:'Liberation Mono',monospace;left:-262px;width:600px;text-align:right;">225.1</div>
<div class="t" style="top:1078.0px;line-height:19px;font-size:13.3px;color:#505050;font-family:'Liberation Mono',monospace;left:-203px;width:600px;text-align:right;">223.3</div>
<div class="t" style="top:1078.0px;line-height:19px;font-size:13.3px;color:#505050;font-family:'Liberation Mono',monospace;left:-145px;width:600px;text-align:right;">224.9</div>
<div class="t" style="top:1078.0px;line-height:19px;font-size:13.3px;color:#505050;font-family:'Liberation Mono',monospace;left:-87px;width:600px;text-align:right;">225.7</div>
<div class="t" style="top:1078.0px;line-height:19px;font-size:13.3px;color:#505050;font-family:'Liberation Mono',monospace;left:-29px;width:600px;text-align:right;">225.8</div>
<div class="t" style="top:1078.0px;line-height:19px;font-size:13.3px;color:#505050;font-family:'Liberation Mono',monospace;left:29px;width:600px;text-align:right;">224.5</div>
<div class="t" style="top:1078.0px;line-height:19px;font-size:13.3px;color:#505050;font-family:'Liberation Mono',monospace;left:71px;width:600px;text-align:right;">14</div>
<div class="t" style="top:1078.0px;line-height:19px;font-size:13.3px;color:#505050;font-family:'Liberation Mono',monospace;left:128px;width:600px;text-align:right;">83</div>
<div class="t" style="top:1078.0px;line-height:19px;font-size:13.3px;color:#505050;font-family:'Liberation Mono',monospace;left:183px;width:600px;text-align:right;">66.1</div>
<div class="t" style="top:1078.0px;line-height:19px;font-size:13.3px;color:#505050;font-family:'Liberation Mono',monospace;left:231px;width:600px;text-align:right;">27.1</div>
<div class="t" style="top:1078.0px;line-height:19px;font-size:13.3px;color:#505050;font-family:'Liberation Mono',monospace;left:280px;width:600px;text-align:right;">24.5</div>
<div class="t" style="top:1078.0px;line-height:19px;font-size:13.3px;color:#505050;font-family:'Liberation Mono',monospace;left:322px;width:600px;text-align:right;">24.6</div>
<div class="t" style="top:1078.0px;line-height:19px;font-size:13.3px;color:#505050;font-family:'Liberation Mono',monospace;left:364px;width:600px;text-align:right;">24.5</div>
<div class="t" style="top:1078.0px;line-height:19px;font-size:13.3px;color:#505050;font-family:'Liberation Mono',monospace;left:408px;width:600px;text-align:right;">25.4</div>
<div class="t" style="top:1078.0px;line-height:19px;font-size:13.3px;color:#505050;font-family:'Liberation Mono',monospace;left:449px;width:600px;text-align:right;">49.7</div>
<div class="t" style="top:1078.0px;line-height:19px;font-size:13.3px;color:#505050;font-family:'Liberation Mono',monospace;left:486px;width:600px;text-align:right;">2.88</div>
<div class="t" style="top:1078.0px;line-height:19px;font-size:13.3px;color:#505050;font-family:'Liberation Mono',monospace;left:526px;width:600px;text-align:right;">3.04</div>
<div class="t" style="top:1078.0px;line-height:19px;font-size:13.3px;color:#505050;font-family:'Liberation Mono',monospace;left:570px;width:600px;text-align:right;">4.24</div>
<div class="t" style="top:1078.0px;line-height:19px;font-size:13.3px;color:#505050;font-family:'Liberation Mono',monospace;left:615px;width:600px;text-align:right;">4.7</div>
<div class="t" style="top:1078.0px;line-height:19px;font-size:13.3px;color:#505050;font-family:'Liberation Mono',monospace;left:655px;width:600px;text-align:right;">4.72</div>
<div class="t" style="top:1078.0px;line-height:19px;font-size:13.3px;color:#505050;font-family:'Liberation Mono',monospace;left:695px;width:600px;text-align:right;">4.71</div>
<div class="t" style="top:1078.0px;line-height:19px;font-size:13.3px;color:#505050;font-family:'Liberation Mono',monospace;left:736px;width:600px;text-align:right;">4.61</div>
<div class="t" style="top:1078.0px;line-height:19px;font-size:13.3px;color:#505050;font-family:'Liberation Mono',monospace;left:783px;width:600px;text-align:right;">1.5</div>
<div class="t" style="top:1098.0px;line-height:20px;font-size:14.3px;color:#000;font-weight:bold;left:83.5px;">26</div>
<div class="t" style="top:1098.0px;line-height:19px;font-size:13.3px;color:#505050;font-family:'Liberation Mono',monospace;left:119.5px;">2015-06-11 21:26:50</div>
<div class="t" style="top:1098.0px;line-height:19px;font-size:13.3px;color:#505050;font-family:'Liberation Mono',monospace;left:-262px;width:600px;text-align:right;">225.2</div>
<div class="t" style="top:1098.0px;line-height:19px;font-size:13.3px;color:#505050;font-family:'Liberation Mono',monospace;left:-203px;width:600px;text-align:right;">223.7</div>
<div class="t" style="top:1098.0px;line-height:19px;font-size:13.3px;color:#505050;font-family:'Liberation Mono',monospace;left:-145px;width:600px;text-align:right;">225.2</div>
<div class="t" style="top:1098.0px;line-height:19px;font-size:13.3px;color:#505050;font-family:'Liberation Mono',monospace;left:-87px;width:600px;text-align:right;">226.1</div>
<div class="t" style="top:1098.0px;line-height:19px;font-size:13.3px;color:#505050;font-family:'Liberation Mono',monospace;left:-29px;width:600px;text-align:right;">226</div>
<div class="t" style="top:1098.0px;line-height:19px;font-size:13.3px;color:#505050;font-family:'Liberation Mono',monospace;left:29px;width:600px;text-align:right;">224.8</div>
<div class="t" style="top:1098.0px;line-height:19px;font-size:13.3px;color:#505050;font-family:'Liberation Mono',monospace;left:71px;width:600px;text-align:right;">14</div>
<div class="t" style="top:1098.0px;line-height:19px;font-size:13.3px;color:#505050;font-family:'Liberation Mono',monospace;left:128px;width:600px;text-align:right;">84.3</div>
<div class="t" style="top:1098.0px;line-height:19px;font-size:13.3px;color:#505050;font-family:'Liberation Mono',monospace;left:183px;width:600px;text-align:right;">67.3</div>
<div class="t" style="top:1098.0px;line-height:19px;font-size:13.3px;color:#505050;font-family:'Liberation Mono',monospace;left:231px;width:600px;text-align:right;">27.1</div>
<div class="t" style="top:1098.0px;line-height:19px;font-size:13.3px;color:#505050;font-family:'Liberation Mono',monospace;left:280px;width:600px;text-align:right;">24.5</div>
<div class="t" style="top:1098.0px;line-height:19px;font-size:13.3px;color:#505050;font-family:'Liberation Mono',monospace;left:322px;width:600px;text-align:right;">24.6</div>
<div class="t" style="top:1098.0px;line-height:19px;font-size:13.3px;color:#505050;font-family:'Liberation Mono',monospace;left:364px;width:600px;text-align:right;">24.5</div>
<div class="t" style="top:1098.0px;line-height:19px;font-size:13.3px;color:#505050;font-family:'Liberation Mono',monospace;left:408px;width:600px;text-align:right;">25.4</div>
<div class="t" style="top:1098.0px;line-height:19px;font-size:13.3px;color:#505050;font-family:'Liberation Mono',monospace;left:449px;width:600px;text-align:right;">49.7</div>
<div class="t" style="top:1098.0px;line-height:19px;font-size:13.3px;color:#505050;font-family:'Liberation Mono',monospace;left:486px;width:600px;text-align:right;">2.88</div>
<div class="t" style="top:1098.0px;line-height:19px;font-size:13.3px;color:#505050;font-family:'Liberation Mono',monospace;left:526px;width:600px;text-align:right;">3.06</div>
<div class="t" style="top:1098.0px;line-height:19px;font-size:13.3px;color:#505050;font-family:'Liberation Mono',monospace;left:570px;width:600px;text-align:right;">4.87</div>
<div class="t" style="top:1098.0px;line-height:19px;font-size:13.3px;color:#505050;font-family:'Liberation Mono',monospace;left:615px;width:600px;text-align:right;">4.69</div>
<div class="t" style="top:1098.0px;line-height:19px;font-size:13.3px;color:#505050;font-family:'Liberation Mono',monospace;left:655px;width:600px;text-align:right;">4.72</div>
<div class="t" style="top:1098.0px;line-height:19px;font-size:13.3px;color:#505050;font-family:'Liberation Mono',monospace;left:695px;width:600px;text-align:right;">4.71</div>
<div class="t" style="top:1098.0px;line-height:19px;font-size:13.3px;color:#505050;font-family:'Liberation Mono',monospace;left:736px;width:600px;text-align:right;">4.59</div>
<div class="t" style="top:1098.0px;line-height:19px;font-size:13.3px;color:#505050;font-family:'Liberation Mono',monospace;left:783px;width:600px;text-align:right;">1.52</div>
<div class="t" style="top:1118.0px;line-height:20px;font-size:14.3px;color:#000;font-weight:bold;left:83.5px;">27</div>
<div class="t" style="top:1118.0px;line-height:19px;font-size:13.3px;color:#505050;font-family:'Liberation Mono',monospace;left:119.5px;">2015-06-11 21:27:50</div>
<div class="t" style="top:1118.0px;line-height:19px;font-size:13.3px;color:#505050;font-family:'Liberation Mono',monospace;left:-262px;width:600px;text-align:right;">225.5</div>
<div class="t" style="top:1118.0px;line-height:19px;font-size:13.3px;color:#505050;font-family:'Liberation Mono',monospace;left:-203px;width:600px;text-align:right;">223.6</div>
<div class="t" style="top:1118.0px;line-height:19px;font-size:13.3px;color:#505050;font-family:'Liberation Mono',monospace;left:-145px;width:600px;text-align:right;">225.2</div>
<div class="t" style="top:1118.0px;line-height:19px;font-size:13.3px;color:#505050;font-family:'Liberation Mono',monospace;left:-87px;width:600px;text-align:right;">226.1</div>
<div class="t" style="top:1118.0px;line-height:19px;font-size:13.3px;color:#505050;font-family:'Liberation Mono',monospace;left:-29px;width:600px;text-align:right;">226.1</div>
<div class="t" style="top:1118.0px;line-height:19px;font-size:13.3px;color:#505050;font-family:'Liberation Mono',monospace;left:29px;width:600px;text-align:right;">224.9</div>
<div class="t" style="top:1118.0px;line-height:19px;font-size:13.3px;color:#505050;font-family:'Liberation Mono',monospace;left:71px;width:600px;text-align:right;">14</div>
<div class="t" style="top:1118.0px;line-height:19px;font-size:13.3px;color:#505050;font-family:'Liberation Mono',monospace;left:128px;width:600px;text-align:right;">84.6</div>
<div class="t" style="top:1118.0px;line-height:19px;font-size:13.3px;color:#505050;font-family:'Liberation Mono',monospace;left:183px;width:600px;text-align:right;">67.7</div>
<div class="t" style="top:1118.0px;line-height:19px;font-size:13.3px;color:#505050;font-family:'Liberation Mono',monospace;left:231px;width:600px;text-align:right;">27.1</div>
<div class="t" style="top:1118.0px;line-height:19px;font-size:13.3px;color:#505050;font-family:'Liberation Mono',monospace;left:280px;width:600px;text-align:right;">24.5</div>
<div class="t" style="top:1118.0px;line-height:19px;font-size:13.3px;color:#505050;font-family:'Liberation Mono',monospace;left:322px;width:600px;text-align:right;">24.6</div>
<div class="t" style="top:1118.0px;line-height:19px;font-size:13.3px;color:#505050;font-family:'Liberation Mono',monospace;left:364px;width:600px;text-align:right;">24.5</div>
<div class="t" style="top:1118.0px;line-height:19px;font-size:13.3px;color:#505050;font-family:'Liberation Mono',monospace;left:408px;width:600px;text-align:right;">25.4</div>
<div class="t" style="top:1118.0px;line-height:19px;font-size:13.3px;color:#505050;font-family:'Liberation Mono',monospace;left:449px;width:600px;text-align:right;">49.7</div>
<div class="t" style="top:1118.0px;line-height:19px;font-size:13.3px;color:#505050;font-family:'Liberation Mono',monospace;left:486px;width:600px;text-align:right;">2.87</div>
<div class="t" style="top:1118.0px;line-height:19px;font-size:13.3px;color:#505050;font-family:'Liberation Mono',monospace;left:526px;width:600px;text-align:right;">3.04</div>
<div class="t" style="top:1118.0px;line-height:19px;font-size:13.3px;color:#505050;font-family:'Liberation Mono',monospace;left:570px;width:600px;text-align:right;">4.7</div>
<div class="t" style="top:1118.0px;line-height:19px;font-size:13.3px;color:#505050;font-family:'Liberation Mono',monospace;left:615px;width:600px;text-align:right;">4.7</div>
<div class="t" style="top:1118.0px;line-height:19px;font-size:13.3px;color:#505050;font-family:'Liberation Mono',monospace;left:655px;width:600px;text-align:right;">4.7</div>
<div class="t" style="top:1118.0px;line-height:19px;font-size:13.3px;color:#505050;font-family:'Liberation Mono',monospace;left:695px;width:600px;text-align:right;">4.7</div>
<div class="t" style="top:1118.0px;line-height:19px;font-size:13.3px;color:#505050;font-family:'Liberation Mono',monospace;left:736px;width:600px;text-align:right;">4.6</div>
<div class="t" style="top:1118.0px;line-height:19px;font-size:13.3px;color:#505050;font-family:'Liberation Mono',monospace;left:783px;width:600px;text-align:right;">1.5</div>
<div class="t" style="top:1138.0px;line-height:20px;font-size:14.3px;color:#000;font-weight:bold;left:83.5px;">28</div>
<div class="t" style="top:1138.0px;line-height:19px;font-size:13.3px;color:#505050;font-family:'Liberation Mono',monospace;left:119.5px;">2015-06-11 21:28:50</div>
<div class="t" style="top:1138.0px;line-height:19px;font-size:13.3px;color:#505050;font-family:'Liberation Mono',monospace;left:-262px;width:600px;text-align:right;">225.5</div>
<div class="t" style="top:1138.0px;line-height:19px;font-size:13.3px;color:#505050;font-family:'Liberation Mono',monospace;left:-203px;width:600px;text-align:right;">223.6</div>
<div class="t" style="top:1138.0px;line-height:19px;font-size:13.3px;color:#505050;font-family:'Liberation Mono',monospace;left:-145px;width:600px;text-align:right;">225.2</div>
<div class="t" style="top:1138.0px;line-height:19px;font-size:13.3px;color:#505050;font-family:'Liberation Mono',monospace;left:-87px;width:600px;text-align:right;">225.9</div>
<div class="t" style="top:1138.0px;line-height:19px;font-size:13.3px;color:#505050;font-family:'Liberation Mono',monospace;left:-29px;width:600px;text-align:right;">225.9</div>
<div class="t" style="top:1138.0px;line-height:19px;font-size:13.3px;color:#505050;font-family:'Liberation Mono',monospace;left:29px;width:600px;text-align:right;">224.7</div>
<div class="t" style="top:1138.0px;line-height:19px;font-size:13.3px;color:#505050;font-family:'Liberation Mono',monospace;left:71px;width:600px;text-align:right;">14</div>
<div class="t" style="top:1138.0px;line-height:19px;font-size:13.3px;color:#505050;font-family:'Liberation Mono',monospace;left:128px;width:600px;text-align:right;">85</div>
<div class="t" style="top:1138.0px;line-height:19px;font-size:13.3px;color:#505050;font-family:'Liberation Mono',monospace;left:183px;width:600px;text-align:right;">68.5</div>
<div class="t" style="top:1138.0px;line-height:19px;font-size:13.3px;color:#505050;font-family:'Liberation Mono',monospace;left:231px;width:600px;text-align:right;">27.1</div>
<div class="t" style="top:1138.0px;line-height:19px;font-size:13.3px;color:#505050;font-family:'Liberation Mono',monospace;left:280px;width:600px;text-align:right;">24.5</div>
<div class="t" style="top:1138.0px;line-height:19px;font-size:13.3px;color:#505050;font-family:'Liberation Mono',monospace;left:322px;width:600px;text-align:right;">24.6</div>
<div class="t" style="top:1138.0px;line-height:19px;font-size:13.3px;color:#505050;font-family:'Liberation Mono',monospace;left:364px;width:600px;text-align:right;">24.5</div>
<div class="t" style="top:1138.0px;line-height:19px;font-size:13.3px;color:#505050;font-family:'Liberation Mono',monospace;left:408px;width:600px;text-align:right;">25.4</div>
<div class="t" style="top:1138.0px;line-height:19px;font-size:13.3px;color:#505050;font-family:'Liberation Mono',monospace;left:449px;width:600px;text-align:right;">49.7</div>
<div class="t" style="top:1138.0px;line-height:19px;font-size:13.3px;color:#505050;font-family:'Liberation Mono',monospace;left:486px;width:600px;text-align:right;">2.87</div>
<div class="t" style="top:1138.0px;line-height:19px;font-size:13.3px;color:#505050;font-family:'Liberation Mono',monospace;left:526px;width:600px;text-align:right;">3.03</div>
<div class="t" style="top:1138.0px;line-height:19px;font-size:13.3px;color:#505050;font-family:'Liberation Mono',monospace;left:570px;width:600px;text-align:right;">4.69</div>
<div class="t" style="top:1138.0px;line-height:19px;font-size:13.3px;color:#505050;font-family:'Liberation Mono',monospace;left:615px;width:600px;text-align:right;">4.71</div>
<div class="t" style="top:1138.0px;line-height:19px;font-size:13.3px;color:#505050;font-family:'Liberation Mono',monospace;left:655px;width:600px;text-align:right;">4.72</div>
<div class="t" style="top:1138.0px;line-height:19px;font-size:13.3px;color:#505050;font-family:'Liberation Mono',monospace;left:695px;width:600px;text-align:right;">4.7</div>
<div class="t" style="top:1138.0px;line-height:19px;font-size:13.3px;color:#505050;font-family:'Liberation Mono',monospace;left:736px;width:600px;text-align:right;">4.6</div>
<div class="t" style="top:1138.0px;line-height:19px;font-size:13.3px;color:#505050;font-family:'Liberation Mono',monospace;left:783px;width:600px;text-align:right;">1.49</div>
<div class="t" style="top:1158.0px;line-height:20px;font-size:14.3px;color:#000;font-weight:bold;left:83.5px;">29</div>
<div class="t" style="top:1158.0px;line-height:19px;font-size:13.3px;color:#505050;font-family:'Liberation Mono',monospace;left:119.5px;">2015-06-11 21:29:50</div>
<div class="t" style="top:1158.0px;line-height:19px;font-size:13.3px;color:#505050;font-family:'Liberation Mono',monospace;left:-262px;width:600px;text-align:right;">225.3</div>
<div class="t" style="top:1158.0px;line-height:19px;font-size:13.3px;color:#505050;font-family:'Liberation Mono',monospace;left:-203px;width:600px;text-align:right;">223.5</div>
<div class="t" style="top:1158.0px;line-height:19px;font-size:13.3px;color:#505050;font-family:'Liberation Mono',monospace;left:-145px;width:600px;text-align:right;">225</div>
<div class="t" style="top:1158.0px;line-height:19px;font-size:13.3px;color:#505050;font-family:'Liberation Mono',monospace;left:-87px;width:600px;text-align:right;">226</div>
<div class="t" style="top:1158.0px;line-height:19px;font-size:13.3px;color:#505050;font-family:'Liberation Mono',monospace;left:-29px;width:600px;text-align:right;">226.1</div>
<div class="t" style="top:1158.0px;line-height:19px;font-size:13.3px;color:#505050;font-family:'Liberation Mono',monospace;left:29px;width:600px;text-align:right;">224.8</div>
<div class="t" style="top:1158.0px;line-height:19px;font-size:13.3px;color:#505050;font-family:'Liberation Mono',monospace;left:71px;width:600px;text-align:right;">14</div>
<div class="t" style="top:1158.0px;line-height:19px;font-size:13.3px;color:#505050;font-family:'Liberation Mono',monospace;left:128px;width:600px;text-align:right;">85</div>
<div class="t" style="top:1158.0px;line-height:19px;font-size:13.3px;color:#505050;font-family:'Liberation Mono',monospace;left:183px;width:600px;text-align:right;">69.3</div>
<div class="t" style="top:1158.0px;line-height:19px;font-size:13.3px;color:#505050;font-family:'Liberation Mono',monospace;left:231px;width:600px;text-align:right;">27.1</div>
<div class="t" style="top:1158.0px;line-height:19px;font-size:13.3px;color:#505050;font-family:'Liberation Mono',monospace;left:280px;width:600px;text-align:right;">24.5</div>
<div class="t" style="top:1158.0px;line-height:19px;font-size:13.3px;color:#505050;font-family:'Liberation Mono',monospace;left:322px;width:600px;text-align:right;">24.6</div>
<div class="t" style="top:1158.0px;line-height:19px;font-size:13.3px;color:#505050;font-family:'Liberation Mono',monospace;left:364px;width:600px;text-align:right;">24.5</div>
<div class="t" style="top:1158.0px;line-height:19px;font-size:13.3px;color:#505050;font-family:'Liberation Mono',monospace;left:408px;width:600px;text-align:right;">25.4</div>
<div class="t" style="top:1158.0px;line-height:19px;font-size:13.3px;color:#505050;font-family:'Liberation Mono',monospace;left:449px;width:600px;text-align:right;">49.7</div>
<div class="t" style="top:1158.0px;line-height:19px;font-size:13.3px;color:#505050;font-family:'Liberation Mono',monospace;left:486px;width:600px;text-align:right;">2.87</div>
<div class="t" style="top:1158.0px;line-height:19px;font-size:13.3px;color:#505050;font-family:'Liberation Mono',monospace;left:526px;width:600px;text-align:right;">3.04</div>
<div class="t" style="top:1158.0px;line-height:19px;font-size:13.3px;color:#505050;font-family:'Liberation Mono',monospace;left:570px;width:600px;text-align:right;">4.52</div>
<div class="t" style="top:1158.0px;line-height:19px;font-size:13.3px;color:#505050;font-family:'Liberation Mono',monospace;left:615px;width:600px;text-align:right;">4.69</div>
<div class="t" style="top:1158.0px;line-height:19px;font-size:13.3px;color:#505050;font-family:'Liberation Mono',monospace;left:655px;width:600px;text-align:right;">4.69</div>
<div class="t" style="top:1158.0px;line-height:19px;font-size:13.3px;color:#505050;font-family:'Liberation Mono',monospace;left:695px;width:600px;text-align:right;">4.71</div>
<div class="t" style="top:1158.0px;line-height:19px;font-size:13.3px;color:#505050;font-family:'Liberation Mono',monospace;left:736px;width:600px;text-align:right;">4.6</div>
<div class="t" style="top:1158.0px;line-height:19px;font-size:13.3px;color:#505050;font-family:'Liberation Mono',monospace;left:783px;width:600px;text-align:right;">1.49</div>
<div style="left:66px;top:1174px;width:1854px;height:26px;background:#f2f1f0;border-top:2px solid #b7b6b3;"></div>
<div class="t" style="top:1178.5px;line-height:20px;font-size:14.5px;color:#4a4a4a;left:70px;">OK.</div>
<div style="left:1442px;top:1178px;width:36px;height:22px;border:1px solid #c2c1be;border-bottom:none;border-right-color:#fff;overflow:hidden;"><div class="t" style="left:3px;top:1px;font-size:14.5px;line-height:20px;color:#3c3c3c;letter-spacing:-0.1px">Unix</div></div>
<div style="left:1482px;top:1178px;width:196px;height:22px;border:1px solid #c2c1be;border-bottom:none;border-right-color:#fff;overflow:hidden;"><div class="t" style="left:3px;top:1px;font-size:14.5px;line-height:20px;color:#3c3c3c;letter-spacing:0.2px">Строка 1, Колонка 1, Симво</div></div>
<div style="left:1682px;top:1178px;width:76px;height:22px;border:1px solid #c2c1be;border-bottom:none;border-right-color:#fff;overflow:hidden;"><div class="t" style="left:3px;top:1px;font-size:14.5px;line-height:20px;color:#3c3c3c;letter-spacing:-0.1px"></div></div>
<div style="left:1762px;top:1178px;width:76px;height:22px;border:1px solid #c2c1be;border-bottom:none;border-right-color:#fff;overflow:hidden;"><div class="t" style="left:3px;top:1px;font-size:14.5px;line-height:20px;color:#3c3c3c;letter-spacing:-0.1px">5196 строк</div></div>
<div style="left:1842px;top:1178px;width:73px;height:22px;border:1px solid #c2c1be;border-bottom:none;border-right-color:#fff;overflow:hidden;"><div class="t" style="left:3px;top:1px;font-size:14.5px;line-height:20px;color:#3c3c3c;letter-spacing:-0.1px">1385 ms</div></div>
<div style="left:1919px;top:24px;width:1px;height:1176px;background:#8e8e8c;"></div>
<div style="left:0px;top:0px;width:1920px;height:24px;background:linear-gradient(#5b5850,#45433e 60%,#3d3c38);"></div>
<div style="left:5.3px;top:4.3px;width:15.4px;height:15.4px;border-radius:50%;background:linear-gradient(#5f5c54,#4a4842);border:1px solid #35342f;"></div>
<div style="left:24.8px;top:4.3px;width:15.4px;height:15.4px;border-radius:50%;background:linear-gradient(#5f5c54,#4a4842);border:1px solid #35342f;"></div>
<div style="left:43.8px;top:4.3px;width:15.4px;height:15.4px;border-radius:50%;background:linear-gradient(#5f5c54,#4a4842);border:1px solid #35342f;"></div>
<svg style="left:9px;top:8px" width="8" height="8" viewBox="0 0 8 8"><path d="M1.2 1.2L6.8 6.8M6.8 1.2L1.2 6.8" stroke="#85827a" stroke-width="1.5" fill="none"/></svg>
<svg style="left:28.5px;top:8px" width="8" height="8" viewBox="0 0 8 8"><path d="M1 4H7" stroke="#85827a" stroke-width="1.5"/></svg>
<svg style="left:47.5px;top:8px" width="8" height="8" viewBox="0 0 8 8"><rect x="1" y="1.5" width="6" height="5" stroke="#85827a" stroke-width="1.3" fill="none"/></svg>
<div class="t" style="top:2.0px;line-height:20px;font-size:14.5px;color:#87837b;letter-spacing:0.170px;font-weight:bold;left:75.7px;">Query - ptescada из postgres@172.16.1.202:5432 - [/home/monia/Рабочий стол/Доказательство смещения в OpenSCADA.sql]</div>
<svg style="left:1561px;top:3px" width="20" height="18" viewBox="0 0 20 18"><g fill="none" stroke="#8c8980" stroke-width="1.5"><path d="M6.5 4.5a5 5 0 0 0 0 7M13.5 4.5a5 5 0 0 1 0 7M3.8 2.5a8 8 0 0 0 0 11M16.2 2.5a8 8 0 0 1 0 11"/></g><circle cx="10" cy="8" r="1.8" fill="#8c8980"/><rect x="9.3" y="8" width="1.4" height="9" fill="#8c8980"/></svg>
<svg style="left:1594px;top:3px" width="18" height="18" viewBox="0 0 18 18"><circle cx="9" cy="9" r="8.5" fill="#dfdbd2"/><circle cx="9" cy="9" r="4.6" fill="none" stroke="#3d3c38" stroke-width="1.700"/><circle cx="3" cy="9" r="1.500" fill="#3d3c38"/><circle cx="12" cy="3.800" r="1.500" fill="#3d3c38"/><circle cx="12" cy="14.200" r="1.500" fill="#3d3c38"/></svg>
<svg style="left:1626px;top:4px" width="18" height="17" viewBox="0 0 18 17"><path d="M5 0L0 6H3.2V13H6.8V6H10z" fill="#dfdbd2"/><path d="M13 17L8 11H11.2V4H14.8V11H18z" fill="#dfdbd2"/></svg>
<div style="left:1657px;top:2px;width:20px;height:20px;background:#dfdbd2;border-radius:2.5px;"></div>
<div class="t" style="top:3.5px;line-height:18px;font-size:13px;color:#3d3c38;left:1167px;width:1000px;text-align:center;">En</div>
<svg style="left:1690px;top:6.5px" width="18" height="12" viewBox="0 0 20 13"><rect x="0" y="0" width="20" height="13" rx="1.5" fill="#dfdbd2"/><path d="M1.5 1.5L10 8L18.5 1.5M1.5 11.5L7 6M18.5 11.5L13 6" stroke="#3d3c38" stroke-width="1.3" fill="none"/></svg>
<svg style="left:1721px;top:4px" width="20" height="16" viewBox="0 0 20 16"><path d="M0 5.5H3.5L8 1.5V14.5L3.5 10.5H0z" fill="#dfdbd2"/><path d="M10.5 5a4 4 0 0 1 0 6" stroke="#dfdbd2" stroke-width="1.6" fill="none"/><path d="M13 2.8a7 7 0 0 1 0 10.4" stroke="#bdb9b0" stroke-width="1.5" fill="none"/><path d="M15.8 1a9.5 9.5 0 0 1 0 14" stroke="#8c8980" stroke-width="1.4" fill="none"/></svg>
<div class="t" style="top:2.5px;line-height:20px;font-size:14px;color:#dfdbd2;letter-spacing:0.250px;left:1754.3px;">Пн., 15 июня 12:11</div>
<svg style="left:1895px;top:3px" width="18" height="18" viewBox="0 0 18 18"><circle cx="9" cy="9.5" r="5.3" fill="none" stroke="#dfdbd2" stroke-width="2.4" stroke-dasharray="2.6 1.55"/><circle cx="9" cy="9.5" r="4.2" fill="none" stroke="#dfdbd2" stroke-width="1.8"/><rect x="8" y="0.5" width="2" height="8" fill="#dfdbd2" stroke="#3d3c38" stroke-width="0.8"/></svg>
</div>
<div class="scr" style="left:1920px">
<div style="left:0px;top:24px;width:64px;height:1176px;background:linear-gradient(#6b7376 0%,#73797b 23%,#767b7c 45%,#6f7273 57%,#5d6061 65%,#525556 70%,#55585a 79%,#5a5d5e 86%,#5a5d5e 100%);"></div>
<div style="left:0px;top:790px;width:64px;height:40px;background:linear-gradient(170deg,rgba(130,133,134,0) 30%,rgba(130,133,134,.35) 45%,rgba(130,133,134,0) 60%);"></div>
<div style="left:0px;top:1040px;width:64px;height:160px;overflow:hidden;">
<div style="left:-40px;top:19px;width:160px;height:190px;background:#4b4d4e;transform:rotate(-5deg);transform-origin:0 0;"></div>
<div style="left:-40px;top:17px;width:160px;height:2px;background:#6a6d6e;transform:rotate(-5deg);transform-origin:0 0;"></div>
<div style="left:-40px;top:33px;width:160px;height:11px;background:repeating-linear-gradient(90deg,#393b3c 0 4px,#505253 4px 7px);transform:rotate(-5deg);transform-origin:0 0;opacity:.85;"></div>
<div style="left:-40px;top:49px;width:160px;height:160px;background:repeating-linear-gradient(0deg,rgba(58,60,61,.45) 0 1.500px,rgba(80,83,84,.0) 1.500px 6px);transform:rotate(-4deg);transform-origin:0 0;"></div>
</div>
<div style="left:6px;top:30px;width:52px;height:52px;border-radius:5px;background:linear-gradient(160deg,#a3adb0,#8b979b);border:1px solid rgba(255,255,255,.25);box-shadow:0 0 0 1px rgba(40,40,40,.35);"></div>
<svg style="left:6px;top:30px" width="52" height="52" viewBox="0 0 52 52"><path d="M8 44C2 30 10 10 30 6C18 12 10 26 14 44z" fill="rgba(255,255,255,.13)"/><path d="M46 12C52 26 44 44 24 48C36 42 44 30 40 12z" fill="rgba(255,255,255,.10)"/><g transform="translate(0,0.3)"><circle cx="26" cy="26" r="14" fill="#fff"/><circle cx="26" cy="26" r="6.8" fill="none" stroke="#4a5052" stroke-width="3"/><circle cx="15.6" cy="26" r="2.2" fill="#4a5052"/><circle cx="31.2" cy="17" r="2.2" fill="#4a5052"/><circle cx="31.2" cy="35" r="2.2" fill="#4a5052"/></g></svg>
<div style="left:6px;top:89px;width:52px;height:52px;border-radius:5px;background:linear-gradient(160deg,#c07a4e,#a8633a);border:1px solid rgba(255,255,255,.25);box-shadow:0 0 0 1px rgba(40,40,40,.35);"></div>
<svg style="left:6px;top:89px" width="52" height="52" viewBox="0 0 52 52"><defs><radialGradient id="ffg" cx="40%" cy="30%"><stop offset="0" stop-color="#6ab8f0"/><stop offset="1" stop-color="#1a3c8c"/></radialGradient><linearGradient id="ffo" x1="1" y1="0" x2="0" y2="1"><stop offset="0" stop-color="#ffd43a"/><stop offset=".45" stop-color="#f58a1c"/><stop offset="1" stop-color="#d8430e"/></linearGradient></defs><circle cx="26" cy="27" r="20.500" fill="url(#ffo)"/><path d="M40 8L47 4L46 14z" fill="#ffd43a"/><circle cx="26" cy="22" r="13.500" fill="url(#ffg)"/><path d="M6 20C8 12 16 10 22 14C19 15 18 17 19 19C24 18 28 21 29 25C25 24 21 26 20 30C21 35 27 38 33 36C28 42 16 42 10 34C7 30 5 25 6 20z" fill="#f0701a"/><path d="M6 20C8 12 16 10 22 14C19 15 18 17 19 19C14 19 10 22 9 26C7 25 6 23 6 20z" fill="#e2560f"/><path d="M44 16C49 26 46 38 38 44C42 38 43 30 40 24C42 22 44 19 44 16z" fill="#ffc02e"/></svg>
<svg style="left:0px;top:111px" width="6" height="9" viewBox="0 0 6 9"><path d="M0 0L5.500 4.500L0 9z" fill="#e8e8e8"/></svg>
<div style="left:6px;top:148px;width:52px;height:52px;border-radius:5px;background:linear-gradient(135deg,rgba(255,255,255,.30),rgba(255,255,255,.10) 55%,rgba(255,255,255,.16));border:1px solid rgba(255,255,255,.22);box-shadow:0 0 0 1px rgba(40,40,40,.35);"></div>
<svg style="left:6px;top:148px" width="52" height="52" viewBox="0 0 52 52"><circle cx="26" cy="26" r="20" fill="#dc3e2f"/><path d="M26 26L8.7 16A20 20 0 0 0 26 46z" fill="#3aa757"/><path d="M26 26L26 46A20 20 0 0 0 43.3 16z" fill="#f9c91c"/><path d="M26 26L8.7 16A20 20 0 0 1 43.3 16z" fill="#dc3e2f"/><path d="M26 26L16 43.3A20 20 0 0 1 8.7 16z" fill="#3aa757"/><circle cx="26" cy="26" r="9.3" fill="#f4f4f4"/><circle cx="26" cy="26" r="7.4" fill="#4a87e0"/></svg>
<div style="left:6px;top:207px;width:52px;height:52px;border-radius:5px;background:linear-gradient(135deg,rgba(255,255,255,.30),rgba(255,255,255,.10) 55%,rgba(255,255,255,.16));border:1px solid rgba(255,255,255,.22);box-shadow:0 0 0 1px rgba(40,40,40,.35);"></div>
<svg style="left:6px;top:207px" width="52" height="52" viewBox="0 0 52 52"><rect x="3" y="3" width="46" height="46" rx="3" fill="#b3080c" stroke="#7d0003" stroke-width="1.5" stroke-dasharray="3 2"/><path d="M11 38L16 13H33L32 18H22L21 23H29L28 28H20L18 38z" fill="#fff"/><path d="M26 21H44L43.5 25L32 35H41L40 39H22L22.7 35L34 25H25z" fill="#fff"/></svg>
<div style="left:6px;top:266px;width:52px;height:52px;border-radius:5px;background:linear-gradient(135deg,rgba(255,255,255,.30),rgba(255,255,255,.10) 55%,rgba(255,255,255,.16));border:1px solid rgba(255,255,255,.22);box-shadow:0 0 0 1px rgba(40,40,40,.35);"></div>
<svg style="left:6px;top:266px" width="52" height="52" viewBox="0 0 52 52"><rect x="9" y="5" width="34" height="43" rx="2" fill="#9b9a97" stroke="#5d5c59"/><rect x="11" y="7" width="30" height="16" fill="#6a4a2a"/><rect x="12" y="10" width="28" height="4" fill="#f0a24e"/><rect x="12" y="15" width="28" height="4" fill="#f7c78e"/><rect x="11" y="20" width="30" height="4" fill="#c9c8c5"/><rect x="11" y="25" width="30" height="21" fill="#b9b8b5" stroke="#7d7c79"/><rect x="21" y="32" width="10" height="6" rx="1" fill="#eee" stroke="#555"/></svg>
<div style="left:6px;top:325px;width:52px;height:52px;border-radius:5px;background:linear-gradient(160deg,#4a7fb8,#2e639d);border:1px solid rgba(255,255,255,.25);box-shadow:0 0 0 1px rgba(40,40,40,.35);"></div>
<svg style="left:6px;top:325px" width="52" height="52" viewBox="0 0 52 52"><path d="M9 21C6 9 16 3 25 6C31 2 42 4 45 13C47 21 44 30 40 35C38.500 37 36 36 35.500 34L34.500 41C34 47 27 48 26 42.500L25 34C21 37 15 35 12.500 30C10.500 27 9.500 24 9 21z" fill="none" stroke="#111" stroke-width="5.500" stroke-linejoin="round"/><path d="M9 21C6 9 16 3 25 6C31 2 42 4 45 13C47 21 44 30 40 35C38.500 37 36 36 35.500 34L34.500 41C34 47 27 48 26 42.500L25 34C21 37 15 35 12.500 30C10.500 27 9.500 24 9 21z" fill="#336791" stroke="#fff" stroke-width="3.200" stroke-linejoin="round"/><path d="M24 7C27.500 14 27.500 25 25 34M33 8C37 15 37 27 35.500 34" stroke="#fff" stroke-width="1.600" fill="none"/><path d="M14 12C18 9 22 10 24 13" stroke="#fff" stroke-width="1.200" fill="none"/><circle cx="19" cy="17" r="1.400" fill="#fff"/><circle cx="38" cy="16" r="1.400" fill="#fff"/></svg>
<svg style="left:0px;top:347px" width="6" height="9" viewBox="0 0 6 9"><path d="M0 0L5.500 4.500L0 9z" fill="#e8e8e8"/></svg>
<div style="left:6px;top:384px;width:52px;height:52px;border-radius:5px;background:linear-gradient(135deg,rgba(255,255,255,.30),rgba(255,255,255,.10) 55%,rgba(255,255,255,.16));border:1px solid rgba(255,255,255,.22);box-shadow:0 0 0 1px rgba(40,40,40,.35);"></div>
<svg style="left:6px;top:384px" width="52" height="52" viewBox="0 0 52 52"><path d="M45 17C39 5 11 5 7 17C5 25 16 27.500 26 27.500" fill="none" stroke="#181818" stroke-width="8"/><path d="M7 35C13 47 41 47 45 35C47 27 36 24.500 26 24.500" fill="none" stroke="#181818" stroke-width="8"/><path d="M44 21C38 11 14 11 10 19" fill="none" stroke="#2aa0dc" stroke-width="2.200"/><path d="M8 31C14 41 38 41 42 33" fill="none" stroke="#2aa0dc" stroke-width="2.200"/><path d="M12 24C16 28 22 28.500 27 29M40 28C36 24 30 23.500 25 23" fill="none" stroke="#555" stroke-width="1"/></svg>
<div style="left:6px;top:443px;width:52px;height:52px;border-radius:5px;background:linear-gradient(135deg,rgba(255,255,255,.30),rgba(255,255,255,.10) 55%,rgba(255,255,255,.16));border:1px solid rgba(255,255,255,.22);box-shadow:0 0 0 1px rgba(40,40,40,.35);"></div>
<svg style="left:6px;top:443px" width="52" height="52" viewBox="0 0 52 52"><rect x="4" y="4" width="44" height="44" rx="2" fill="#fff" stroke="#2e86c1" stroke-width="2.400"/><path d="M15 11C21 9 27 13 30 20C33 26 38 29 40 33C37 32.500 34 33 32 35C31 31 27 29 24 25C21 22 20 16 15 11z" fill="#fff" stroke="#2a7fb5" stroke-width="1.400"/><path d="M20 23C18 26 19 29 21 31" fill="none" stroke="#2a7fb5" stroke-width="1.300"/></svg>
<div class="t" style="top:476.5px;line-height:6px;font-size:4.5px;color:#e48e00;font-weight:bold;left:15.5px;">MySQL</div>
<div class="t" style="top:480.5px;line-height:9px;font-size:6.7px;color:#1f78b4;font-weight:bold;left:14.5px;">Workbench</div>
<div style="left:6px;top:502px;width:52px;height:52px;border-radius:5px;background:linear-gradient(135deg,rgba(255,255,255,.30),rgba(255,255,255,.10) 55%,rgba(255,255,255,.16));border:1px solid rgba(255,255,255,.22);box-shadow:0 0 0 1px rgba(40,40,40,.35);"></div>
<svg style="left:6px;top:502px" width="52" height="52" viewBox="0 0 52 52"><ellipse cx="15.500" cy="19" rx="7.500" ry="13" fill="#e8e8e6" stroke="#8f8f8c" transform="rotate(20 15.500 19)"/><circle cx="16" cy="20" r="1.500" fill="#555"/><path d="M17 30L15 36H12V38H21V36H18.500L20 30z" fill="#e0e0de" stroke="#8f8f8c" stroke-width=".6"/><rect x="19.500" y="15.500" width="26" height="17" rx="1" fill="#f4f4f2" stroke="#8b8b88"/><rect x="21.500" y="17.500" width="22" height="13" fill="#2e62b8"/><path d="M21.500 30.500L34 17.500H43.500V30.500z" fill="#4a84d8"/><path d="M29 32.500H36L37 36H28z" fill="#d5d5d2"/><rect x="25" y="36" width="15" height="1.500" fill="#e5e5e2"/><path d="M14 41H44L47 46H11z" fill="#e8e8e5" stroke="#8f8f8c" stroke-width=".6"/><path d="M15 43H43" stroke="#9a9a97" stroke-width="1" stroke-dasharray="1.500 1"/></svg>
<div style="left:6px;top:561px;width:52px;height:52px;border-radius:5px;background:linear-gradient(135deg,rgba(255,255,255,.30),rgba(255,255,255,.10) 55%,rgba(255,255,255,.16));border:1px solid rgba(255,255,255,.22);box-shadow:0 0 0 1px rgba(40,40,40,.35);"></div>
<svg style="left:6px;top:561px" width="52" height="52" viewBox="0 0 52 52"><path d="M3 20H10L14 31L17.500 20H21.500L15.500 37H9.500z" fill="#94203e"/><path d="M3 20H10L11 22.500H4z" fill="#b84a66"/><path d="M21.500 20H26L20 37H15.500z" fill="#b9bdbf"/><path d="M25 20H30L37 37H31.500z" fill="#c9cdcf"/><path d="M28 20H31L38 37H35z" fill="#4c4f51"/><path d="M31 37L36.500 20H40.500L36 37z" fill="#5c5f61"/><path d="M38.500 20H43.500L50 37H44.500z" fill="#c4c8ca"/><path d="M41.500 20H44L50.500 37H48z" fill="#4c4f51"/><path d="M9.500 37H50.500V38.200H9.500z" fill="#2a2c2d"/></svg>
<div style="left:6px;top:620px;width:52px;height:52px;border-radius:5px;background:linear-gradient(135deg,rgba(255,255,255,.30),rgba(255,255,255,.10) 55%,rgba(255,255,255,.16));border:1px solid rgba(255,255,255,.22);box-shadow:0 0 0 1px rgba(40,40,40,.35);"></div>
<svg style="left:6px;top:620px" width="52" height="52" viewBox="0 0 52 52"><rect x="3" y="3" width="46" height="46" rx="3" fill="#f3f0e4" stroke="#222" stroke-width="1"/><path d="M3 6Q3 3 6 3H20L22 15L8 21L3 19z" fill="#cf3a34"/><path d="M20 3H46Q49 3 49 6V10L34 21L22 15z" fill="#2b55b8"/><path d="M22 15L34 21L49 10M34 21L36 36L49 42M36 36L26 49M36 36L18 31L8 21M18 31L12 49M8 21L3 19" stroke="#1a1a1a" stroke-width="1.6" fill="none"/></svg>
<div style="left:6px;top:679px;width:52px;height:52px;border-radius:5px;background:linear-gradient(135deg,rgba(255,255,255,.30),rgba(255,255,255,.10) 55%,rgba(255,255,255,.16));border:1px solid rgba(255,255,255,.22);box-shadow:0 0 0 1px rgba(40,40,40,.35);"></div>
<svg style="left:6px;top:679px" width="52" height="52" viewBox="0 0 52 52"><g fill="#1a1a1a"><ellipse cx="26" cy="13" rx="5" ry="5.5"/><path d="M21 18H31L34 30L31 36H21L18 30z"/><path d="M21 19L14 12L15 5L18 6L18 11L24 16zM31 19L38 12L37 5L34 6L34 11L28 16z"/><path d="M21 33L10 34L12 44L8 46L16 47L15 39L24 38zM31 33L42 34L40 44L44 46L36 47L37 39L28 38z"/></g><ellipse cx="26" cy="14.500" rx="2.6" ry="2.2" fill="#c9a27c"/><ellipse cx="26" cy="26" rx="3" ry="4" fill="#8a6a4a"/><ellipse cx="12" cy="46.500" rx="4" ry="1.4" fill="#c9a27c"/><ellipse cx="40" cy="46.500" rx="4" ry="1.4" fill="#c9a27c"/></svg>
<div style="left:6px;top:738px;width:52px;height:52px;border-radius:5px;background:linear-gradient(135deg,rgba(255,255,255,.30),rgba(255,255,255,.10) 55%,rgba(255,255,255,.16));border:1px solid rgba(255,255,255,.22);box-shadow:0 0 0 1px rgba(40,40,40,.35);"></div>
<svg style="left:6px;top:738px" width="52" height="52" viewBox="0 0 52 52"><defs><linearGradient id="shg" x1="0" y1="0" x2="1" y2="1"><stop offset="0" stop-color="#4da0ff"/><stop offset="1" stop-color="#0b46c8"/></linearGradient></defs><path d="M5 45C8 28 20 10 47 4C40 16 40 32 45 45z" fill="url(#shg)"/><path d="M5 45H45V48H5z" fill="#2f6fd8"/><path d="M5 44C15 41 35 41 45 44" stroke="#bfe0ff" stroke-width="1" fill="none" stroke-dasharray="1.5 1"/></svg>
<div style="left:6px;top:797px;width:52px;height:52px;border-radius:5px;background:linear-gradient(160deg,#4a80c4,#3a6cb0);border:1px solid rgba(255,255,255,.25);box-shadow:0 0 0 1px rgba(40,40,40,.35);"></div>
<svg style="left:6px;top:797px" width="52" height="52" viewBox="0 0 52 52"><defs><linearGradient id="tbg" x1="0" y1="0" x2="1" y2="1"><stop offset="0" stop-color="#7cc0f4"/><stop offset=".5" stop-color="#2f7fd6"/><stop offset="1" stop-color="#14337e"/></linearGradient></defs><path d="M6 22C6 10 18 3 29 5C41 7 49 18 46 30C44 39 37 46 27 47C33 42 35 36 33 30C31 22 24 18 16 19C12 19.500 8 21 6 22z" fill="url(#tbg)"/><path d="M7 26C5 32 8 40 14 44C12 40 12 36 14 33z" fill="#1a3c8c"/><path d="M27 47C22 48 17 46 14 44C20 44 26 42 30 38z" fill="#14337e"/><path d="M9 27L29 20L38 37L17 45z" fill="#f6f3ec" stroke="#c4bfb2" stroke-width=".8"/><path d="M9 27L25 33L29 20M25 33L17 45" stroke="#cdc8bb" stroke-width=".9" fill="none"/><path d="M13 13C17 9 24 9 28 13C31 16 30 20 27 21C25 18 21 17 17 18L11 24C10 20 11 16 13 13z" fill="#5aa8ee"/><path d="M11 24L17 18L19 20z" fill="#dfe6ee"/><circle cx="19.500" cy="14.500" r="1" fill="#a03818"/></svg>
<svg style="left:0px;top:819px" width="6" height="9" viewBox="0 0 6 9"><path d="M0 0L5.500 4.500L0 9z" fill="#e8e8e8"/></svg>
<div style="left:6px;top:856px;width:52px;height:52px;border-radius:5px;background:linear-gradient(160deg,#d9d9d8,#bfbfbe);border:1px solid rgba(255,255,255,.25);box-shadow:0 0 0 1px rgba(40,40,40,.35);"></div>
<svg style="left:6px;top:856px" width="52" height="52" viewBox="0 0 52 52"><rect x="7" y="12" width="38" height="29" fill="#1d1d1d" stroke="#888" stroke-width="1.2"/><path d="M13 19L19 22.500L13 26" stroke="#fff" stroke-width="2.2" fill="none"/><rect x="20" y="28" width="8" height="2.2" fill="#fff"/></svg>
<svg style="left:0px;top:878px" width="6" height="9" viewBox="0 0 6 9"><path d="M0.500 0.500L5 4.500L0.500 8.500z" fill="none" stroke="#e8e8e8"/></svg>
<div style="left:6px;top:915px;width:52px;height:52px;border-radius:5px;background:linear-gradient(160deg,#3c66c8,#2a4fb0);border:1px solid rgba(255,255,255,.25);box-shadow:0 0 0 1px rgba(40,40,40,.35);"></div>
<svg style="left:6px;top:915px" width="52" height="52" viewBox="0 0 52 52"><defs><radialGradient id="osg" cx="40%" cy="30%"><stop offset="0" stop-color="#5a8cf0"/><stop offset="1" stop-color="#1c3fae"/></radialGradient></defs><circle cx="26" cy="26" r="22" fill="url(#osg)"/><rect x="10" y="11" width="22" height="13" fill="#0a0a0a" stroke="#777" stroke-width="1"/><path d="M32 17H37V30M21 24V34" stroke="#999" stroke-width="1.2" fill="none"/><rect x="8" y="33" width="36" height="2.6" fill="#e6e34a"/><path d="M29 28L29 40L37 34zM45 28L45 40L37 34z" fill="#f3efb0" stroke="#8a8740" stroke-width=".6"/></svg>
<div class="t" style="top:927.0px;line-height:11px;font-size:8px;color:#35e635;font-weight:bold;left:18.5px;">10.95</div>
<svg style="left:0px;top:937px" width="6" height="9" viewBox="0 0 6 9"><path d="M0.500 0.500L5 4.500L0.500 8.500z" fill="none" stroke="#e8e8e8"/></svg>
<svg style="left:59px;top:937px" width="6" height="9" viewBox="0 0 6 9"><path d="M5.500 0L0 4.500L5.500 9z" fill="#e8e8e8"/></svg>
<div style="left:6px;top:974px;width:52px;height:52px;border-radius:5px;background:linear-gradient(135deg,rgba(255,255,255,.30),rgba(255,255,255,.10) 55%,rgba(255,255,255,.16));border:1px solid rgba(255,255,255,.22);box-shadow:0 0 0 1px rgba(40,40,40,.35);"></div>
<div style="left:7px;top:975px;width:25px;height:25px;background:linear-gradient(#4f3f46,#6a5a60);border-radius:4px 0 0 0;"></div>
<div style="left:32px;top:975px;width:1px;height:50px;background:rgba(255,255,255,.35);"></div>
<div style="left:7px;top:1000px;width:50px;height:1px;background:rgba(255,255,255,.35);"></div>
<svg style="left:6px;top:974px" width="52" height="52" viewBox="0 0 52 52"><rect x="8.500" y="8.500" width="9" height="7" fill="none" stroke="#b9b0b4" stroke-width="1.2"/><rect x="11.500" y="11.500" width="10" height="8" fill="#4f3f46" stroke="#fff" stroke-width="1.6"/></svg>
<div style="left:6px;top:1141px;width:52px;height:52px;border-radius:5px;background:linear-gradient(135deg,rgba(255,255,255,.30),rgba(255,255,255,.10) 55%,rgba(255,255,255,.16));border:1px solid rgba(255,255,255,.22);box-shadow:0 0 0 1px rgba(40,40,40,.35);"></div>
<svg style="left:6px;top:1141px" width="52" height="52" viewBox="0 0 52 52"><path d="M9 11L14 45C18 49 34 49 38 45L43 11z" fill="rgba(200,200,200,.35)" stroke="rgba(235,235,235,.7)" stroke-width="1"/><ellipse cx="26" cy="10" rx="17.500" ry="4.500" fill="rgba(120,120,120,.5)" stroke="#e9e9e9" stroke-width="2.2"/><ellipse cx="26" cy="45" rx="11" ry="2.500" fill="rgba(235,235,235,.55)"/></svg>
<div style="left:64px;top:24px;width:1856px;height:1176px;background:#f2f1f0;"></div>
<svg style="left:67px;top:38px" width="5" height="12" viewBox="0 0 5 12"><path d="M0 1H4M0 5H4M0 9H4" stroke="#b5b4b1" stroke-width="1"/></svg>
<svg style="left:641px;top:38px" width="5" height="12" viewBox="0 0 5 12"><path d="M0 1H4M0 5H4M0 9H4" stroke="#b5b4b1" stroke-width="1"/></svg>
<div style="left:154px;top:32px;width:1px;height:24px;background:#d3d2cf;"></div>
<div style="left:273px;top:32px;width:1px;height:24px;background:#d3d2cf;"></div>
<div style="left:356px;top:32px;width:1px;height:24px;background:#d3d2cf;"></div>
<div style="left:474px;top:32px;width:1px;height:24px;background:#d3d2cf;"></div>
<div style="left:593px;top:32px;width:1px;height:24px;background:#d3d2cf;"></div>
<svg style="left:81px;top:31px" width="26" height="26" viewBox="0 0 26 26"><path d="M5 12V21C5 24 21 24 21 21V12z" fill="#3f8fd0"/><ellipse cx="13" cy="21" rx="8" ry="3" fill="#2f78b8"/><path d="M5 15C5 18 21 18 21 15M5 18C5 21 21 21 21 18" stroke="#9fd0f0" stroke-width="1" fill="none"/><ellipse cx="13" cy="12" rx="8" ry="3" fill="#7fc0ea" stroke="#2f78b8" stroke-width=".6"/><path d="M13 1L20 10H16V17H10V10H6z" fill="#4a28b8" stroke="#2a1480" stroke-width=".7"/></svg>
<svg style="left:117px;top:31px" width="26" height="26" viewBox="0 0 26 26"><path d="M5 12V21C5 24 21 24 21 21V12z" fill="#3f8fd0"/><ellipse cx="13" cy="21" rx="8" ry="3" fill="#2f78b8"/><path d="M5 15C5 18 21 18 21 15M5 18C5 21 21 21 21 18" stroke="#9fd0f0" stroke-width="1" fill="none"/><ellipse cx="13" cy="12" rx="8" ry="3" fill="#7fc0ea" stroke="#2f78b8" stroke-width=".6"/><path d="M13 17L20 8H16V1H10V8H6z" fill="#1fc84a" stroke="#0c8a2a" stroke-width=".7"/></svg>
<svg style="left:164px;top:31px" width="26" height="26" viewBox="0 0 26 26"><circle cx="13" cy="13" r="11" fill="#1c54c0"/><circle cx="13" cy="13" r="9.600" fill="#2e7af0"/><ellipse cx="13" cy="8" rx="7.500" ry="4.500" fill="rgba(255,255,255,.28)"/><path d="M13 5.500L6.500 12.500H10.800V20H15.200V12.500H19.500z" fill="#fff"/></svg>
<svg style="left:200px;top:31px" width="26" height="26" viewBox="0 0 26 26"><circle cx="13" cy="13" r="11" fill="#1c54c0"/><circle cx="13" cy="13" r="9.600" fill="#2e7af0"/><ellipse cx="13" cy="8" rx="7.500" ry="4.500" fill="rgba(255,255,255,.28)"/><path d="M5.500 13L12.500 6.500V10.800H20V15.200H12.500V19.500z" fill="#fff"/></svg>
<svg style="left:236px;top:31px" width="26" height="26" viewBox="0 0 26 26"><circle cx="13" cy="13" r="11" fill="#a9a9a9"/><circle cx="13" cy="13" r="9.600" fill="#c4c4c4"/><ellipse cx="13" cy="8" rx="7.500" ry="4.500" fill="rgba(255,255,255,.28)"/><path d="M20.500 13L13.500 6.500V10.800H6V15.200H13.500V19.500z" fill="#fff"/></svg>
<svg style="left:284px;top:31px" width="26" height="26" viewBox="0 0 26 26"><rect x="3" y="2" width="15" height="21" fill="#fff" stroke="#c9c8c5"/><path d="M3 6H18M3 10H18M3 18H18" stroke="#c9c8c5"/><rect x="3" y="11" width="15" height="4" fill="#7a7a7a"/><path d="M15 9V24M8 17H23" stroke="#8a8a8a" stroke-width="2.200"/></svg>
<svg style="left:320px;top:31px" width="26" height="26" viewBox="0 0 26 26"><rect x="3" y="2" width="15" height="21" fill="#fff" stroke="#c9c8c5"/><path d="M3 6H18M3 10H18M3 18H18" stroke="#c9c8c5"/><rect x="3" y="11" width="15" height="4" fill="#1414d8"/><path d="M9 12L22 24M22 12L9 24" stroke="#e01010" stroke-width="2"/></svg>
<svg style="left:365px;top:31px" width="26" height="26" viewBox="0 0 26 26"><path d="M3.500 3.500H11L14.500 7V17.500H3.500z" fill="#f4f4f6" stroke="#c9c9cf" stroke-width="1.2"/><path d="M11 3.500V7H14.500" fill="#dcdce2" stroke="#c9c9cf" stroke-width=".8"/><path d="M10.500 9.500H18L21.500 13V23.500H10.500z" fill="#fafafc" stroke="#c4c4cb" stroke-width="1.2"/><path d="M18 9.500V13H21.500" fill="#dcdce2" stroke="#c4c4cb" stroke-width=".8"/></svg>
<svg style="left:402px;top:31px" width="26" height="26" viewBox="0 0 26 26"><path d="M15 2L10 15M19 4L9 14" stroke="#c4c4cc" stroke-width="2.600" stroke-linecap="round" fill="none"/><path d="M15 2L10 15M19 4L9 14" stroke="#e9e9ef" stroke-width="1" fill="none"/><circle cx="7" cy="15.500" r="3" fill="none" stroke="#f0a018" stroke-width="2.600"/><circle cx="12.500" cy="20" r="3" fill="none" stroke="#f0a018" stroke-width="2.600"/></svg>
<svg style="left:438px;top:31px" width="26" height="26" viewBox="0 0 26 26"><rect x="3.500" y="4.500" width="14" height="16" rx="1.500" fill="#d0d0d2" stroke="#bcbcc0"/><path d="M7.500 4.500C7.500 1.500 13.500 1.500 13.500 4.500z" fill="#e2e2e4" stroke="#b9b9bd" stroke-width=".9"/><path d="M10.500 10.500H18L21.500 14V23.500H10.500z" fill="#fafafc" stroke="#c9c9cf" stroke-width="1.1"/><path d="M18 10.500V14H21.500" fill="#dcdce2" stroke="#c9c9cf" stroke-width=".8"/></svg>
<svg style="left:485px;top:31px" width="26" height="26" viewBox="0 0 26 26"><path d="M4 11C5 5 13 3 18 7L20 4.500V11.500H13L15.500 9C12 6.500 8 8 7 11.500z" fill="#8fe08a" stroke="#2f9a3a" stroke-width="1.100"/><path d="M22 15C21 21 13 23 8 19L6 21.500V14.500H13L10.500 17C14 19.500 18 18 19 14.500z" fill="#8fe08a" stroke="#2f9a3a" stroke-width="1.100"/></svg>
<svg style="left:521px;top:31px" width="26" height="26" viewBox="0 0 26 26"><circle cx="13" cy="13" r="11" fill="#1c54c0"/><circle cx="13" cy="13" r="9.600" fill="#2e7af0"/><ellipse cx="13" cy="8" rx="7.500" ry="4.500" fill="rgba(255,255,255,.28)"/><path d="M10 7L19 13L10 19z" fill="#fff"/></svg>
<svg style="left:556px;top:31px" width="26" height="26" viewBox="0 0 26 26"><circle cx="13" cy="13" r="11" fill="#b5b5b5"/><circle cx="13" cy="13" r="9.600" fill="#cfcfcf"/><ellipse cx="13" cy="8" rx="7.500" ry="4.500" fill="rgba(255,255,255,.28)"/><path d="M8.500 8.500L17.500 17.500M17.500 8.500L8.500 17.500" stroke="#fff" stroke-width="3"/></svg>
<svg style="left:604px;top:31px" width="26" height="26" viewBox="0 0 26 26"><path d="M2 5L8 3L14 21L9 22z" fill="#e4e4e6" stroke="#c2c2c6" stroke-width=".9"/><path d="M8 3L14 21L18 8L13 2z" fill="#f6f6f8" stroke="#c9c9cd" stroke-width=".9"/><path d="M18 8L14 21L21 23.500L24 19L20 6z" fill="#dcdcdf" stroke="#bdbdc1" stroke-width=".9"/></svg>
<svg style="left:653px;top:31px" width="26" height="26" viewBox="0 0 26 26"><circle cx="13" cy="13" r="11.500" fill="#3a5ec0"/><circle cx="13" cy="13" r="11.500" fill="none" stroke="#24408f"/><rect x="5" y="6" width="12" height="6" fill="#0c0c0c" stroke="#666" stroke-width=".6"/><rect x="6.500" y="7.500" width="5" height="2.500" fill="#3ae03a"/><path d="M3 18H23" stroke="#e0dc40" stroke-width="1.600"/><path d="M11 15.500L11 20.500L15 18zM19 15.500L19 20.500L15 18z" fill="#f3efb0" stroke="#777" stroke-width=".4"/><circle cx="6.500" cy="19.500" r="5.200" fill="#c8d860" stroke="#7d8a2a" stroke-width=".7"/><path d="M6.500 19.500V15.500M6.500 19.500L3.500 23M6.500 19.500L9.500 22" stroke="#111" stroke-width="1.300"/><path d="M21 3L11 15L9 19L13 17L23 5z" fill="#d9b070" stroke="#7a5a2a" stroke-width=".8"/></svg>
<svg style="left:689px;top:31px" width="26" height="26" viewBox="0 0 26 26"><circle cx="13" cy="13" r="11.500" fill="#3a5ec0"/><circle cx="13" cy="13" r="11.500" fill="none" stroke="#24408f"/><rect x="5" y="6" width="12" height="6" fill="#0c0c0c" stroke="#666" stroke-width=".6"/><rect x="6.500" y="7.500" width="5" height="2.500" fill="#3ae03a"/><path d="M3 18H23" stroke="#e0dc40" stroke-width="1.600"/><path d="M11 15.500L11 20.500L15 18zM19 15.500L19 20.500L15 18z" fill="#f3efb0" stroke="#777" stroke-width=".4"/><circle cx="6.500" cy="19.500" r="5.200" fill="#c8d860" stroke="#7d8a2a" stroke-width=".7"/><path d="M6.500 19.500V15.500M6.500 19.500L3.500 23M6.500 19.500L9.500 22" stroke="#111" stroke-width="1.300"/><path d="M14 6L22 16M12 9L17 5L21 7" stroke="#b9b9b9" stroke-width="2.400" fill="none"/><path d="M18 12L23 18" stroke="#8a8a8a" stroke-width="3"/></svg>
<div style="left:68px;top:67px;width:153px;height:1074px;background:#fff;border:1px solid #b3b2af;"></div>
<div style="left:69px;top:68px;width:139px;height:24px;background:linear-gradient(#ffffff,#f0efee);border-bottom:1px solid #b9b8b5;"></div>
<div class="t" style="top:71.5px;line-height:20px;font-size:14.5px;color:#3c3c3c;letter-spacing:-0.625px;left:73px;">Имя</div>
<div style="left:69px;top:911px;width:139px;height:19px;background:#e3e2e0;"></div>
<div style="left:152px;top:93px;width:56px;height:1033px;overflow:hidden;">
<div class="t" style="left:0.6px;top:0px;font-size:14.6px;line-height:20px;color:#2e2e2e;letter-spacing:0.12px">Куйбышева</div>
<div class="t" style="left:0.6px;top:19px;font-size:14.6px;line-height:20px;color:#2e2e2e;letter-spacing:0.12px">Куйбышева</div>
<div class="t" style="left:0.6px;top:38px;font-size:14.6px;line-height:20px;color:#2e2e2e;letter-spacing:0.12px">Куйбышева</div>
<div class="t" style="left:0.6px;top:57px;font-size:14.6px;line-height:20px;color:#2e2e2e;letter-spacing:0.12px">Малая Посадская</div>
<div class="t" style="left:0.6px;top:76px;font-size:14.6px;line-height:20px;color:#2e2e2e;letter-spacing:0.12px">Малая Посадская</div>
<div class="t" style="left:0.6px;top:95px;font-size:14.6px;line-height:20px;color:#2e2e2e;letter-spacing:0.12px">Малая Посадская</div>
<div class="t" style="left:0.6px;top:114px;font-size:14.6px;line-height:20px;color:#2e2e2e;letter-spacing:0.12px">Малая Посадская</div>
<div class="t" style="left:0.6px;top:133px;font-size:14.6px;line-height:20px;color:#2e2e2e;letter-spacing:0.12px">Плуталова</div>
<div class="t" style="left:0.6px;top:152px;font-size:14.6px;line-height:20px;color:#2e2e2e;letter-spacing:0.12px">Плуталова</div>
<div class="t" style="left:0.6px;top:171px;font-size:14.6px;line-height:20px;color:#2e2e2e;letter-spacing:0.12px">Шамшева</div>
<div class="t" style="left:0.6px;top:190px;font-size:14.6px;line-height:20px;color:#2e2e2e;letter-spacing:0.12px">Шамшева</div>
<div class="t" style="left:0.6px;top:209px;font-size:14.6px;line-height:20px;color:#2e2e2e;letter-spacing:0.12px">Гатчинская</div>
<div class="t" style="left:0.6px;top:228px;font-size:14.6px;line-height:20px;color:#2e2e2e;letter-spacing:0.12px">Гатчинская</div>
<div class="t" style="left:0.6px;top:247px;font-size:14.6px;line-height:20px;color:#2e2e2e;letter-spacing:0.12px">Большой пр.</div>
<div class="t" style="left:0.6px;top:266px;font-size:14.6px;line-height:20px;color:#2e2e2e;letter-spacing:0.12px">Большой пр.</div>
<div class="t" style="left:0.6px;top:285px;font-size:14.6px;line-height:20px;color:#2e2e2e;letter-spacing:0.12px">Большая Зел</div>
<div class="t" style="left:0.6px;top:304px;font-size:14.6px;line-height:20px;color:#2e2e2e;letter-spacing:0.12px">Большая Зел</div>
<div class="t" style="left:0.6px;top:323px;font-size:14.6px;line-height:20px;color:#2e2e2e;letter-spacing:0.12px">Стрельнинская</div>
<div class="t" style="left:0.6px;top:342px;font-size:14.6px;line-height:20px;color:#2e2e2e;letter-spacing:0.12px">Стрельнинская</div>
<div class="t" style="left:0.6px;top:361px;font-size:14.6px;line-height:20px;color:#2e2e2e;letter-spacing:0.12px">Большая Зел</div>
<div class="t" style="left:0.6px;top:380px;font-size:14.6px;line-height:20px;color:#2e2e2e;letter-spacing:0.12px">Большая Зел</div>
<div class="t" style="left:0.6px;top:399px;font-size:14.6px;line-height:20px;color:#2e2e2e;letter-spacing:0.12px">Газовая, 10</div>
<div class="t" style="left:0.6px;top:418px;font-size:14.6px;line-height:20px;color:#2e2e2e;letter-spacing:0.12px">Газовая, 10</div>
<div class="t" style="left:0.6px;top:437px;font-size:14.6px;line-height:20px;color:#2e2e2e;letter-spacing:0.12px">Лахтинская</div>
<div class="t" style="left:0.6px;top:456px;font-size:14.6px;line-height:20px;color:#2e2e2e;letter-spacing:0.12px">Лахтинская</div>
<div class="t" style="left:0.6px;top:475px;font-size:14.6px;line-height:20px;color:#2e2e2e;letter-spacing:0.12px">Добролюбова</div>
<div class="t" style="left:0.6px;top:494px;font-size:14.6px;line-height:20px;color:#2e2e2e;letter-spacing:0.12px">Добролюбова</div>
<div class="t" style="left:0.6px;top:513px;font-size:14.6px;line-height:20px;color:#2e2e2e;letter-spacing:0.12px">Добролюбова</div>
<div class="t" style="left:0.6px;top:532px;font-size:14.6px;line-height:20px;color:#2e2e2e;letter-spacing:0.12px">Добролюбова</div>
<div class="t" style="left:0.6px;top:551px;font-size:14.6px;line-height:20px;color:#2e2e2e;letter-spacing:0.12px">Блохина, 20</div>
<div class="t" style="left:0.6px;top:570px;font-size:14.6px;line-height:20px;color:#2e2e2e;letter-spacing:0.12px">Блохина, 20</div>
<div class="t" style="left:0.6px;top:589px;font-size:14.6px;line-height:20px;color:#2e2e2e;letter-spacing:0.12px">Добролюбова</div>
<div class="t" style="left:0.6px;top:608px;font-size:14.6px;line-height:20px;color:#2e2e2e;letter-spacing:0.12px">Добролюбова</div>
<div class="t" style="left:0.6px;top:627px;font-size:14.6px;line-height:20px;color:#2e2e2e;letter-spacing:0.12px">Вяземский</div>
<div class="t" style="left:0.6px;top:646px;font-size:14.6px;line-height:20px;color:#2e2e2e;letter-spacing:0.12px">Вяземский</div>
<div class="t" style="left:0.6px;top:665px;font-size:14.6px;line-height:20px;color:#2e2e2e;letter-spacing:0.12px">Мира, 32</div>
<div class="t" style="left:0.6px;top:684px;font-size:14.6px;line-height:20px;color:#2e2e2e;letter-spacing:0.12px">Мира, 32</div>
<div class="t" style="left:0.6px;top:703px;font-size:14.6px;line-height:20px;color:#2e2e2e;letter-spacing:0.12px">Большая Зел</div>
<div class="t" style="left:0.6px;top:722px;font-size:14.6px;line-height:20px;color:#2e2e2e;letter-spacing:0.12px">Большая Зел</div>
<div class="t" style="left:0.6px;top:741px;font-size:14.6px;line-height:20px;color:#2e2e2e;letter-spacing:0.12px">Воскова, 15</div>
<div class="t" style="left:0.6px;top:760px;font-size:14.6px;line-height:20px;color:#2e2e2e;letter-spacing:0.12px">Воскова, 15</div>
<div class="t" style="left:0.6px;top:779px;font-size:14.6px;line-height:20px;color:#2e2e2e;letter-spacing:0.12px">Всеволода</div>
<div class="t" style="left:0.6px;top:798px;font-size:14.6px;line-height:20px;color:#2e2e2e;letter-spacing:0.12px">Всеволода</div>
<div class="t" style="left:0.6px;top:817px;font-size:14.6px;line-height:20px;color:#2e2e2e;letter-spacing:0.12px">Даля, 4, к</div>
<div class="t" style="left:0.6px;top:836px;font-size:14.6px;line-height:20px;color:#2e2e2e;letter-spacing:0.12px">Даля, 4, к</div>
<div class="t" style="left:0.6px;top:855px;font-size:14.6px;line-height:20px;color:#2e2e2e;letter-spacing:0.12px">Каменноостр</div>
<div class="t" style="left:0.6px;top:874px;font-size:14.6px;line-height:20px;color:#2e2e2e;letter-spacing:0.12px">Каменноостр</div>
<div class="t" style="left:0.6px;top:893px;font-size:14.6px;line-height:20px;color:#2e2e2e;letter-spacing:0.12px">Большая Зел</div>
<div class="t" style="left:0.6px;top:912px;font-size:14.6px;line-height:20px;color:#2e2e2e;letter-spacing:0.12px">Большая Зел</div>
<div class="t" style="left:0.6px;top:931px;font-size:14.6px;line-height:20px;color:#2e2e2e;letter-spacing:0.12px">Пионерская</div>
<div class="t" style="left:0.6px;top:950px;font-size:14.6px;line-height:20px;color:#2e2e2e;letter-spacing:0.12px">Пионерская</div>
<div class="t" style="left:0.6px;top:969px;font-size:14.6px;line-height:20px;color:#2e2e2e;letter-spacing:0.12px">Офицерский</div>
<div class="t" style="left:0.6px;top:988px;font-size:14.6px;line-height:20px;color:#2e2e2e;letter-spacing:0.12px">Офицерский</div>
<div class="t" style="left:0.6px;top:1007px;font-size:14.6px;line-height:20px;color:#2e2e2e;letter-spacing:0.12px">Петропавл</div>
<div class="t" style="left:0.6px;top:1026px;font-size:14.6px;line-height:20px;color:#2e2e2e;letter-spacing:0.12px">Петропавл</div>
</div>
<div style="left:208px;top:68px;width:12px;height:1059px;background:linear-gradient(90deg,#cfcecc,#dddcda 40%,#e3e2e0);border-radius:6px;border:1px solid #b9b8b5;"></div>
<svg style="left:211.0px;top:73px" width="6" height="4" viewBox="0 0 6 4"><path d="M0 4L3 0L6 4z" fill="#6f6e6a"/></svg>
<svg style="left:211.0px;top:1118px" width="6" height="4" viewBox="0 0 6 4"><path d="M0 0L3 4L6 0z" fill="#6f6e6a"/></svg>
<div style="left:208px;top:286px;width:12px;height:276px;background:linear-gradient(90deg,#f8f8f7,#ecebe9);border-radius:6px;border:1px solid #a3a29f;"></div>
<svg style="left:211.5px;top:421.0px" width="5" height="7" viewBox="0 0 5 7"><path d="M0 .5H5M0 3.500H5M0 6.500H5" stroke="#8d8c88" stroke-width="1"/></svg>
<div style="left:69.5px;top:1127px;width:137.5px;height:13px;background:linear-gradient(#d6d5d3,#e3e2e0);border-radius:6.5px;border:1px solid #b9b8b5;"></div>
<div style="left:82px;top:1127px;width:33px;height:13px;background:linear-gradient(#f8f8f7,#ecebe9);border-radius:6.5px;border:1px solid #a3a29f;"></div>
<svg style="left:95px;top:1130.5px" width="8" height="6" viewBox="0 0 8 6"><path d="M1 0V6M4 0V6M7 0V6" stroke="#8d8c88" stroke-width="1"/></svg>
<svg style="left:75px;top:1131px" width="3" height="5" viewBox="0 0 3 5"><path d="M3 0L0 2.5L3 5z" fill="#8f8e8a"/></svg>
<svg style="left:198.5px;top:1130.5px" width="4" height="6" viewBox="0 0 4 6"><path d="M0 0L4 3L0 6z" fill="#3c3c3c"/></svg>
<div style="left:69px;top:1148px;width:152px;height:25px;background:#fff;border:1px solid #b5b3ae;border-radius:3px;"></div>
<svg style="left:223px;top:617px" width="3" height="9" viewBox="0 0 3 9"><path d="M0 1H3M0 4H3M0 7H3" stroke="#aaa" stroke-width="1"/></svg>
<div style="left:228px;top:68px;width:1689px;height:1106px;border:1px solid #c4c3c0;border-radius:2px;"></div>
<div class="t" style="top:76.5px;line-height:26px;font-size:18.5px;color:#3c3c3c;letter-spacing:-0.240px;font-weight:bold;font-style:italic;left:924px;">Узел: Даля, 4, корп. 2, лит. Б (Тек.)</div>
<div style="left:238px;top:136px;width:1667px;height:1026px;border:1px solid #b9b8b5;background:#f2f1f0;"></div>
<div style="left:239px;top:110px;width:47px;height:26px;background:linear-gradient(#f5f5f4,#dfdedc);border:1px solid #b9b8b5;border-bottom:none;border-radius:5px 5px 0 0;"></div>
<div style="left:357px;top:110px;width:57px;height:26px;background:linear-gradient(#f5f5f4,#dfdedc);border:1px solid #b9b8b5;border-bottom:none;border-radius:5px 5px 0 0;"></div>
<div style="left:286px;top:106px;width:71px;height:31px;background:linear-gradient(#fbfbfa,#f2f1f0);border:1px solid #b9b8b5;border-bottom:none;border-radius:5px 5px 0 0;"></div>
<div class="t" style="top:112.0px;line-height:20px;font-size:14.6px;color:#3c3c3c;letter-spacing:0.439px;left:245.5px;">Узел</div>
<div class="t" style="top:111.0px;line-height:20px;font-size:14.6px;color:#3c3c3c;letter-spacing:0.444px;left:293.5px;">Данные</div>
<div class="t" style="top:112.0px;line-height:20px;font-size:14.6px;color:#3c3c3c;letter-spacing:0.020px;left:365px;">Связи</div>
<div style="left:240px;top:138px;width:1651px;height:1023px;border:1px solid #dad9d6;border-right:none;border-bottom:none;"></div>
<div style="left:1891px;top:139px;width:12px;height:1021px;background:linear-gradient(90deg,#cfcecc,#dddcda 40%,#e3e2e0);border-radius:6px;border:1px solid #b9b8b5;"></div>
<svg style="left:1894.0px;top:144px" width="6" height="4" viewBox="0 0 6 4"><path d="M0 4L3 0L6 4z" fill="#6f6e6a"/></svg>
<svg style="left:1894.0px;top:1151px" width="6" height="4" viewBox="0 0 6 4"><path d="M0 0L3 4L6 0z" fill="#6f6e6a"/></svg>
<div style="left:1891px;top:151px;width:12px;height:743px;background:linear-gradient(90deg,#f8f8f7,#ecebe9);border-radius:6px;border:1px solid #a3a29f;"></div>
<svg style="left:1894.5px;top:519.5px" width="5" height="7" viewBox="0 0 5 7"><path d="M0 .5H5M0 3.500H5M0 6.500H5" stroke="#8d8c88" stroke-width="1"/></svg>
<div class="t" style="top:146.0px;line-height:20px;font-size:14px;color:#3c3c3c;left:250.5px;">IO:</div>
<div style="left:251px;top:168px;width:1630px;height:502px;background:#fff;border:2px solid #ee8a64;border-radius:3px;"></div>
<div style="left:253px;top:170px;width:1613px;height:23.5px;background:linear-gradient(#fcfcfb,#efeeed);"></div>
<div style="left:991px;top:170px;width:875px;height:23.5px;background:#f0efee;"></div>
<div style="left:253px;top:170px;width:33px;height:498px;background:linear-gradient(90deg,#f9f9f8,#efeeed);"></div>
<div style="left:285px;top:170px;width:1px;height:498px;background:#c9c8c6;"></div>
<div style="left:341px;top:170px;width:1px;height:498px;background:#c9c8c6;"></div>
<div style="left:796px;top:170px;width:1px;height:498px;background:#c9c8c6;"></div>
<div style="left:857px;top:170px;width:1px;height:498px;background:#c9c8c6;"></div>
<div style="left:913px;top:170px;width:1px;height:498px;background:#c9c8c6;"></div>
<div style="left:990px;top:170px;width:1px;height:498px;background:#c9c8c6;"></div>
<div style="left:253px;top:193px;width:738px;height:1px;background:#c9c8c6;"></div>
<div style="left:253px;top:218px;width:738px;height:1px;background:#c9c8c6;"></div>
<div style="left:253px;top:243px;width:738px;height:1px;background:#c9c8c6;"></div>
<div style="left:253px;top:268px;width:738px;height:1px;background:#c9c8c6;"></div>
<div style="left:253px;top:293px;width:738px;height:1px;background:#c9c8c6;"></div>
<div style="left:253px;top:318px;width:738px;height:1px;background:#c9c8c6;"></div>
<div style="left:253px;top:343px;width:738px;height:1px;background:#c9c8c6;"></div>
<div style="left:253px;top:368px;width:738px;height:1px;background:#c9c8c6;"></div>
<div style="left:253px;top:393px;width:738px;height:1px;background:#c9c8c6;"></div>
<div style="left:253px;top:418px;width:738px;height:1px;background:#c9c8c6;"></div>
<div style="left:253px;top:443px;width:738px;height:1px;background:#c9c8c6;"></div>
<div style="left:253px;top:468px;width:738px;height:1px;background:#c9c8c6;"></div>
<div style="left:253px;top:493px;width:738px;height:1px;background:#c9c8c6;"></div>
<div style="left:253px;top:518px;width:738px;height:1px;background:#c9c8c6;"></div>
<div style="left:253px;top:543px;width:738px;height:1px;background:#c9c8c6;"></div>
<div style="left:253px;top:568px;width:738px;height:1px;background:#c9c8c6;"></div>
<div style="left:253px;top:593px;width:738px;height:1px;background:#c9c8c6;"></div>
<div style="left:253px;top:618px;width:738px;height:1px;background:#c9c8c6;"></div>
<div style="left:253px;top:643px;width:738px;height:1px;background:#c9c8c6;"></div>
<div style="left:253px;top:668px;width:738px;height:1px;background:#c9c8c6;"></div>
<div class="t" style="top:172.0px;line-height:20px;font-size:14.6px;color:#3c3c3c;left:-186.19999999999982px;width:1000px;text-align:center;">Id</div>
<div class="t" style="top:172.0px;line-height:20px;font-size:14.6px;color:#3c3c3c;left:69px;width:1000px;text-align:center;">Имя</div>
<div class="t" style="top:172.0px;line-height:20px;font-size:14.6px;color:#3c3c3c;left:327.4000000000001px;width:1000px;text-align:center;">Тип</div>
<div class="t" style="top:172.0px;line-height:20px;font-size:14.6px;color:#3c3c3c;left:386px;width:1000px;text-align:center;">Связь</div>
<div class="t" style="top:172.0px;line-height:20px;font-size:14.6px;color:#3c3c3c;left:451.5px;width:1000px;text-align:center;">Значение</div>
<div class="t" style="top:196.5px;line-height:20px;font-size:14.6px;color:#3c3c3c;left:257.5px;">1</div>
<div class="t" style="top:195.5px;line-height:20px;font-size:14.6px;color:#2e2e2e;left:287px;">R1w</div>
<div class="t" style="top:195.5px;line-height:20px;font-size:14.6px;color:#2e2e2e;left:343px;letter-spacing:0.04px;">Время изменения статуса аварий (WORD 1)</div>
<div class="t" style="top:195.5px;line-height:20px;font-size:14.6px;color:#2e2e2e;left:798px;">Целый</div>
<div class="t" style="top:195.5px;line-height:20px;font-size:14.6px;color:#2e2e2e;left:915px;">47368</div>
<div class="t" style="top:221.5px;line-height:20px;font-size:14.6px;color:#3c3c3c;left:257.5px;">2</div>
<div class="t" style="top:220.5px;line-height:20px;font-size:14.6px;color:#2e2e2e;left:287px;">R2w</div>
<div class="t" style="top:220.5px;line-height:20px;font-size:14.6px;color:#2e2e2e;left:343px;letter-spacing:0.04px;">Время изменения статуса аварий (WORD 2)</div>
<div class="t" style="top:220.5px;line-height:20px;font-size:14.6px;color:#2e2e2e;left:798px;">Целый</div>
<div class="t" style="top:220.5px;line-height:20px;font-size:14.6px;color:#2e2e2e;left:915px;">21886</div>
<div class="t" style="top:246.5px;line-height:20px;font-size:14.6px;color:#3c3c3c;left:257.5px;">3</div>
<div class="t" style="top:245.5px;line-height:20px;font-size:14.6px;color:#2e2e2e;left:287px;">R3w</div>
<div class="t" style="top:245.5px;line-height:20px;font-size:14.6px;color:#2e2e2e;left:343px;letter-spacing:0.04px;">Группа регистров</div>
<div class="t" style="top:245.5px;line-height:20px;font-size:14.6px;color:#2e2e2e;left:798px;">Целый</div>
<div class="t" style="top:245.5px;line-height:20px;font-size:14.6px;color:#2e2e2e;left:915px;">0</div>
<div class="t" style="top:271.5px;line-height:20px;font-size:14.6px;color:#3c3c3c;left:257.5px;">4</div>
<div class="t" style="top:270.5px;line-height:20px;font-size:14.6px;color:#2e2e2e;left:287px;">R4w</div>
<div class="t" style="top:270.5px;line-height:20px;font-size:14.6px;color:#2e2e2e;left:343px;letter-spacing:0.04px;">Группа регистров</div>
<div class="t" style="top:270.5px;line-height:20px;font-size:14.6px;color:#2e2e2e;left:798px;">Целый</div>
<div class="t" style="top:270.5px;line-height:20px;font-size:14.6px;color:#2e2e2e;left:915px;">0</div>
<div class="t" style="top:296.5px;line-height:20px;font-size:14.6px;color:#3c3c3c;left:257.5px;">5</div>
<div class="t" style="top:295.5px;line-height:20px;font-size:14.6px;color:#2e2e2e;left:287px;">R5w</div>
<div class="t" style="top:295.5px;line-height:20px;font-size:14.6px;color:#2e2e2e;left:343px;letter-spacing:0.04px;">Группа регистров</div>
<div class="t" style="top:295.5px;line-height:20px;font-size:14.6px;color:#2e2e2e;left:798px;">Целый</div>
<div class="t" style="top:295.5px;line-height:20px;font-size:14.6px;color:#2e2e2e;left:915px;">0</div>
<div class="t" style="top:321.5px;line-height:20px;font-size:14.6px;color:#3c3c3c;left:257.5px;">6</div>
<div class="t" style="top:320.5px;line-height:20px;font-size:14.6px;color:#2e2e2e;left:287px;">R6w</div>
<div class="t" style="top:320.5px;line-height:20px;font-size:14.6px;color:#2e2e2e;left:343px;letter-spacing:0.04px;">Группа регистров</div>
<div class="t" style="top:320.5px;line-height:20px;font-size:14.6px;color:#2e2e2e;left:798px;">Целый</div>
<div class="t" style="top:320.5px;line-height:20px;font-size:14.6px;color:#2e2e2e;left:915px;">0</div>
<div class="t" style="top:346.5px;line-height:20px;font-size:14.6px;color:#3c3c3c;left:257.5px;">7</div>
<div class="t" style="top:345.5px;line-height:20px;font-size:14.6px;color:#2e2e2e;left:287px;">R7w</div>
<div class="t" style="top:345.5px;line-height:20px;font-size:14.6px;color:#2e2e2e;left:343px;letter-spacing:0.04px;">Код аварии Logamatic 1</div>
<div class="t" style="top:345.5px;line-height:20px;font-size:14.6px;color:#2e2e2e;left:798px;">Целый</div>
<div class="t" style="top:345.5px;line-height:20px;font-size:14.6px;color:#2e2e2e;left:915px;">0</div>
<div class="t" style="top:371.5px;line-height:20px;font-size:14.6px;color:#3c3c3c;left:257.5px;">8</div>
<div class="t" style="top:370.5px;line-height:20px;font-size:14.6px;color:#2e2e2e;left:287px;">R8w</div>
<div class="t" style="top:370.5px;line-height:20px;font-size:14.6px;color:#2e2e2e;left:343px;letter-spacing:0.04px;">Код аварии Logamatic 2</div>
<div class="t" style="top:370.5px;line-height:20px;font-size:14.6px;color:#2e2e2e;left:798px;">Целый</div>
<div class="t" style="top:370.5px;line-height:20px;font-size:14.6px;color:#2e2e2e;left:915px;">0</div>
<div class="t" style="top:396.5px;line-height:20px;font-size:14.6px;color:#3c3c3c;left:257.5px;">9</div>
<div class="t" style="top:395.5px;line-height:20px;font-size:14.6px;color:#2e2e2e;left:287px;">R9w</div>
<div class="t" style="top:395.5px;line-height:20px;font-size:14.6px;color:#2e2e2e;left:343px;letter-spacing:0.04px;">Время изменения статуса работ (WORD 1)</div>
<div class="t" style="top:395.5px;line-height:20px;font-size:14.6px;color:#2e2e2e;left:798px;">Целый</div>
<div class="t" style="top:395.5px;line-height:20px;font-size:14.6px;color:#2e2e2e;left:915px;">48361</div>
<div class="t" style="top:421.5px;line-height:20px;font-size:14.6px;color:#3c3c3c;left:257.5px;">10</div>
<div class="t" style="top:420.5px;line-height:20px;font-size:14.6px;color:#2e2e2e;left:287px;">R10w</div>
<div class="t" style="top:420.5px;line-height:20px;font-size:14.6px;color:#2e2e2e;left:343px;letter-spacing:0.04px;">Время изменения статуса работ (WORD 2)</div>
<div class="t" style="top:420.5px;line-height:20px;font-size:14.6px;color:#2e2e2e;left:798px;">Целый</div>
<div class="t" style="top:420.5px;line-height:20px;font-size:14.6px;color:#2e2e2e;left:915px;">21886</div>
<div class="t" style="top:446.5px;line-height:20px;font-size:14.6px;color:#3c3c3c;left:257.5px;">11</div>
<div class="t" style="top:445.5px;line-height:20px;font-size:14.6px;color:#2e2e2e;left:287px;">R11w</div>
<div class="t" style="top:445.5px;line-height:20px;font-size:14.6px;color:#2e2e2e;left:343px;letter-spacing:0.04px;">Группа регистров</div>
<div class="t" style="top:445.5px;line-height:20px;font-size:14.6px;color:#2e2e2e;left:798px;">Целый</div>
<div class="t" style="top:445.5px;line-height:20px;font-size:14.6px;color:#2e2e2e;left:915px;">2048</div>
<div class="t" style="top:471.5px;line-height:20px;font-size:14.6px;color:#3c3c3c;left:257.5px;">12</div>
<div class="t" style="top:470.5px;line-height:20px;font-size:14.6px;color:#2e2e2e;left:287px;">R12w</div>
<div class="t" style="top:470.5px;line-height:20px;font-size:14.6px;color:#2e2e2e;left:343px;letter-spacing:0.04px;">Время отправки аналоговых параметров на сервер (WORD 1)</div>
<div class="t" style="top:470.5px;line-height:20px;font-size:14.6px;color:#2e2e2e;left:798px;">Целый</div>
<div class="t" style="top:470.5px;line-height:20px;font-size:14.6px;color:#2e2e2e;left:915px;">49063</div>
<div class="t" style="top:496.5px;line-height:20px;font-size:14.6px;color:#3c3c3c;left:257.5px;">13</div>
<div class="t" style="top:495.5px;line-height:20px;font-size:14.6px;color:#2e2e2e;left:287px;">R13w</div>
<div class="t" style="top:495.5px;line-height:20px;font-size:14.6px;color:#2e2e2e;left:343px;letter-spacing:0.04px;">Время отправки аналоговых параметров на сервер (WORD 2)</div>
<div class="t" style="top:495.5px;line-height:20px;font-size:14.6px;color:#2e2e2e;left:798px;">Целый</div>
<div class="t" style="top:495.5px;line-height:20px;font-size:14.6px;color:#2e2e2e;left:915px;">21886</div>
<div class="t" style="top:521.5px;line-height:20px;font-size:14.6px;color:#3c3c3c;left:257.5px;">14</div>
<div class="t" style="top:520.5px;line-height:20px;font-size:14.6px;color:#2e2e2e;left:287px;">R14w</div>
<div class="t" style="top:520.5px;line-height:20px;font-size:14.6px;color:#2e2e2e;left:343px;letter-spacing:0.04px;">Напряжение на фазе А ввода 1</div>
<div class="t" style="top:520.5px;line-height:20px;font-size:14.6px;color:#2e2e2e;left:798px;">Целый</div>
<div class="t" style="top:520.5px;line-height:20px;font-size:14.6px;color:#2e2e2e;left:915px;">2258</div>
<div class="t" style="top:546.5px;line-height:20px;font-size:14.6px;color:#3c3c3c;left:257.5px;">15</div>
<div class="t" style="top:545.5px;line-height:20px;font-size:14.6px;color:#2e2e2e;left:287px;">R15w</div>
<div class="t" style="top:545.5px;line-height:20px;font-size:14.6px;color:#2e2e2e;left:343px;letter-spacing:0.04px;">Напряжение на фазе B ввода 1</div>
<div class="t" style="top:545.5px;line-height:20px;font-size:14.6px;color:#2e2e2e;left:798px;">Целый</div>
<div class="t" style="top:545.5px;line-height:20px;font-size:14.6px;color:#2e2e2e;left:915px;">2247</div>
<div class="t" style="top:571.5px;line-height:20px;font-size:14.6px;color:#3c3c3c;left:257.5px;">16</div>
<div class="t" style="top:570.5px;line-height:20px;font-size:14.6px;color:#2e2e2e;left:287px;">R16w</div>
<div class="t" style="top:570.5px;line-height:20px;font-size:14.6px;color:#2e2e2e;left:343px;letter-spacing:0.04px;">Напряжение на фазе C ввода 1</div>
<div class="t" style="top:570.5px;line-height:20px;font-size:14.6px;color:#2e2e2e;left:798px;">Целый</div>
<div class="t" style="top:570.5px;line-height:20px;font-size:14.6px;color:#2e2e2e;left:915px;">2263</div>
<div class="t" style="top:596.5px;line-height:20px;font-size:14.6px;color:#3c3c3c;left:257.5px;">17</div>
<div class="t" style="top:595.5px;line-height:20px;font-size:14.6px;color:#2e2e2e;left:287px;">R17w</div>
<div class="t" style="top:595.5px;line-height:20px;font-size:14.6px;color:#2e2e2e;left:343px;letter-spacing:0.04px;">Напряжение на фазе А ввода 2</div>
<div class="t" style="top:595.5px;line-height:20px;font-size:14.6px;color:#2e2e2e;left:798px;">Целый</div>
<div class="t" style="top:595.5px;line-height:20px;font-size:14.6px;color:#2e2e2e;left:915px;">2193</div>
<div class="t" style="top:621.5px;line-height:20px;font-size:14.6px;color:#3c3c3c;left:257.5px;">18</div>
<div class="t" style="top:620.5px;line-height:20px;font-size:14.6px;color:#2e2e2e;left:287px;">R18w</div>
<div class="t" style="top:620.5px;line-height:20px;font-size:14.6px;color:#2e2e2e;left:343px;letter-spacing:0.04px;">Напряжение на фазе B ввода 2</div>
<div class="t" style="top:620.5px;line-height:20px;font-size:14.6px;color:#2e2e2e;left:798px;">Целый</div>
<div class="t" style="top:620.5px;line-height:20px;font-size:14.6px;color:#2e2e2e;left:915px;">2192</div>
<div class="t" style="top:646.5px;line-height:20px;font-size:14.6px;color:#3c3c3c;left:257.5px;">19</div>
<div class="t" style="top:645.5px;line-height:20px;font-size:14.6px;color:#2e2e2e;left:287px;">R19w</div>
<div class="t" style="top:645.5px;line-height:20px;font-size:14.6px;color:#2e2e2e;left:343px;letter-spacing:0.04px;">Напряжение на фазе C ввода 2</div>
<div class="t" style="top:645.5px;line-height:20px;font-size:14.6px;color:#2e2e2e;left:798px;">Целый</div>
<div class="t" style="top:645.5px;line-height:20px;font-size:14.6px;color:#2e2e2e;left:915px;">2184</div>
<div style="left:287px;top:195px;width:53px;height:22px;border:1px dotted #111;"></div>
<div style="left:1866.5px;top:171px;width:11.5px;height:497px;background:linear-gradient(90deg,#cfcecc,#dddcda 40%,#e3e2e0);border-radius:6px;border:1px solid #b9b8b5;"></div>
<svg style="left:1869.25px;top:176px" width="6" height="4" viewBox="0 0 6 4"><path d="M0 4L3 0L6 4z" fill="#6f6e6a"/></svg>
<svg style="left:1869.25px;top:659px" width="6" height="4" viewBox="0 0 6 4"><path d="M0 0L3 4L6 0z" fill="#6f6e6a"/></svg>
<div style="left:1866.5px;top:182px;width:11.5px;height:59px;background:linear-gradient(90deg,#f8f8f7,#ecebe9);border-radius:6px;border:1px solid #a3a29f;"></div>
<svg style="left:1869.75px;top:209px" width="5" height="7" viewBox="0 0 5 7"><path d="M0 .5H5M0 3.500H5M0 6.500H5" stroke="#8d8c88" stroke-width="1"/></svg>
<div class="t" style="top:677.5px;line-height:20px;font-size:14.6px;color:#3c3c3c;letter-spacing:0.357px;left:250.5px;">Язык программы.:</div>
<div style="left:384px;top:675px;width:1472px;height:24px;background:#fff;border:1px solid #b5b3ae;border-radius:4px 0 0 4px;"></div>
<div style="left:1855px;top:675px;width:25px;height:24px;background:linear-gradient(#fdfdfc,#e9e8e6);border:1px solid #b5b3ae;border-radius:0 4px 4px 0;"></div>
<svg style="left:1864px;top:685px" width="8" height="6" viewBox="0 0 8 6"><path d="M0 0H8L4 5.500z" fill="#5a5955"/></svg>
<div class="t" style="top:677.0px;line-height:20px;font-size:14.6px;color:#2e2e2e;letter-spacing:-0.143px;left:390px;">JavaLikeCalc.JavaScript</div>
<div class="t" style="top:704.0px;line-height:20px;font-size:14.6px;color:#3c3c3c;letter-spacing:0.215px;left:250.5px;">Переводить программу:</div>
<div style="left:427.5px;top:706.5px;width:14.5px;height:14px;background:linear-gradient(#f58a5e,#e8693b);border:1px solid #b9532c;border-radius:2.5px;"></div>
<svg style="left:428px;top:703px" width="17" height="16" viewBox="0 0 17 16"><path d="M3.500 9.500L7 13.500L14.500 3.500" stroke="#6e3a22" stroke-width="2.200" fill="none"/></svg>
<div class="t" style="top:726.5px;line-height:20px;font-size:14.6px;color:#3c3c3c;letter-spacing:0.156px;left:250.5px;">Программа:</div>
<div style="left:251px;top:748px;width:1630px;height:413px;background:#fff;border:1px solid #c9c8c5;border-top-color:#b9b8b5;"></div>
<div style="left:252px;top:749px;width:1613px;height:411px;overflow:hidden;">
<div class="t" style="left:32.3px;top:-10px;font-size:13.33px;line-height:18px;font-family:'Liberation Mono',monospace;"><span style="color:#888888">tTimeWork</span> <b style="color:#00007f">=</b> <span style="color:#888888">dwTimeWork</span><span style="color:#5c5cff">;</span></div>
<div class="t" style="left:32.3px;top:6px;font-size:13.33px;line-height:18px;font-family:'Liberation Mono',monospace;"><span style="color:#888888">TimeState</span> <b style="color:#00007f">=</b> <span style="color:#5c5cff">(</span><span style="color:#888888">R10w</span><b style="color:#00007f">&lt;&lt;</b><span style="color:#fbb060">16</span><span style="color:#5c5cff">)</span><b style="color:#00007f">|</b><span style="color:#888888">R9w</span><span style="color:#5c5cff">;</span></div>
<div class="t" style="left:32.3px;top:22px;font-size:13.33px;line-height:18px;font-family:'Liberation Mono',monospace;"><span style="color:#888888">wTorch1</span> <b style="color:#00007f">=</b> <span style="color:#888888">R11w</span><b style="color:#00007f">&amp;</b><span style="color:#5c5cff">(</span><span style="color:#fbb060">1</span><span style="color:#5c5cff">)</span><span style="color:#5c5cff">;</span></div>
<div class="t" style="left:32.3px;top:38px;font-size:13.33px;line-height:18px;font-family:'Liberation Mono',monospace;"><span style="color:#888888">wTorch2</span> <b style="color:#00007f">=</b> <span style="color:#888888">R11w</span><b style="color:#00007f">&amp;</b><span style="color:#5c5cff">(</span><span style="color:#fbb060">2</span><span style="color:#5c5cff">)</span><span style="color:#5c5cff">;</span></div>
<div class="t" style="left:32.3px;top:54px;font-size:13.33px;line-height:18px;font-family:'Liberation Mono',monospace;"><span style="color:#888888">wPmp1K</span> <b style="color:#00007f">=</b> <span style="color:#888888">R11w</span><b style="color:#00007f">&amp;</b><span style="color:#5c5cff">(</span><span style="color:#fbb060">4</span><span style="color:#5c5cff">)</span><span style="color:#5c5cff">;</span></div>
<div class="t" style="left:32.3px;top:70px;font-size:13.33px;line-height:18px;font-family:'Liberation Mono',monospace;"><span style="color:#888888">wPmp2K</span> <b style="color:#00007f">=</b> <span style="color:#888888">R11w</span><b style="color:#00007f">&amp;</b><span style="color:#5c5cff">(</span><span style="color:#fbb060">8</span><span style="color:#5c5cff">)</span><span style="color:#5c5cff">;</span></div>
<div class="t" style="left:32.3px;top:86px;font-size:13.33px;line-height:18px;font-family:'Liberation Mono',monospace;"><span style="color:#888888">wPmp1KK</span> <b style="color:#00007f">=</b> <span style="color:#888888">R11w</span><b style="color:#00007f">&amp;</b><span style="color:#5c5cff">(</span><span style="color:#fbb060">16</span><span style="color:#5c5cff">)</span><span style="color:#5c5cff">;</span></div>
<div class="t" style="left:32.3px;top:102px;font-size:13.33px;line-height:18px;font-family:'Liberation Mono',monospace;"><span style="color:#888888">wPmp2KK</span> <b style="color:#00007f">=</b> <span style="color:#888888">R11w</span><b style="color:#00007f">&amp;</b><span style="color:#5c5cff">(</span><span style="color:#fbb060">32</span><span style="color:#5c5cff">)</span><span style="color:#5c5cff">;</span></div>
<div class="t" style="left:32.3px;top:118px;font-size:13.33px;line-height:18px;font-family:'Liberation Mono',monospace;"><span style="color:#888888">wPmp1KO</span> <b style="color:#00007f">=</b> <span style="color:#888888">R11w</span><b style="color:#00007f">&amp;</b><span style="color:#5c5cff">(</span><span style="color:#fbb060">64</span><span style="color:#5c5cff">)</span><span style="color:#5c5cff">;</span></div>
<div class="t" style="left:32.3px;top:134px;font-size:13.33px;line-height:18px;font-family:'Liberation Mono',monospace;"><span style="color:#888888">wPmp2KO</span> <b style="color:#00007f">=</b> <span style="color:#888888">R11w</span><b style="color:#00007f">&amp;</b><span style="color:#5c5cff">(</span><span style="color:#fbb060">128</span><span style="color:#5c5cff">)</span><span style="color:#5c5cff">;</span></div>
<div class="t" style="left:32.3px;top:150px;font-size:13.33px;line-height:18px;font-family:'Liberation Mono',monospace;"><span style="color:#888888">wPmp3KO</span> <b style="color:#00007f">=</b> <span style="color:#888888">R11w</span><b style="color:#00007f">&amp;</b><span style="color:#5c5cff">(</span><span style="color:#fbb060">256</span><span style="color:#5c5cff">)</span><span style="color:#5c5cff">;</span></div>
<div class="t" style="left:32.3px;top:166px;font-size:13.33px;line-height:18px;font-family:'Liberation Mono',monospace;"><span style="color:#888888">wPmp4KO</span> <b style="color:#00007f">=</b> <span style="color:#888888">R11w</span><b style="color:#00007f">&amp;</b><span style="color:#5c5cff">(</span><span style="color:#fbb060">512</span><span style="color:#5c5cff">)</span><span style="color:#5c5cff">;</span></div>
<div class="t" style="left:32.3px;top:182px;font-size:13.33px;line-height:18px;font-family:'Liberation Mono',monospace;"><span style="color:#888888">wPmp1KTP</span> <b style="color:#00007f">=</b> <span style="color:#888888">R11w</span><b style="color:#00007f">&amp;</b><span style="color:#5c5cff">(</span><span style="color:#fbb060">1024</span><span style="color:#5c5cff">)</span><span style="color:#5c5cff">;</span></div>
<div class="t" style="left:32.3px;top:198px;font-size:13.33px;line-height:18px;font-family:'Liberation Mono',monospace;"><span style="color:#888888">wPmp2KTP</span> <b style="color:#00007f">=</b> <span style="color:#888888">R11w</span><b style="color:#00007f">&amp;</b><span style="color:#5c5cff">(</span><span style="color:#fbb060">2048</span><span style="color:#5c5cff">)</span><span style="color:#5c5cff">;</span></div>
<div class="t" style="left:32.3px;top:214px;font-size:13.33px;line-height:18px;font-family:'Liberation Mono',monospace;"><span style="color:#888888">wPmp1KHVS</span> <b style="color:#00007f">=</b> <span style="color:#888888">R11w</span><b style="color:#00007f">&amp;</b><span style="color:#5c5cff">(</span><span style="color:#fbb060">4096</span><span style="color:#5c5cff">)</span><span style="color:#5c5cff">;</span></div>
<div class="t" style="left:32.3px;top:230px;font-size:13.33px;line-height:18px;font-family:'Liberation Mono',monospace;"><span style="color:#888888">wPmp2KHVS</span> <b style="color:#00007f">=</b> <span style="color:#888888">R11w</span><b style="color:#00007f">&amp;</b><span style="color:#5c5cff">(</span><span style="color:#fbb060">8192</span><span style="color:#5c5cff">)</span><span style="color:#5c5cff">;</span></div>
<div class="t" style="left:4.4px;top:246px;font-size:13.33px;line-height:18px;font-family:'Liberation Mono',monospace;"><span style="color:#5c5cff">}</span></div>
<div class="t" style="left:4.4px;top:262px;font-size:13.33px;line-height:18px;font-family:'Liberation Mono',monospace;"></div>
<div class="t" style="left:4.4px;top:278px;font-size:13.33px;line-height:18px;font-family:'Liberation Mono',monospace;"><span style="color:#888888">dwTimeAnalog</span> <b style="color:#00007f">=</b> <span style="color:#5c5cff">(</span><span style="color:#888888">R13w</span><b style="color:#00007f">&lt;&lt;</b><span style="color:#fbb060">16</span><span style="color:#5c5cff">)</span><b style="color:#00007f">|</b><span style="color:#888888">R12w</span><span style="color:#5c5cff">;</span></div>
<div class="t" style="left:4.4px;top:294px;font-size:13.33px;line-height:18px;font-family:'Liberation Mono',monospace;"><b style="color:#00007f">if</b><span style="color:#5c5cff">(</span><span style="color:#5c5cff">(</span><span style="color:#888888">tTimeAnalog</span> <b style="color:#00007f">!=</b> <span style="color:#888888">dwTimeAnalog</span><span style="color:#5c5cff">)</span><b style="color:#00007f">&amp;&amp;</b><span style="color:#5c5cff">(</span><span style="color:#888888">dwTimeAnalog</span> <b style="color:#00007f">&gt;</b> <span style="color:#888888">SysTime</span> <b style="color:#00007f">-</b> <span style="color:#fbb060">300</span><span style="color:#5c5cff">)</span><b style="color:#00007f">&amp;&amp;</b><span style="color:#5c5cff">(</span><span style="color:#888888">dwTimeAnalog</span> <b style="color:#00007f">&lt;</b> <span style="color:#888888">SysTime</span> <b style="color:#00007f">+</b> <span style="color:#fbb060">300</span><span style="color:#5c5cff">)</span><span style="color:#5c5cff">)</span></div>
<div class="t" style="left:4.4px;top:310px;font-size:13.33px;line-height:18px;font-family:'Liberation Mono',monospace;"><span style="color:#5c5cff">{</span></div>
<div class="t" style="left:32.3px;top:326px;font-size:13.33px;line-height:18px;font-family:'Liberation Mono',monospace;"><span style="color:#888888">tTimeAnalog</span> <b style="color:#00007f">=</b> <span style="color:#888888">dwTimeAnalog</span><span style="color:#5c5cff">;</span></div>
<div class="t" style="left:32.3px;top:342px;font-size:13.33px;line-height:18px;font-family:'Liberation Mono',monospace;"><span style="color:#888888">TimeAnalog</span> <b style="color:#00007f">=</b> <span style="color:#5c5cff">(</span><span style="color:#888888">R13w</span><b style="color:#00007f">&lt;&lt;</b><span style="color:#fbb060">16</span><span style="color:#5c5cff">)</span><b style="color:#00007f">|</b><span style="color:#888888">R12w</span><span style="color:#5c5cff">;</span></div>
<div class="t" style="left:32.3px;top:358px;font-size:13.33px;line-height:18px;font-family:'Liberation Mono',monospace;"><span style="color:#888888">U_V1fA</span> <b style="color:#00007f">=</b> <span style="color:#5c5cff">(</span><span style="color:#888888">R14w</span><b style="color:#00007f">&lt;</b><span style="color:#fbb060">32768</span><span style="color:#5c5cff">)</span><b style="color:#00007f">?</b><span style="color:#5c5cff">(</span><span style="color:#888888">R14w</span><b style="color:#00007f">/</b><span style="color:#fbb060">10</span><span style="color:#5c5cff">)</span><span style="color:#5c5cff">:</span><span style="color:#5c5cff">(</span><span style="color:#5c5cff">(</span><span style="color:#888888">R14w</span><b style="color:#00007f">-</b><span style="color:#fbb060">65536</span><span style="color:#5c5cff">)</span><b style="color:#00007f">/</b><span style="color:#fbb060">10</span><span style="color:#5c5cff">)</span><span style="color:#5c5cff">;</span></div>
<div class="t" style="left:32.3px;top:374px;font-size:13.33px;line-height:18px;font-family:'Liberation Mono',monospace;"><span style="color:#888888">U_V1fB</span> <b style="color:#00007f">=</b> <span style="color:#5c5cff">(</span><span style="color:#888888">R15w</span><b style="color:#00007f">&lt;</b><span style="color:#fbb060">32768</span><span style="color:#5c5cff">)</span><b style="color:#00007f">?</b><span style="color:#5c5cff">(</span><span style="color:#888888">R15w</span><b style="color:#00007f">/</b><span style="color:#fbb060">10</span><span style="color:#5c5cff">)</span><span style="color:#5c5cff">:</span><span style="color:#5c5cff">(</span><span style="color:#5c5cff">(</span><span style="color:#888888">R15w</span><b style="color:#00007f">-</b><span style="color:#fbb060">65536</span><span style="color:#5c5cff">)</span><b style="color:#00007f">/</b><span style="color:#fbb060">10</span><span style="color:#5c5cff">)</span><span style="color:#5c5cff">;</span></div>
<div class="t" style="left:32.3px;top:390px;font-size:13.33px;line-height:18px;font-family:'Liberation Mono',monospace;"><span style="color:#888888">U_V1fC</span> <b style="color:#00007f">=</b> <span style="color:#5c5cff">(</span><span style="color:#888888">R16w</span><b style="color:#00007f">&lt;</b><span style="color:#fbb060">32768</span><span style="color:#5c5cff">)</span><b style="color:#00007f">?</b><span style="color:#5c5cff">(</span><span style="color:#888888">R16w</span><b style="color:#00007f">/</b><span style="color:#fbb060">10</span><span style="color:#5c5cff">)</span><span style="color:#5c5cff">:</span><span style="color:#5c5cff">(</span><span style="color:#5c5cff">(</span><span style="color:#888888">R16w</span><b style="color:#00007f">-</b><span style="color:#fbb060">65536</span><span style="color:#5c5cff">)</span><b style="color:#00007f">/</b><span style="color:#fbb060">10</span><span style="color:#5c5cff">)</span><span style="color:#5c5cff">;</span></div>
<div class="t" style="left:32.3px;top:406px;font-size:13.33px;line-height:18px;font-family:'Liberation Mono',monospace;"><span style="color:#888888">U_V2fA</span> <b style="color:#00007f">=</b> <span style="color:#5c5cff">(</span><span style="color:#888888">R17w</span><b style="color:#00007f">&lt;</b><span style="color:#fbb060">32768</span><span style="color:#5c5cff">)</span><b style="color:#00007f">?</b><span style="color:#5c5cff">(</span><span style="color:#888888">R17w</span><b style="color:#00007f">/</b><span style="color:#fbb060">10</span><span style="color:#5c5cff">)</span><span style="color:#5c5cff">:</span><span style="color:#5c5cff">(</span><span style="color:#5c5cff">(</span><span style="color:#888888">R17w</span><b style="color:#00007f">-</b><span style="color:#fbb060">65536</span><span style="color:#5c5cff">)</span><b style="color:#00007f">/</b><span style="color:#fbb060">10</span><span style="color:#5c5cff">)</span><span style="color:#5c5cff">;</span></div>
</div>
<div style="left:1866px;top:749px;width:14px;height:411px;overflow:hidden;">
<div style="left:0.5px;top:0px;width:11.5px;height:440px;background:linear-gradient(90deg,#cfcecc,#dddcda 40%,#e3e2e0);border-radius:6px;border:1px solid #b9b8b5;"></div>
<svg style="left:3.25px;top:5px" width="6" height="4" viewBox="0 0 6 4"><path d="M0 4L3 0L6 4z" fill="#6f6e6a"/></svg>
<svg style="left:3.25px;top:431px" width="6" height="4" viewBox="0 0 6 4"><path d="M0 0L3 4L6 0z" fill="#6f6e6a"/></svg>
</div>
<div style="left:65px;top:1177px;width:1855px;height:1px;background:#d5d4d1;"></div>
<div style="left:1858px;top:1181px;width:14px;height:15px;border-right:1.500px solid #222;border-bottom:1.500px solid #222;background:#f7f7f6;"></div>
<svg style="left:1861px;top:1186px" width="7" height="5" viewBox="0 0 7 5"><path d="M0 0H7L3.500 4.500z" fill="#111"/></svg>
<div class="t" style="top:1178.0px;line-height:20px;font-size:14.6px;color:#f00000;letter-spacing:0.940px;left:1889px;">root</div>
<svg style="left:68px;top:1194px" width="2" height="2" viewBox="0 0 2 2"><rect width="1.500" height="1.500" fill="#e0b060"/></svg>
<div style="left:0px;top:0px;width:1920px;height:24px;background:linear-gradient(#5b5850,#45433e 60%,#3d3c38);"></div>
<div style="left:5.3px;top:4.3px;width:15.4px;height:15.4px;border-radius:50%;background:radial-gradient(circle at 50% 30%,#f79a72,#e9532a 70%);border:1px solid #8a3418;"></div>
<div style="left:24.8px;top:4.3px;width:15.4px;height:15.4px;border-radius:50%;background:linear-gradient(#5f5c54,#4a4842);border:1px solid #35342f;"></div>
<div style="left:43.8px;top:4.3px;width:15.4px;height:15.4px;border-radius:50%;background:linear-gradient(#5f5c54,#4a4842);border:1px solid #35342f;"></div>
<svg style="left:9px;top:8px" width="8" height="8" viewBox="0 0 8 8"><path d="M1.2 1.2L6.8 6.8M6.8 1.2L1.2 6.8" stroke="#3a2a22" stroke-width="1.5" fill="none"/></svg>
<svg style="left:28.5px;top:8px" width="8" height="8" viewBox="0 0 8 8"><path d="M1 4H7" stroke="#2e2d29" stroke-width="1.5"/></svg>
<svg style="left:47.5px;top:8px" width="8" height="8" viewBox="0 0 8 8"><rect x="1" y="1.5" width="6" height="5" stroke="#2e2d29" stroke-width="1.3" fill="none"/></svg>
<div class="t" style="top:2.0px;line-height:20px;font-size:14.5px;color:#dfdbd2;letter-spacing:0.265px;font-weight:bold;left:75.70000000000005px;">OpenSCADA QTCfg: Client</div>
<svg style="left:1561px;top:3px" width="20" height="18" viewBox="0 0 20 18"><g fill="none" stroke="#8c8980" stroke-width="1.5"><path d="M6.5 4.5a5 5 0 0 0 0 7M13.5 4.5a5 5 0 0 1 0 7M3.8 2.5a8 8 0 0 0 0 11M16.2 2.5a8 8 0 0 1 0 11"/></g><circle cx="10" cy="8" r="1.8" fill="#8c8980"/><rect x="9.3" y="8" width="1.4" height="9" fill="#8c8980"/></svg>
<svg style="left:1594px;top:3px" width="18" height="18" viewBox="0 0 18 18"><circle cx="9" cy="9" r="8.5" fill="#dfdbd2"/><circle cx="9" cy="9" r="4.6" fill="none" stroke="#3d3c38" stroke-width="1.700"/><circle cx="3" cy="9" r="1.500" fill="#3d3c38"/><circle cx="12" cy="3.800" r="1.500" fill="#3d3c38"/><circle cx="12" cy="14.200" r="1.500" fill="#3d3c38"/></svg>
<svg style="left:1626px;top:4px" width="18" height="17" viewBox="0 0 18 17"><path d="M5 0L0 6H3.2V13H6.8V6H10z" fill="#dfdbd2"/><path d="M13 17L8 11H11.2V4H14.8V11H18z" fill="#dfdbd2"/></svg>
<div style="left:1657px;top:2px;width:20px;height:20px;background:#dfdbd2;border-radius:2.5px;"></div>
<div class="t" style="top:3.5px;line-height:18px;font-size:13px;color:#3d3c38;left:1167px;width:1000px;text-align:center;">En</div>
<svg style="left:1690px;top:6.5px" width="18" height="12" viewBox="0 0 20 13"><rect x="0" y="0" width="20" height="13" rx="1.5" fill="#dfdbd2"/><path d="M1.5 1.5L10 8L18.5 1.5M1.5 11.5L7 6M18.5 11.5L13 6" stroke="#3d3c38" stroke-width="1.3" fill="none"/></svg>
<svg style="left:1721px;top:4px" width="20" height="16" viewBox="0 0 20 16"><path d="M0 5.5H3.5L8 1.5V14.5L3.5 10.5H0z" fill="#dfdbd2"/><path d="M10.5 5a4 4 0 0 1 0 6" stroke="#dfdbd2" stroke-width="1.6" fill="none"/><path d="M13 2.8a7 7 0 0 1 0 10.4" stroke="#bdb9b0" stroke-width="1.5" fill="none"/><path d="M15.8 1a9.5 9.5 0 0 1 0 14" stroke="#8c8980" stroke-width="1.4" fill="none"/></svg>
<div class="t" style="top:2.5px;line-height:20px;font-size:14px;color:#dfdbd2;letter-spacing:0.250px;left:1754.3px;">Пн., 15 июня 12:11</div>
<svg style="left:1895px;top:3px" width="18" height="18" viewBox="0 0 18 18"><circle cx="9" cy="9.5" r="5.3" fill="none" stroke="#dfdbd2" stroke-width="2.4" stroke-dasharray="2.6 1.55"/><circle cx="9" cy="9.5" r="4.2" fill="none" stroke="#dfdbd2" stroke-width="1.8"/><rect x="8" y="0.5" width="2" height="8" fill="#dfdbd2" stroke="#3d3c38" stroke-width="0.8"/></svg>
</div></body></html>
